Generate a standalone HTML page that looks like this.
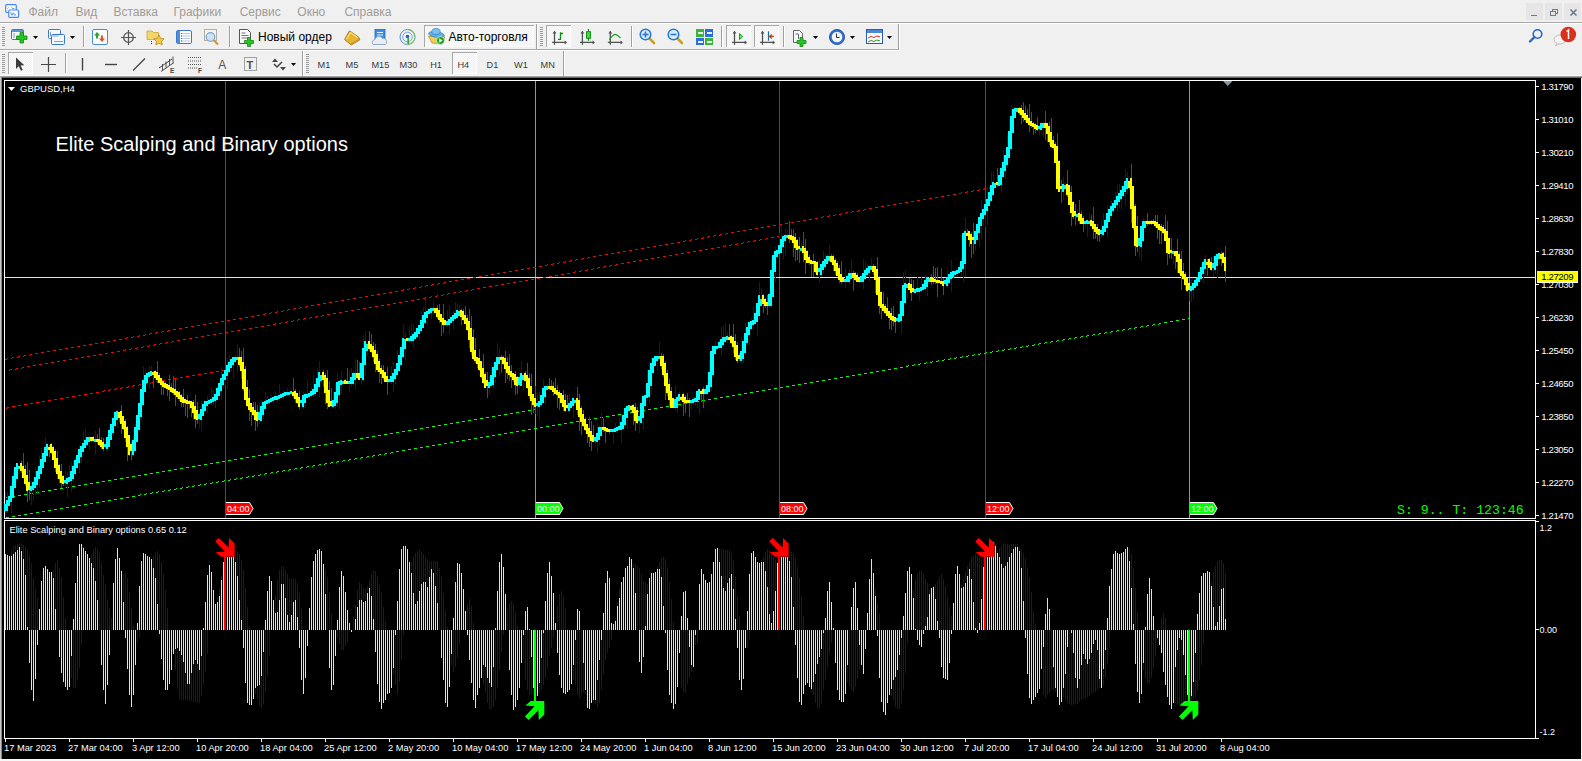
<!DOCTYPE html><html><head><meta charset="utf-8"><style>
html,body{margin:0;padding:0;}
body{width:1582px;height:761px;overflow:hidden;background:#f0f0f0;position:relative;font-family:'Liberation Sans', sans-serif;}
.t{position:absolute;white-space:nowrap;line-height:1;}
svg{position:absolute;left:0;top:0;}
</style></head><body>
<svg width="1582" height="761" viewBox="0 0 1582 761" style="font-family:'Liberation Sans', sans-serif">
<defs><pattern id="chk" x="0" y="0" width="2" height="2" patternUnits="userSpaceOnUse"><rect width="2" height="2" fill="#f0f0f0"/><rect width="1" height="1" fill="#fdfdfd"/><rect x="1" y="1" width="1" height="1" fill="#fdfdfd"/></pattern></defs>
<rect x="0" y="0" width="1582" height="22" fill="#f0f0f0"/>
<rect x="5.7" y="4.7" width="10.6" height="7.6" rx="1" fill="#fdfdfd" stroke="#4a88f0" stroke-width="1.2"/><path d="M7.5 8.5 l1 -1 M11.5 7.3 l1 1.3 h2" stroke="#4a88f0" stroke-width="0.9" fill="none"/><rect x="8.8" y="10" width="9.8" height="7.4" rx="1" fill="#fdfdfd" stroke="#4a88f0" stroke-width="1.2"/><path d="M10.5 12.3 l1.5 3 l1.3 -2.6 l1.5 2.6 l1.4 -1" stroke="#4a88f0" stroke-width="0.9" fill="none"/>
<text x="28.4" y="16" font-size="12" fill="#a19b97">Файл</text>
<text x="75.5" y="16" font-size="12" fill="#a19b97">Вид</text>
<text x="113.4" y="16" font-size="12" fill="#a19b97">Вставка</text>
<text x="173.4" y="16" font-size="12" fill="#a19b97">Графики</text>
<text x="239.7" y="16" font-size="12" fill="#a19b97">Сервис</text>
<text x="297.3" y="16" font-size="12" fill="#a19b97">Окно</text>
<text x="344.4" y="16" font-size="12" fill="#a19b97">Справка</text>
<rect x="1526" y="3" width="17" height="17" fill="#e6e6e6"/><rect x="1545" y="3" width="17" height="17" fill="#e6e6e6"/><rect x="1564" y="3" width="17" height="17" fill="#e6e6e6"/>
<g shape-rendering="crispEdges" fill="none" stroke="#6b7b8c" stroke-width="1.4"><path d="M1531 15.3 h6"/><rect x="1550.7" y="11.7" width="5" height="4"/><path d="M1552.7 11.7 v-2.3 h5 v4 h-2"/></g><path fill="none" d="M1570.5 9.5 l6 6 M1576.5 9.5 l-6 6" stroke="#6b7b8c" stroke-width="1.6"/>
<g shape-rendering="crispEdges"><rect x="0" y="22" width="1582" height="1" fill="#a9a9a9"/><rect x="0" y="23" width="1582" height="1" fill="#fdfdfd"/><rect x="0" y="49" width="899" height="1" fill="#a9a9a9"/><rect x="0" y="50" width="900" height="1" fill="#fdfdfd"/><rect x="0" y="75" width="1582" height="1" fill="#fbfbfb"/><rect x="0" y="76" width="1582" height="1" fill="#a0a0a0"/><rect x="0" y="77" width="1582" height="1" fill="#6a6a6a"/></g>
<g shape-rendering="crispEdges"><rect x="2" y="27" width="3" height="1" fill="#9c9c9c"/><rect x="2" y="29" width="3" height="1" fill="#9c9c9c"/><rect x="2" y="31" width="3" height="1" fill="#9c9c9c"/><rect x="2" y="33" width="3" height="1" fill="#9c9c9c"/><rect x="2" y="35" width="3" height="1" fill="#9c9c9c"/><rect x="2" y="37" width="3" height="1" fill="#9c9c9c"/><rect x="2" y="39" width="3" height="1" fill="#9c9c9c"/><rect x="2" y="41" width="3" height="1" fill="#9c9c9c"/><rect x="2" y="43" width="3" height="1" fill="#9c9c9c"/><rect x="2" y="45" width="3" height="1" fill="#9c9c9c"/></g>
<rect x="11.5" y="29.5" width="12" height="10" rx="1" fill="#f4f8fd" stroke="#3c78c8"/><rect x="12" y="30" width="11" height="2" fill="#5b95d9"/><path fill="none" d="M14 33 v5" stroke="#7da0c8"/><path d="M20 32.5 h3.5 v3.5 h3.5 v3.5 h-3.5 v3.5 h-3.5 v-3.5 h-3.5 v-3.5 h3.5 z" fill="#22c322" stroke="#118a11" stroke-width="0.8"/>
<path d="M33 36 h5 l-2.5 3 z" fill="#000"/>
<rect x="48.5" y="29.5" width="12" height="9" rx="1" fill="#f4f8fd" stroke="#3c78c8"/><rect x="51.5" y="34.5" width="13" height="10" rx="1" fill="#f4f8fd" stroke="#3c78c8"/><path fill="none" d="M50.5 32 v4 h8 M54 41.5 h9" stroke="#7da0c8"/>
<path d="M70 36 h5 l-2.5 3 z" fill="#000"/>
<rect x="83" y="26" width="1" height="21" fill="#a0a0a0" shape-rendering="crispEdges"/><rect x="84" y="26" width="1" height="21" fill="#ffffff" shape-rendering="crispEdges"/>
<rect x="92.5" y="29.5" width="15" height="15" rx="1.5" fill="#fbfcfe" stroke="#4a8ad8"/><path d="M97 32 l-3 3.5 h2 v3 h2 v-3 h2 z" fill="#2aa52a"/><path d="M102 42 l3 -3.5 h-2 v-3 h-2 v3 h-2 z" fill="#e0542a"/>
<circle cx="128.5" cy="37.5" r="4.8" fill="none" stroke="#555" stroke-width="1.3"/><path fill="none" d="M121 37.5 h15 M128.5 30 v15" stroke="#555" stroke-width="1.2"/>
<path d="M147 31 h5 l1.5 1.5 h5 v7 h-11.5 z" fill="#f3d66a" stroke="#c9a23a" stroke-width="0.8"/><path d="M159 35 l1.6 3.3 3.6 0.5 -2.6 2.5 0.6 3.6 -3.2 -1.7 -3.2 1.7 0.6 -3.6 -2.6 -2.5 3.6 -0.5 z" fill="#f2c844" stroke="#b98a1a" stroke-width="0.8"/><path fill="none" d="M151.5 41 v4" stroke="#333" stroke-dasharray="1 1"/>
<rect x="176.5" y="30.5" width="15" height="13" rx="1.5" fill="#fff" stroke="#3c78c8"/><rect x="177" y="31" width="3" height="12" fill="#4d8ed6"/><path fill="none" d="M182 33.5 h8 M182 36 h8 M182 38.5 h8 M182 41 h8" stroke="#9bb8e0" stroke-width="0.8"/><path fill="none" d="M181 33.5 h1 M181 38.5 h1" stroke="#e02020"/><path fill="none" d="M181 36 h1 M181 41 h1" stroke="#222"/>
<rect x="204.5" y="29.5" width="12" height="11" fill="#f7f4ee" stroke="#b9ad98"/><circle cx="210.5" cy="37" r="4.3" fill="#cfe2f6" stroke="#7aa6d6" stroke-width="1.2"/><path fill="none" d="M213.5 40 l4.5 4.5" stroke="#c99a2a" stroke-width="2"/>
<rect x="229" y="26" width="1" height="21" fill="#a0a0a0" shape-rendering="crispEdges"/><rect x="230" y="26" width="1" height="21" fill="#ffffff" shape-rendering="crispEdges"/>
<path d="M239.5 29.5 h8 l3 3 v11 h-11 z" fill="#fafafa" stroke="#555"/><path fill="none" d="M241.5 33 h4 M241.5 35.5 h7 M241.5 38 h7" stroke="#777"/><path d="M247.5 37.5 h3 v3 h3 v3 h-3 v3 h-3 v-3 h-3 v-3 h3 z" fill="#2ac42a" stroke="#118a11" stroke-width="0.8"/>
<text x="258" y="40.5" font-size="12" fill="#000">Новый ордер</text>
<path d="M344.5 39.5 L349.5 30.8 L358.8 37.2 L359.8 39.8 L351.2 45 Z" fill="#e7b52e" stroke="#a8701a" stroke-width="0.9" stroke-linejoin="round"/><path d="M346.5 39 L350.5 32.5 L357.5 37.5" fill="none" stroke="#f9e48c" stroke-width="1.1"/><path d="M351 44 L359 39" fill="none" stroke="#c98a2a" stroke-width="0.8"/>
<rect x="375" y="29.5" width="10" height="11" fill="#3a8ee6" stroke="#1e66b8" stroke-width="0.8"/><path fill="none" d="M377 32.5 h6 M377 35 h6" stroke="#dff0ff"/><path d="M373 44.5 a3 3 0 0 1 2 -5 a4 4 0 0 1 7.5 -1 a3 3 0 0 1 4 3 a2.5 2.5 0 0 1 -1 3 z" fill="#e9eef5" stroke="#8ba2bf" stroke-width="0.9"/>
<path d="M407.5 29.5 a7.5 7.5 0 0 0 0 15" fill="none" stroke="#5b8fe0" stroke-width="1"/><path d="M407.5 29.5 a7.5 7.5 0 0 1 0 15" fill="none" stroke="#7ab87a" stroke-width="1.4"/><circle cx="407.5" cy="37" r="4.8" fill="none" stroke="#6a9ae0" stroke-width="0.9"/><circle cx="407.5" cy="36.5" r="1.8" fill="#1f5fd0"/><path d="M408.2 37 v7" stroke="#2aa52a" stroke-width="1.5" fill="none"/>
<rect x="424" y="25" width="110" height="22" fill="url(#chk)" shape-rendering="crispEdges"/><path d="M424.5 47 V25.5 H534" stroke="#a8a8a8" fill="none" shape-rendering="crispEdges"/><path d="M425 46.5 H533.5 V26" stroke="#ffffff" fill="none" shape-rendering="crispEdges"/>
<path d="M428.5 36 L432 43 L442 44 L445 37 Z" fill="#f0d050" stroke="#b8922a" stroke-width="0.8"/><ellipse cx="436.5" cy="34.5" rx="8" ry="2.8" fill="#62b0e8" stroke="#3a80c0" stroke-width="0.7" transform="rotate(8 436.5 34.5)"/><ellipse cx="436" cy="31.5" rx="4.2" ry="3" fill="#7cc0f0" stroke="#3a80c0" stroke-width="0.7"/><circle cx="440.5" cy="40.5" r="4" fill="#22a022" stroke="#e8ffe8" stroke-width="0.7"/><path d="M439.2 38.3 v4.4 l3.3 -2.2 z" fill="#fff"/>
<text x="448.5" y="40.5" font-size="12" fill="#000">Авто-торговля</text>
<rect x="536" y="24" width="1" height="25" fill="#a0a0a0" shape-rendering="crispEdges"/><rect x="537" y="24" width="1" height="25" fill="#ffffff" shape-rendering="crispEdges"/>
<g shape-rendering="crispEdges"><rect x="540" y="27" width="3" height="1" fill="#9c9c9c"/><rect x="540" y="29" width="3" height="1" fill="#9c9c9c"/><rect x="540" y="31" width="3" height="1" fill="#9c9c9c"/><rect x="540" y="33" width="3" height="1" fill="#9c9c9c"/><rect x="540" y="35" width="3" height="1" fill="#9c9c9c"/><rect x="540" y="37" width="3" height="1" fill="#9c9c9c"/><rect x="540" y="39" width="3" height="1" fill="#9c9c9c"/><rect x="540" y="41" width="3" height="1" fill="#9c9c9c"/><rect x="540" y="43" width="3" height="1" fill="#9c9c9c"/><rect x="540" y="45" width="3" height="1" fill="#9c9c9c"/></g>
<rect x="546" y="25" width="25" height="22" fill="url(#chk)" shape-rendering="crispEdges"/><path d="M546.5 47 V25.5 H571" stroke="#a8a8a8" fill="none" shape-rendering="crispEdges"/><path d="M547 46.5 H570.5 V26" stroke="#ffffff" fill="none" shape-rendering="crispEdges"/>
<path d="M554.5 31.5 V44.8 M552.1 42.4 H565.5" stroke="#505050" fill="none" stroke-width="1.3"/><path d="M552.6 33.6 L554.5 30.8 L556.4 33.6 Z M564.7 40.4 L567.1 42.4 L564.7 44.4 Z" fill="#505050"/>
<path d="M558 39.4 H560.5 V32.3 M560.5 33.5 H563" stroke="#128a12" fill="none" stroke-width="1.3"/>
<path d="M582.4 31.5 V44.8 M580.0 42.4 H593.4" stroke="#505050" fill="none" stroke-width="1.3"/><path d="M580.5 33.6 L582.4 30.8 L584.3 33.6 Z M592.6 40.4 L595.0 42.4 L592.6 44.4 Z" fill="#505050"/>
<path d="M588.5 29 V40.8" stroke="#0a8a0a" stroke-width="1.2" fill="none"/><rect x="586.6" y="31.7" width="3.8" height="6.6" fill="#44dd44" stroke="#0a8a0a" stroke-width="1"/>
<path d="M610.3 31.5 V44.8 M607.9 42.4 H621.3" stroke="#505050" fill="none" stroke-width="1.3"/><path d="M608.4 33.6 L610.3 30.8 L612.1999999999999 33.6 Z M620.5 40.4 L622.9 42.4 L620.5 44.4 Z" fill="#505050"/>
<path d="M609.4 39.6 Q612.5 35 615 34.4 Q617 34.4 620.5 38.2" stroke="#2a9a2a" fill="none" stroke-width="1.2"/>
<rect x="631" y="26" width="1" height="21" fill="#a0a0a0" shape-rendering="crispEdges"/><rect x="632" y="26" width="1" height="21" fill="#ffffff" shape-rendering="crispEdges"/>
<path fill="none" d="M649.0 38.0 l5 5" stroke="#c9a02a" stroke-width="2.6" stroke-linecap="round"/><circle cx="645.5" cy="34.5" r="5.3" fill="#d8ecfb" stroke="#2a78d0" stroke-width="1.5"/><path fill="none" d="M642.5 34.5 h6" stroke="#2a78d0" stroke-width="1.6"/><path fill="none" d="M645.5 31.5 v6" stroke="#2a78d0" stroke-width="1.6"/>
<path fill="none" d="M677.0 38.0 l5 5" stroke="#c9a02a" stroke-width="2.6" stroke-linecap="round"/><circle cx="673.5" cy="34.5" r="5.3" fill="#d8ecfb" stroke="#2a78d0" stroke-width="1.5"/><path fill="none" d="M670.5 34.5 h6" stroke="#2a78d0" stroke-width="1.6"/>
<g shape-rendering="crispEdges"><rect x="696" y="29" width="8" height="7.5" fill="#3cb43c"/><rect x="705" y="29" width="8" height="7.5" fill="#2a6ed8"/><rect x="696" y="37.5" width="8" height="7.5" fill="#2a6ed8"/><rect x="705" y="37.5" width="8" height="7.5" fill="#3cb43c"/><rect x="697.5" y="32" width="5" height="2" fill="#e8f4e8"/><rect x="706.5" y="32" width="5" height="2" fill="#e8f0ff"/><rect x="697.5" y="40.5" width="5" height="2" fill="#e8f0ff"/><rect x="706.5" y="40.5" width="5" height="2" fill="#e8f4e8"/></g>
<rect x="721" y="26" width="1" height="21" fill="#a0a0a0" shape-rendering="crispEdges"/><rect x="722" y="26" width="1" height="21" fill="#ffffff" shape-rendering="crispEdges"/>
<rect x="726" y="25" width="25" height="22" fill="url(#chk)" shape-rendering="crispEdges"/><path d="M726.5 47 V25.5 H751" stroke="#a8a8a8" fill="none" shape-rendering="crispEdges"/><path d="M727 46.5 H750.5 V26" stroke="#ffffff" fill="none" shape-rendering="crispEdges"/>
<path d="M734.5 31.5 V44.8 M732.1 42.4 H745.5" stroke="#505050" fill="none" stroke-width="1.3"/><path d="M732.6 33.6 L734.5 30.8 L736.4 33.6 Z M744.7 40.4 L747.1 42.4 L744.7 44.4 Z" fill="#505050"/>
<path d="M739.5 33.6 V39.6 L742.7 36.6 Z" fill="#6ae86a" stroke="#12a012" stroke-width="1"/>
<rect x="754" y="25" width="25" height="22" fill="url(#chk)" shape-rendering="crispEdges"/><path d="M754.5 47 V25.5 H779" stroke="#a8a8a8" fill="none" shape-rendering="crispEdges"/><path d="M755 46.5 H778.5 V26" stroke="#ffffff" fill="none" shape-rendering="crispEdges"/>
<path d="M762.5 31.5 V44.8 M760.1 42.4 H773.5" stroke="#505050" fill="none" stroke-width="1.3"/><path d="M760.6 33.6 L762.5 30.8 L764.4 33.6 Z M772.7 40.4 L775.1 42.4 L772.7 44.4 Z" fill="#505050"/>
<path fill="none" d="M768.5 31.3 V40.7" stroke="#1a6aa0" stroke-width="1.2"/><path d="M774 36.4 H769.8 M771.8 34.4 L769.6 36.4 L771.8 38.4" stroke="#c8400a" stroke-width="1.3" fill="none"/>
<rect x="783" y="26" width="1" height="21" fill="#a0a0a0" shape-rendering="crispEdges"/><rect x="784" y="26" width="1" height="21" fill="#ffffff" shape-rendering="crispEdges"/>
<path d="M793.5 30.5 h6 l3 3 v9 h-9 z" fill="#fafafa" stroke="#666"/><path d="M795.5 34 h3 v5" stroke="#666" fill="none"/><path d="M800 37.5 h3 v3 h3 v3 h-3 v3 h-3 v-3 h-3 v-3 h3 z" fill="#2ac42a" stroke="#118a11" stroke-width="0.8"/>
<path d="M813 36 h5 l-2.5 3 z" fill="#000"/>
<circle cx="837" cy="37" r="7.6" fill="#2f6fd0" stroke="#1a4a9a" stroke-width="0.8"/><circle cx="837" cy="37" r="5.3" fill="#f4f6fa"/><path d="M836.5 33.5 v4 h3" stroke="#333" stroke-width="1" fill="none"/>
<path d="M850 36 h5 l-2.5 3 z" fill="#000"/>
<rect x="866.5" y="29.5" width="16" height="14" fill="#fff" stroke="#2a5ab0"/><rect x="867" y="30" width="15" height="3" fill="#4a8ad8"/><path d="M868 38 l3 -1.5 3 1 3 -1.5 3 1" stroke="#d03030" fill="none"/><path d="M868 42 l3 -1.5 3 1 3 -1.5 3 1" stroke="#2a9a2a" fill="none"/>
<path d="M887 36 h5 l-2.5 3 z" fill="#000"/>
<rect x="898" y="24" width="1" height="25" fill="#a0a0a0" shape-rendering="crispEdges"/><rect x="899" y="24" width="1" height="25" fill="#ffffff" shape-rendering="crispEdges"/>
<circle cx="1537.5" cy="34" r="4.3" fill="none" stroke="#2a64c8" stroke-width="1.6"/><path fill="none" d="M1534.5 37 l-4.5 4.5" stroke="#2a64c8" stroke-width="2.4" stroke-linecap="round"/>
<ellipse cx="1560" cy="39.5" rx="6" ry="4.5" fill="#f4f4f4" stroke="#b8b8b8" stroke-width="0.9"/><path d="M1557 43 l-1.5 3 l4 -2.5" fill="#f4f4f4" stroke="#b8b8b8" stroke-width="0.8"/><circle cx="1568.3" cy="34.5" r="7.8" fill="#d8321e"/><path d="M1566.5 31.5 l2 -1.5 v9" stroke="#fff" stroke-width="1.5" fill="none"/>
<g shape-rendering="crispEdges"><rect x="2" y="54" width="3" height="1" fill="#9c9c9c"/><rect x="2" y="56" width="3" height="1" fill="#9c9c9c"/><rect x="2" y="58" width="3" height="1" fill="#9c9c9c"/><rect x="2" y="60" width="3" height="1" fill="#9c9c9c"/><rect x="2" y="62" width="3" height="1" fill="#9c9c9c"/><rect x="2" y="64" width="3" height="1" fill="#9c9c9c"/><rect x="2" y="66" width="3" height="1" fill="#9c9c9c"/><rect x="2" y="68" width="3" height="1" fill="#9c9c9c"/><rect x="2" y="70" width="3" height="1" fill="#9c9c9c"/><rect x="2" y="72" width="3" height="1" fill="#9c9c9c"/></g>
<rect x="8" y="52" width="25" height="22" fill="url(#chk)" shape-rendering="crispEdges"/><path d="M8.5 74 V52.5 H33" stroke="#a8a8a8" fill="none" shape-rendering="crispEdges"/><path d="M9 73.5 H32.5 V53" stroke="#ffffff" fill="none" shape-rendering="crispEdges"/>
<path d="M16 57.5 v11.5 l2.7 -2.7 l2.3 4.5 l1.8 -0.9 l-2.2 -4.4 l3.7 -0.2 z" fill="#3c3c3c"/>
<path fill="none" d="M41 64.5 h15 M48.5 57 v15" stroke="#4a4a4a" stroke-width="1.2"/>
<rect x="65" y="53" width="1" height="20" fill="#a0a0a0" shape-rendering="crispEdges"/><rect x="66" y="53" width="1" height="20" fill="#ffffff" shape-rendering="crispEdges"/>
<path fill="none" d="M82.5 58 v12.5" stroke="#444" stroke-width="1.4"/>
<path fill="none" d="M105 64.5 h12" stroke="#444" stroke-width="1.4"/>
<path fill="none" d="M133 70.5 l12 -12" stroke="#444" stroke-width="1.3"/>
<path fill="none" d="M159 68 l13 -9 M161 71.5 l13 -9" stroke="#444" stroke-width="1"/><path fill="none" d="M162.5 70 v-6 M166 67.5 v-6 M169.5 65 v-6 M173 62.5 v-6" stroke="#444" stroke-width="0.9"/><text x="170" y="73" font-size="6.5" font-weight="bold" fill="#444">E</text>
<path fill="none" d="M188 57.5 h13 M188 61 h13 M188 64.5 h13 M188 68 h10" stroke="#555" stroke-dasharray="1 1" stroke-width="1"/><text x="198" y="73" font-size="6.5" font-weight="bold" fill="#444">F</text>
<text x="218.3" y="69" font-size="12" fill="#555">A</text>
<rect x="244.5" y="57.5" width="12" height="13" fill="none" stroke="#555" stroke-dasharray="1 1"/><text x="246.5" y="69" font-size="11" font-weight="bold" fill="#505050">T</text>
<path d="M272 62 l3 -3.5 l3 3.5 z M280 67 l3 3.5 l3 -3.5 z" fill="#444"/><path d="M274 64 l3 3 l5 -5" stroke="#444" stroke-width="1.5" fill="none"/>
<path d="M291 63 h5 l-2.5 3 z" fill="#000"/>
<rect x="302" y="51" width="1" height="25" fill="#a0a0a0" shape-rendering="crispEdges"/><rect x="303" y="51" width="1" height="25" fill="#ffffff" shape-rendering="crispEdges"/>
<g shape-rendering="crispEdges"><rect x="306" y="54" width="3" height="1" fill="#9c9c9c"/><rect x="306" y="56" width="3" height="1" fill="#9c9c9c"/><rect x="306" y="58" width="3" height="1" fill="#9c9c9c"/><rect x="306" y="60" width="3" height="1" fill="#9c9c9c"/><rect x="306" y="62" width="3" height="1" fill="#9c9c9c"/><rect x="306" y="64" width="3" height="1" fill="#9c9c9c"/><rect x="306" y="66" width="3" height="1" fill="#9c9c9c"/><rect x="306" y="68" width="3" height="1" fill="#9c9c9c"/><rect x="306" y="70" width="3" height="1" fill="#9c9c9c"/><rect x="306" y="72" width="3" height="1" fill="#9c9c9c"/></g>
<rect x="452" y="52" width="25" height="22" fill="url(#chk)" shape-rendering="crispEdges"/><path d="M452.5 74 V52.5 H477" stroke="#a8a8a8" fill="none" shape-rendering="crispEdges"/><path d="M453 73.5 H476.5 V53" stroke="#ffffff" fill="none" shape-rendering="crispEdges"/>
<text x="317.5" y="68.3" font-size="9.2" fill="#3a3a3a">M1</text>
<text x="345.6" y="68.3" font-size="9.2" fill="#3a3a3a">M5</text>
<text x="371.4" y="68.3" font-size="9.2" fill="#3a3a3a">M15</text>
<text x="399.6" y="68.3" font-size="9.2" fill="#3a3a3a">M30</text>
<text x="430.2" y="68.3" font-size="9.2" fill="#3a3a3a">H1</text>
<text x="457.4" y="68.3" font-size="9.2" fill="#3a3a3a">H4</text>
<text x="486.6" y="68.3" font-size="9.2" fill="#3a3a3a">D1</text>
<text x="514" y="68.3" font-size="9.2" fill="#3a3a3a">W1</text>
<text x="540.5" y="68.3" font-size="9.2" fill="#3a3a3a">MN</text>
<rect x="563" y="51" width="1" height="25" fill="#a0a0a0" shape-rendering="crispEdges"/><rect x="564" y="51" width="1" height="25" fill="#ffffff" shape-rendering="crispEdges"/>
<rect x="2" y="78" width="1579" height="681" fill="#000"/>
<rect x="0" y="77" width="1" height="684" fill="#c8c8c8"/><rect x="1" y="77" width="1" height="684" fill="#8a8a8a"/>
<rect x="0" y="759" width="1582" height="2" fill="#f7f7f7"/>
<g shape-rendering="crispEdges" fill="none" stroke="#ffffff" stroke-width="1"><path d="M4.5 518.5 V80.5 H1535.5 V518.5 H4.5"/><path d="M4.5 738.5 V520.5 H1535.5 V738.5 H4.5"/></g>
<rect x="1536" y="86" width="3" height="1" fill="#fff" shape-rendering="crispEdges"/>
<text x="1541.3" y="89.6" font-size="9.6" letter-spacing="-0.4" fill="#fff">1.31790</text>
<rect x="1536" y="119" width="3" height="1" fill="#fff" shape-rendering="crispEdges"/>
<text x="1541.3" y="122.6" font-size="9.6" letter-spacing="-0.4" fill="#fff">1.31010</text>
<rect x="1536" y="152" width="3" height="1" fill="#fff" shape-rendering="crispEdges"/>
<text x="1541.3" y="155.6" font-size="9.6" letter-spacing="-0.4" fill="#fff">1.30210</text>
<rect x="1536" y="185" width="3" height="1" fill="#fff" shape-rendering="crispEdges"/>
<text x="1541.3" y="188.6" font-size="9.6" letter-spacing="-0.4" fill="#fff">1.29410</text>
<rect x="1536" y="218" width="3" height="1" fill="#fff" shape-rendering="crispEdges"/>
<text x="1541.3" y="221.6" font-size="9.6" letter-spacing="-0.4" fill="#fff">1.28630</text>
<rect x="1536" y="251" width="3" height="1" fill="#fff" shape-rendering="crispEdges"/>
<text x="1541.3" y="254.6" font-size="9.6" letter-spacing="-0.4" fill="#fff">1.27830</text>
<rect x="1536" y="284" width="3" height="1" fill="#fff" shape-rendering="crispEdges"/>
<text x="1541.3" y="287.6" font-size="9.6" letter-spacing="-0.4" fill="#fff">1.27030</text>
<rect x="1536" y="317" width="3" height="1" fill="#fff" shape-rendering="crispEdges"/>
<text x="1541.3" y="320.6" font-size="9.6" letter-spacing="-0.4" fill="#fff">1.26230</text>
<rect x="1536" y="350" width="3" height="1" fill="#fff" shape-rendering="crispEdges"/>
<text x="1541.3" y="353.6" font-size="9.6" letter-spacing="-0.4" fill="#fff">1.25450</text>
<rect x="1536" y="383" width="3" height="1" fill="#fff" shape-rendering="crispEdges"/>
<text x="1541.3" y="386.6" font-size="9.6" letter-spacing="-0.4" fill="#fff">1.24650</text>
<rect x="1536" y="416" width="3" height="1" fill="#fff" shape-rendering="crispEdges"/>
<text x="1541.3" y="419.6" font-size="9.6" letter-spacing="-0.4" fill="#fff">1.23850</text>
<rect x="1536" y="449" width="3" height="1" fill="#fff" shape-rendering="crispEdges"/>
<text x="1541.3" y="452.6" font-size="9.6" letter-spacing="-0.4" fill="#fff">1.23050</text>
<rect x="1536" y="482" width="3" height="1" fill="#fff" shape-rendering="crispEdges"/>
<text x="1541.3" y="485.6" font-size="9.6" letter-spacing="-0.4" fill="#fff">1.22270</text>
<rect x="1536" y="515" width="3" height="1" fill="#fff" shape-rendering="crispEdges"/>
<text x="1541.3" y="518.6" font-size="9.6" letter-spacing="-0.4" fill="#fff">1.21470</text>
<rect x="1536" y="521" width="3" height="1" fill="#fff" shape-rendering="crispEdges"/>
<text x="1539.5" y="530.6" font-size="9" fill="#fff">1.2</text>
<rect x="1536" y="629" width="3" height="1" fill="#fff" shape-rendering="crispEdges"/>
<text x="1539.5" y="632.6" font-size="9" fill="#fff">0.00</text>
<rect x="1536" y="738" width="3" height="1" fill="#fff" shape-rendering="crispEdges"/>
<text x="1539.5" y="734.6" font-size="9" fill="#fff">-1.2</text>
<rect x="5" y="739" width="1" height="3" fill="#fff" shape-rendering="crispEdges"/>
<text x="4" y="751.2" font-size="9.3" fill="#fff">17 Mar 2023</text>
<rect x="69" y="739" width="1" height="3" fill="#fff" shape-rendering="crispEdges"/>
<text x="68" y="751.2" font-size="9.3" fill="#fff">27 Mar 04:00</text>
<rect x="133" y="739" width="1" height="3" fill="#fff" shape-rendering="crispEdges"/>
<text x="132" y="751.2" font-size="9.3" fill="#fff">3 Apr 12:00</text>
<rect x="197" y="739" width="1" height="3" fill="#fff" shape-rendering="crispEdges"/>
<text x="196" y="751.2" font-size="9.3" fill="#fff">10 Apr 20:00</text>
<rect x="261" y="739" width="1" height="3" fill="#fff" shape-rendering="crispEdges"/>
<text x="260" y="751.2" font-size="9.3" fill="#fff">18 Apr 04:00</text>
<rect x="325" y="739" width="1" height="3" fill="#fff" shape-rendering="crispEdges"/>
<text x="324" y="751.2" font-size="9.3" fill="#fff">25 Apr 12:00</text>
<rect x="389" y="739" width="1" height="3" fill="#fff" shape-rendering="crispEdges"/>
<text x="388" y="751.2" font-size="9.3" fill="#fff">2 May 20:00</text>
<rect x="453" y="739" width="1" height="3" fill="#fff" shape-rendering="crispEdges"/>
<text x="452" y="751.2" font-size="9.3" fill="#fff">10 May 04:00</text>
<rect x="517" y="739" width="1" height="3" fill="#fff" shape-rendering="crispEdges"/>
<text x="516" y="751.2" font-size="9.3" fill="#fff">17 May 12:00</text>
<rect x="581" y="739" width="1" height="3" fill="#fff" shape-rendering="crispEdges"/>
<text x="580" y="751.2" font-size="9.3" fill="#fff">24 May 20:00</text>
<rect x="645" y="739" width="1" height="3" fill="#fff" shape-rendering="crispEdges"/>
<text x="644" y="751.2" font-size="9.3" fill="#fff">1 Jun 04:00</text>
<rect x="709" y="739" width="1" height="3" fill="#fff" shape-rendering="crispEdges"/>
<text x="708" y="751.2" font-size="9.3" fill="#fff">8 Jun 12:00</text>
<rect x="773" y="739" width="1" height="3" fill="#fff" shape-rendering="crispEdges"/>
<text x="772" y="751.2" font-size="9.3" fill="#fff">15 Jun 20:00</text>
<rect x="837" y="739" width="1" height="3" fill="#fff" shape-rendering="crispEdges"/>
<text x="836" y="751.2" font-size="9.3" fill="#fff">23 Jun 04:00</text>
<rect x="901" y="739" width="1" height="3" fill="#fff" shape-rendering="crispEdges"/>
<text x="900" y="751.2" font-size="9.3" fill="#fff">30 Jun 12:00</text>
<rect x="965" y="739" width="1" height="3" fill="#fff" shape-rendering="crispEdges"/>
<text x="964" y="751.2" font-size="9.3" fill="#fff">7 Jul 20:00</text>
<rect x="1029" y="739" width="1" height="3" fill="#fff" shape-rendering="crispEdges"/>
<text x="1028" y="751.2" font-size="9.3" fill="#fff">17 Jul 04:00</text>
<rect x="1093" y="739" width="1" height="3" fill="#fff" shape-rendering="crispEdges"/>
<text x="1092" y="751.2" font-size="9.3" fill="#fff">24 Jul 12:00</text>
<rect x="1157" y="739" width="1" height="3" fill="#fff" shape-rendering="crispEdges"/>
<text x="1156" y="751.2" font-size="9.3" fill="#fff">31 Jul 20:00</text>
<rect x="1221" y="739" width="1" height="3" fill="#fff" shape-rendering="crispEdges"/>
<text x="1220" y="751.2" font-size="9.3" fill="#fff">8 Aug 04:00</text>
<g shape-rendering="crispEdges"><rect x="11" y="550" width="1" height="80" fill="#0000ff"/><rect x="13" y="546" width="1" height="84" fill="#0000ff"/><rect x="15" y="545" width="1" height="85" fill="#0000ff"/><rect x="17" y="544" width="1" height="86" fill="#0000ff"/><rect x="19" y="543" width="1" height="87" fill="#0000ff"/><rect x="21" y="544" width="1" height="86" fill="#0000ff"/><rect x="23" y="545" width="1" height="85" fill="#0000ff"/><rect x="25" y="547" width="1" height="83" fill="#0000ff"/><rect x="27" y="550" width="1" height="80" fill="#0000ff"/><rect x="29" y="555" width="1" height="75" fill="#0000ff"/><rect x="31" y="563" width="1" height="67" fill="#0000ff"/><rect x="33" y="578" width="1" height="52" fill="#0000ff"/><rect x="35" y="589" width="1" height="41" fill="#0000ff"/><rect x="37" y="598" width="1" height="32" fill="#0000ff"/><rect x="53" y="570" width="1" height="60" fill="#0000ff"/><rect x="55" y="563" width="1" height="67" fill="#0000ff"/><rect x="57" y="561" width="1" height="69" fill="#0000ff"/><rect x="59" y="568" width="1" height="62" fill="#0000ff"/><rect x="61" y="578" width="1" height="52" fill="#0000ff"/><rect x="63" y="597" width="1" height="33" fill="#0000ff"/><rect x="65" y="618" width="1" height="12" fill="#0000ff"/><rect x="71" y="630" width="1" height="48" fill="#0000ff"/><rect x="73" y="630" width="1" height="57" fill="#0000ff"/><rect x="75" y="630" width="1" height="58" fill="#0000ff"/><rect x="77" y="630" width="1" height="50" fill="#0000ff"/><rect x="79" y="630" width="1" height="38" fill="#0000ff"/><rect x="81" y="630" width="1" height="15" fill="#0000ff"/><rect x="89" y="560" width="1" height="70" fill="#0000ff"/><rect x="91" y="555" width="1" height="75" fill="#0000ff"/><rect x="93" y="549" width="1" height="81" fill="#0000ff"/><rect x="95" y="547" width="1" height="83" fill="#0000ff"/><rect x="97" y="549" width="1" height="81" fill="#0000ff"/><rect x="99" y="553" width="1" height="77" fill="#0000ff"/><rect x="101" y="563" width="1" height="67" fill="#0000ff"/><rect x="103" y="575" width="1" height="55" fill="#0000ff"/><rect x="105" y="585" width="1" height="45" fill="#0000ff"/><rect x="107" y="599" width="1" height="31" fill="#0000ff"/><rect x="109" y="608" width="1" height="22" fill="#0000ff"/><rect x="111" y="618" width="1" height="12" fill="#0000ff"/><rect x="119" y="580" width="1" height="50" fill="#0000ff"/><rect x="121" y="576" width="1" height="54" fill="#0000ff"/><rect x="123" y="575" width="1" height="55" fill="#0000ff"/><rect x="125" y="573" width="1" height="57" fill="#0000ff"/><rect x="127" y="578" width="1" height="52" fill="#0000ff"/><rect x="129" y="593" width="1" height="37" fill="#0000ff"/><rect x="131" y="608" width="1" height="22" fill="#0000ff"/><rect x="133" y="626" width="1" height="4" fill="#0000ff"/><rect x="135" y="630" width="1" height="13" fill="#0000ff"/><rect x="137" y="630" width="1" height="13" fill="#0000ff"/><rect x="139" y="630" width="1" height="8" fill="#0000ff"/><rect x="153" y="556" width="1" height="74" fill="#0000ff"/><rect x="155" y="552" width="1" height="78" fill="#0000ff"/><rect x="157" y="551" width="1" height="79" fill="#0000ff"/><rect x="159" y="554" width="1" height="76" fill="#0000ff"/><rect x="161" y="562" width="1" height="68" fill="#0000ff"/><rect x="163" y="574" width="1" height="56" fill="#0000ff"/><rect x="165" y="590" width="1" height="40" fill="#0000ff"/><rect x="167" y="608" width="1" height="22" fill="#0000ff"/><rect x="173" y="630" width="1" height="15" fill="#0000ff"/><rect x="175" y="630" width="1" height="39" fill="#0000ff"/><rect x="177" y="630" width="1" height="59" fill="#0000ff"/><rect x="179" y="630" width="1" height="69" fill="#0000ff"/><rect x="181" y="630" width="1" height="70" fill="#0000ff"/><rect x="183" y="630" width="1" height="70" fill="#0000ff"/><rect x="185" y="630" width="1" height="70" fill="#0000ff"/><rect x="187" y="630" width="1" height="70" fill="#0000ff"/><rect x="189" y="630" width="1" height="71" fill="#0000ff"/><rect x="191" y="630" width="1" height="71" fill="#0000ff"/><rect x="193" y="630" width="1" height="72" fill="#0000ff"/><rect x="195" y="630" width="1" height="72" fill="#0000ff"/><rect x="197" y="630" width="1" height="73" fill="#0000ff"/><rect x="199" y="630" width="1" height="73" fill="#0000ff"/><rect x="201" y="630" width="1" height="66" fill="#0000ff"/><rect x="203" y="630" width="1" height="55" fill="#0000ff"/><rect x="205" y="630" width="1" height="42" fill="#0000ff"/><rect x="207" y="630" width="1" height="24" fill="#0000ff"/><rect x="217" y="597" width="1" height="33" fill="#0000ff"/><rect x="219" y="589" width="1" height="41" fill="#0000ff"/><rect x="221" y="576" width="1" height="54" fill="#0000ff"/><rect x="223" y="565" width="1" height="65" fill="#0000ff"/><rect x="235" y="552" width="1" height="78" fill="#0000ff"/><rect x="237" y="551" width="1" height="79" fill="#0000ff"/><rect x="239" y="554" width="1" height="76" fill="#0000ff"/><rect x="241" y="560" width="1" height="70" fill="#0000ff"/><rect x="243" y="570" width="1" height="60" fill="#0000ff"/><rect x="245" y="588" width="1" height="42" fill="#0000ff"/><rect x="247" y="607" width="1" height="23" fill="#0000ff"/><rect x="249" y="626" width="1" height="4" fill="#0000ff"/><rect x="255" y="630" width="1" height="64" fill="#0000ff"/><rect x="257" y="630" width="1" height="69" fill="#0000ff"/><rect x="259" y="630" width="1" height="76" fill="#0000ff"/><rect x="261" y="630" width="1" height="78" fill="#0000ff"/><rect x="263" y="630" width="1" height="74" fill="#0000ff"/><rect x="265" y="630" width="1" height="62" fill="#0000ff"/><rect x="267" y="630" width="1" height="46" fill="#0000ff"/><rect x="269" y="630" width="1" height="26" fill="#0000ff"/><rect x="273" y="610" width="1" height="20" fill="#0000ff"/><rect x="275" y="595" width="1" height="35" fill="#0000ff"/><rect x="277" y="580" width="1" height="50" fill="#0000ff"/><rect x="279" y="570" width="1" height="60" fill="#0000ff"/><rect x="281" y="566" width="1" height="64" fill="#0000ff"/><rect x="283" y="567" width="1" height="63" fill="#0000ff"/><rect x="285" y="570" width="1" height="60" fill="#0000ff"/><rect x="287" y="574" width="1" height="56" fill="#0000ff"/><rect x="289" y="578" width="1" height="52" fill="#0000ff"/><rect x="291" y="579" width="1" height="51" fill="#0000ff"/><rect x="293" y="579" width="1" height="51" fill="#0000ff"/><rect x="295" y="579" width="1" height="51" fill="#0000ff"/><rect x="297" y="583" width="1" height="47" fill="#0000ff"/><rect x="299" y="593" width="1" height="37" fill="#0000ff"/><rect x="301" y="608" width="1" height="22" fill="#0000ff"/><rect x="305" y="630" width="1" height="8" fill="#0000ff"/><rect x="307" y="630" width="1" height="8" fill="#0000ff"/><rect x="323" y="568" width="1" height="62" fill="#0000ff"/><rect x="325" y="570" width="1" height="60" fill="#0000ff"/><rect x="327" y="577" width="1" height="53" fill="#0000ff"/><rect x="329" y="593" width="1" height="37" fill="#0000ff"/><rect x="331" y="614" width="1" height="16" fill="#0000ff"/><rect x="337" y="630" width="1" height="8" fill="#0000ff"/><rect x="339" y="630" width="1" height="14" fill="#0000ff"/><rect x="341" y="630" width="1" height="20" fill="#0000ff"/><rect x="343" y="630" width="1" height="20" fill="#0000ff"/><rect x="345" y="630" width="1" height="16" fill="#0000ff"/><rect x="347" y="630" width="1" height="12" fill="#0000ff"/><rect x="353" y="616" width="1" height="14" fill="#0000ff"/><rect x="355" y="605" width="1" height="25" fill="#0000ff"/><rect x="357" y="590" width="1" height="40" fill="#0000ff"/><rect x="359" y="582" width="1" height="48" fill="#0000ff"/><rect x="361" y="584" width="1" height="46" fill="#0000ff"/><rect x="363" y="588" width="1" height="42" fill="#0000ff"/><rect x="365" y="589" width="1" height="41" fill="#0000ff"/><rect x="367" y="586" width="1" height="44" fill="#0000ff"/><rect x="369" y="580" width="1" height="50" fill="#0000ff"/><rect x="371" y="574" width="1" height="56" fill="#0000ff"/><rect x="373" y="570" width="1" height="60" fill="#0000ff"/><rect x="375" y="571" width="1" height="59" fill="#0000ff"/><rect x="377" y="577" width="1" height="53" fill="#0000ff"/><rect x="379" y="585" width="1" height="45" fill="#0000ff"/><rect x="381" y="592" width="1" height="38" fill="#0000ff"/><rect x="383" y="607" width="1" height="23" fill="#0000ff"/><rect x="385" y="621" width="1" height="9" fill="#0000ff"/><rect x="393" y="630" width="1" height="45" fill="#0000ff"/><rect x="395" y="630" width="1" height="55" fill="#0000ff"/><rect x="397" y="630" width="1" height="64" fill="#0000ff"/><rect x="399" y="630" width="1" height="52" fill="#0000ff"/><rect x="401" y="630" width="1" height="30" fill="#0000ff"/><rect x="403" y="630" width="1" height="5" fill="#0000ff"/><rect x="411" y="562" width="1" height="68" fill="#0000ff"/><rect x="413" y="557" width="1" height="73" fill="#0000ff"/><rect x="415" y="553" width="1" height="77" fill="#0000ff"/><rect x="417" y="551" width="1" height="79" fill="#0000ff"/><rect x="419" y="549" width="1" height="81" fill="#0000ff"/><rect x="421" y="552" width="1" height="78" fill="#0000ff"/><rect x="423" y="554" width="1" height="76" fill="#0000ff"/><rect x="425" y="557" width="1" height="73" fill="#0000ff"/><rect x="427" y="559" width="1" height="71" fill="#0000ff"/><rect x="429" y="561" width="1" height="69" fill="#0000ff"/><rect x="431" y="561" width="1" height="69" fill="#0000ff"/><rect x="433" y="561" width="1" height="69" fill="#0000ff"/><rect x="435" y="561" width="1" height="69" fill="#0000ff"/><rect x="437" y="561" width="1" height="69" fill="#0000ff"/><rect x="439" y="568" width="1" height="62" fill="#0000ff"/><rect x="441" y="577" width="1" height="53" fill="#0000ff"/><rect x="443" y="593" width="1" height="37" fill="#0000ff"/><rect x="445" y="611" width="1" height="19" fill="#0000ff"/><rect x="447" y="627" width="1" height="3" fill="#0000ff"/><rect x="451" y="630" width="1" height="35" fill="#0000ff"/><rect x="453" y="630" width="1" height="42" fill="#0000ff"/><rect x="455" y="630" width="1" height="37" fill="#0000ff"/><rect x="457" y="630" width="1" height="28" fill="#0000ff"/><rect x="459" y="630" width="1" height="15" fill="#0000ff"/><rect x="467" y="604" width="1" height="26" fill="#0000ff"/><rect x="469" y="599" width="1" height="31" fill="#0000ff"/><rect x="471" y="606" width="1" height="24" fill="#0000ff"/><rect x="473" y="623" width="1" height="7" fill="#0000ff"/><rect x="483" y="630" width="1" height="55" fill="#0000ff"/><rect x="485" y="630" width="1" height="63" fill="#0000ff"/><rect x="487" y="630" width="1" height="73" fill="#0000ff"/><rect x="489" y="630" width="1" height="79" fill="#0000ff"/><rect x="491" y="630" width="1" height="79" fill="#0000ff"/><rect x="493" y="630" width="1" height="77" fill="#0000ff"/><rect x="495" y="630" width="1" height="70" fill="#0000ff"/><rect x="497" y="630" width="1" height="58" fill="#0000ff"/><rect x="499" y="630" width="1" height="40" fill="#0000ff"/><rect x="501" y="630" width="1" height="22" fill="#0000ff"/><rect x="503" y="630" width="1" height="5" fill="#0000ff"/><rect x="507" y="609" width="1" height="21" fill="#0000ff"/><rect x="509" y="603" width="1" height="27" fill="#0000ff"/><rect x="511" y="601" width="1" height="29" fill="#0000ff"/><rect x="513" y="603" width="1" height="27" fill="#0000ff"/><rect x="515" y="612" width="1" height="18" fill="#0000ff"/><rect x="517" y="626" width="1" height="4" fill="#0000ff"/><rect x="521" y="630" width="1" height="20" fill="#0000ff"/><rect x="523" y="630" width="1" height="30" fill="#0000ff"/><rect x="525" y="630" width="1" height="50" fill="#0000ff"/><rect x="527" y="630" width="1" height="60" fill="#0000ff"/><rect x="529" y="630" width="1" height="65" fill="#0000ff"/><rect x="531" y="630" width="1" height="65" fill="#0000ff"/><rect x="533" y="630" width="1" height="65" fill="#0000ff"/><rect x="535" y="630" width="1" height="64" fill="#0000ff"/><rect x="537" y="630" width="1" height="64" fill="#0000ff"/><rect x="539" y="630" width="1" height="63" fill="#0000ff"/><rect x="541" y="630" width="1" height="60" fill="#0000ff"/><rect x="543" y="630" width="1" height="55" fill="#0000ff"/><rect x="545" y="630" width="1" height="48" fill="#0000ff"/><rect x="547" y="630" width="1" height="39" fill="#0000ff"/><rect x="549" y="630" width="1" height="25" fill="#0000ff"/><rect x="551" y="630" width="1" height="18" fill="#0000ff"/><rect x="553" y="630" width="1" height="8" fill="#0000ff"/><rect x="557" y="606" width="1" height="24" fill="#0000ff"/><rect x="559" y="594" width="1" height="36" fill="#0000ff"/><rect x="561" y="591" width="1" height="39" fill="#0000ff"/><rect x="563" y="596" width="1" height="34" fill="#0000ff"/><rect x="565" y="609" width="1" height="21" fill="#0000ff"/><rect x="567" y="629" width="1" height="1" fill="#0000ff"/><rect x="573" y="630" width="1" height="50" fill="#0000ff"/><rect x="575" y="630" width="1" height="55" fill="#0000ff"/><rect x="577" y="630" width="1" height="65" fill="#0000ff"/><rect x="579" y="630" width="1" height="68" fill="#0000ff"/><rect x="581" y="630" width="1" height="64" fill="#0000ff"/><rect x="583" y="630" width="1" height="62" fill="#0000ff"/><rect x="585" y="630" width="1" height="64" fill="#0000ff"/><rect x="587" y="630" width="1" height="66" fill="#0000ff"/><rect x="589" y="630" width="1" height="68" fill="#0000ff"/><rect x="591" y="630" width="1" height="70" fill="#0000ff"/><rect x="593" y="630" width="1" height="72" fill="#0000ff"/><rect x="595" y="630" width="1" height="74" fill="#0000ff"/><rect x="597" y="630" width="1" height="77" fill="#0000ff"/><rect x="599" y="630" width="1" height="73" fill="#0000ff"/><rect x="601" y="630" width="1" height="60" fill="#0000ff"/><rect x="603" y="630" width="1" height="44" fill="#0000ff"/><rect x="605" y="630" width="1" height="30" fill="#0000ff"/><rect x="607" y="630" width="1" height="23" fill="#0000ff"/><rect x="609" y="630" width="1" height="18" fill="#0000ff"/><rect x="611" y="630" width="1" height="10" fill="#0000ff"/><rect x="615" y="618" width="1" height="12" fill="#0000ff"/><rect x="617" y="603" width="1" height="27" fill="#0000ff"/><rect x="619" y="589" width="1" height="41" fill="#0000ff"/><rect x="631" y="564" width="1" height="66" fill="#0000ff"/><rect x="633" y="564" width="1" height="66" fill="#0000ff"/><rect x="635" y="564" width="1" height="66" fill="#0000ff"/><rect x="637" y="566" width="1" height="64" fill="#0000ff"/><rect x="639" y="568" width="1" height="62" fill="#0000ff"/><rect x="641" y="574" width="1" height="56" fill="#0000ff"/><rect x="643" y="581" width="1" height="49" fill="#0000ff"/><rect x="645" y="582" width="1" height="48" fill="#0000ff"/><rect x="647" y="584" width="1" height="46" fill="#0000ff"/><rect x="657" y="567" width="1" height="63" fill="#0000ff"/><rect x="659" y="562" width="1" height="68" fill="#0000ff"/><rect x="661" y="558" width="1" height="72" fill="#0000ff"/><rect x="663" y="557" width="1" height="73" fill="#0000ff"/><rect x="665" y="559" width="1" height="71" fill="#0000ff"/><rect x="667" y="567" width="1" height="63" fill="#0000ff"/><rect x="669" y="582" width="1" height="48" fill="#0000ff"/><rect x="671" y="599" width="1" height="31" fill="#0000ff"/><rect x="673" y="622" width="1" height="8" fill="#0000ff"/><rect x="681" y="630" width="1" height="58" fill="#0000ff"/><rect x="683" y="630" width="1" height="62" fill="#0000ff"/><rect x="685" y="630" width="1" height="63" fill="#0000ff"/><rect x="687" y="630" width="1" height="54" fill="#0000ff"/><rect x="689" y="630" width="1" height="48" fill="#0000ff"/><rect x="691" y="630" width="1" height="42" fill="#0000ff"/><rect x="693" y="630" width="1" height="30" fill="#0000ff"/><rect x="695" y="630" width="1" height="15" fill="#0000ff"/><rect x="697" y="630" width="1" height="14" fill="#0000ff"/><rect x="719" y="549" width="1" height="81" fill="#0000ff"/><rect x="721" y="549" width="1" height="81" fill="#0000ff"/><rect x="723" y="549" width="1" height="81" fill="#0000ff"/><rect x="725" y="550" width="1" height="80" fill="#0000ff"/><rect x="727" y="550" width="1" height="80" fill="#0000ff"/><rect x="729" y="550" width="1" height="80" fill="#0000ff"/><rect x="731" y="553" width="1" height="77" fill="#0000ff"/><rect x="733" y="561" width="1" height="69" fill="#0000ff"/><rect x="735" y="576" width="1" height="54" fill="#0000ff"/><rect x="737" y="596" width="1" height="34" fill="#0000ff"/><rect x="739" y="616" width="1" height="14" fill="#0000ff"/><rect x="745" y="630" width="1" height="18" fill="#0000ff"/><rect x="747" y="630" width="1" height="18" fill="#0000ff"/><rect x="749" y="630" width="1" height="10" fill="#0000ff"/><rect x="761" y="560" width="1" height="70" fill="#0000ff"/><rect x="763" y="557" width="1" height="73" fill="#0000ff"/><rect x="765" y="552" width="1" height="78" fill="#0000ff"/><rect x="767" y="549" width="1" height="81" fill="#0000ff"/><rect x="769" y="550" width="1" height="80" fill="#0000ff"/><rect x="771" y="554" width="1" height="76" fill="#0000ff"/><rect x="773" y="557" width="1" height="73" fill="#0000ff"/><rect x="775" y="560" width="1" height="70" fill="#0000ff"/><rect x="789" y="552" width="1" height="78" fill="#0000ff"/><rect x="791" y="552" width="1" height="78" fill="#0000ff"/><rect x="793" y="553" width="1" height="77" fill="#0000ff"/><rect x="795" y="558" width="1" height="72" fill="#0000ff"/><rect x="797" y="567" width="1" height="63" fill="#0000ff"/><rect x="799" y="578" width="1" height="52" fill="#0000ff"/><rect x="801" y="596" width="1" height="34" fill="#0000ff"/><rect x="803" y="616" width="1" height="14" fill="#0000ff"/><rect x="811" y="630" width="1" height="60" fill="#0000ff"/><rect x="813" y="630" width="1" height="65" fill="#0000ff"/><rect x="815" y="630" width="1" height="73" fill="#0000ff"/><rect x="817" y="630" width="1" height="79" fill="#0000ff"/><rect x="819" y="630" width="1" height="78" fill="#0000ff"/><rect x="821" y="630" width="1" height="73" fill="#0000ff"/><rect x="823" y="630" width="1" height="60" fill="#0000ff"/><rect x="825" y="630" width="1" height="50" fill="#0000ff"/><rect x="827" y="630" width="1" height="37" fill="#0000ff"/><rect x="829" y="630" width="1" height="23" fill="#0000ff"/><rect x="831" y="630" width="1" height="13" fill="#0000ff"/><rect x="847" y="630" width="1" height="52" fill="#0000ff"/><rect x="849" y="630" width="1" height="56" fill="#0000ff"/><rect x="851" y="630" width="1" height="60" fill="#0000ff"/><rect x="853" y="630" width="1" height="62" fill="#0000ff"/><rect x="855" y="630" width="1" height="57" fill="#0000ff"/><rect x="857" y="630" width="1" height="49" fill="#0000ff"/><rect x="859" y="630" width="1" height="40" fill="#0000ff"/><rect x="875" y="589" width="1" height="41" fill="#0000ff"/><rect x="877" y="603" width="1" height="27" fill="#0000ff"/><rect x="879" y="613" width="1" height="17" fill="#0000ff"/><rect x="889" y="630" width="1" height="62" fill="#0000ff"/><rect x="891" y="630" width="1" height="66" fill="#0000ff"/><rect x="893" y="630" width="1" height="70" fill="#0000ff"/><rect x="895" y="630" width="1" height="77" fill="#0000ff"/><rect x="897" y="630" width="1" height="79" fill="#0000ff"/><rect x="899" y="630" width="1" height="79" fill="#0000ff"/><rect x="901" y="630" width="1" height="73" fill="#0000ff"/><rect x="903" y="630" width="1" height="60" fill="#0000ff"/><rect x="905" y="630" width="1" height="43" fill="#0000ff"/><rect x="907" y="630" width="1" height="13" fill="#0000ff"/><rect x="913" y="590" width="1" height="40" fill="#0000ff"/><rect x="915" y="579" width="1" height="51" fill="#0000ff"/><rect x="917" y="573" width="1" height="57" fill="#0000ff"/><rect x="919" y="571" width="1" height="59" fill="#0000ff"/><rect x="921" y="571" width="1" height="59" fill="#0000ff"/><rect x="923" y="574" width="1" height="56" fill="#0000ff"/><rect x="925" y="579" width="1" height="51" fill="#0000ff"/><rect x="927" y="583" width="1" height="47" fill="#0000ff"/><rect x="929" y="590" width="1" height="40" fill="#0000ff"/><rect x="931" y="588" width="1" height="42" fill="#0000ff"/><rect x="933" y="586" width="1" height="44" fill="#0000ff"/><rect x="935" y="584" width="1" height="46" fill="#0000ff"/><rect x="937" y="581" width="1" height="49" fill="#0000ff"/><rect x="939" y="577" width="1" height="53" fill="#0000ff"/><rect x="941" y="574" width="1" height="56" fill="#0000ff"/><rect x="943" y="579" width="1" height="51" fill="#0000ff"/><rect x="945" y="586" width="1" height="44" fill="#0000ff"/><rect x="947" y="597" width="1" height="33" fill="#0000ff"/><rect x="949" y="607" width="1" height="23" fill="#0000ff"/><rect x="951" y="616" width="1" height="14" fill="#0000ff"/><rect x="961" y="584" width="1" height="46" fill="#0000ff"/><rect x="963" y="579" width="1" height="51" fill="#0000ff"/><rect x="965" y="571" width="1" height="59" fill="#0000ff"/><rect x="967" y="566" width="1" height="64" fill="#0000ff"/><rect x="969" y="562" width="1" height="68" fill="#0000ff"/><rect x="971" y="557" width="1" height="73" fill="#0000ff"/><rect x="973" y="556" width="1" height="74" fill="#0000ff"/><rect x="975" y="554" width="1" height="76" fill="#0000ff"/><rect x="977" y="555" width="1" height="75" fill="#0000ff"/><rect x="979" y="558" width="1" height="72" fill="#0000ff"/><rect x="981" y="559" width="1" height="71" fill="#0000ff"/><rect x="983" y="559" width="1" height="71" fill="#0000ff"/><rect x="985" y="558" width="1" height="72" fill="#0000ff"/><rect x="995" y="554" width="1" height="76" fill="#0000ff"/><rect x="997" y="551" width="1" height="79" fill="#0000ff"/><rect x="999" y="548" width="1" height="82" fill="#0000ff"/><rect x="1001" y="546" width="1" height="84" fill="#0000ff"/><rect x="1003" y="544" width="1" height="86" fill="#0000ff"/><rect x="1005" y="544" width="1" height="86" fill="#0000ff"/><rect x="1007" y="544" width="1" height="86" fill="#0000ff"/><rect x="1009" y="544" width="1" height="86" fill="#0000ff"/><rect x="1011" y="544" width="1" height="86" fill="#0000ff"/><rect x="1013" y="544" width="1" height="86" fill="#0000ff"/><rect x="1015" y="544" width="1" height="86" fill="#0000ff"/><rect x="1017" y="544" width="1" height="86" fill="#0000ff"/><rect x="1019" y="547" width="1" height="83" fill="#0000ff"/><rect x="1021" y="549" width="1" height="81" fill="#0000ff"/><rect x="1023" y="553" width="1" height="77" fill="#0000ff"/><rect x="1025" y="558" width="1" height="72" fill="#0000ff"/><rect x="1027" y="567" width="1" height="63" fill="#0000ff"/><rect x="1029" y="578" width="1" height="52" fill="#0000ff"/><rect x="1031" y="592" width="1" height="38" fill="#0000ff"/><rect x="1033" y="611" width="1" height="19" fill="#0000ff"/><rect x="1035" y="623" width="1" height="7" fill="#0000ff"/><rect x="1043" y="630" width="1" height="65" fill="#0000ff"/><rect x="1045" y="630" width="1" height="68" fill="#0000ff"/><rect x="1047" y="630" width="1" height="65" fill="#0000ff"/><rect x="1049" y="630" width="1" height="63" fill="#0000ff"/><rect x="1051" y="630" width="1" height="60" fill="#0000ff"/><rect x="1053" y="630" width="1" height="60" fill="#0000ff"/><rect x="1055" y="630" width="1" height="62" fill="#0000ff"/><rect x="1057" y="630" width="1" height="63" fill="#0000ff"/><rect x="1059" y="630" width="1" height="64" fill="#0000ff"/><rect x="1061" y="630" width="1" height="66" fill="#0000ff"/><rect x="1063" y="630" width="1" height="67" fill="#0000ff"/><rect x="1065" y="630" width="1" height="70" fill="#0000ff"/><rect x="1067" y="630" width="1" height="73" fill="#0000ff"/><rect x="1069" y="630" width="1" height="74" fill="#0000ff"/><rect x="1071" y="630" width="1" height="75" fill="#0000ff"/><rect x="1073" y="630" width="1" height="75" fill="#0000ff"/><rect x="1075" y="630" width="1" height="74" fill="#0000ff"/><rect x="1077" y="630" width="1" height="74" fill="#0000ff"/><rect x="1079" y="630" width="1" height="72" fill="#0000ff"/><rect x="1081" y="630" width="1" height="70" fill="#0000ff"/><rect x="1083" y="630" width="1" height="69" fill="#0000ff"/><rect x="1085" y="630" width="1" height="68" fill="#0000ff"/><rect x="1087" y="630" width="1" height="67" fill="#0000ff"/><rect x="1089" y="630" width="1" height="66" fill="#0000ff"/><rect x="1091" y="630" width="1" height="64" fill="#0000ff"/><rect x="1093" y="630" width="1" height="63" fill="#0000ff"/><rect x="1095" y="630" width="1" height="62" fill="#0000ff"/><rect x="1097" y="630" width="1" height="60" fill="#0000ff"/><rect x="1099" y="630" width="1" height="58" fill="#0000ff"/><rect x="1101" y="630" width="1" height="56" fill="#0000ff"/><rect x="1103" y="630" width="1" height="55" fill="#0000ff"/><rect x="1105" y="630" width="1" height="48" fill="#0000ff"/><rect x="1107" y="630" width="1" height="35" fill="#0000ff"/><rect x="1109" y="630" width="1" height="18" fill="#0000ff"/><rect x="1129" y="548" width="1" height="82" fill="#0000ff"/><rect x="1131" y="554" width="1" height="76" fill="#0000ff"/><rect x="1133" y="568" width="1" height="62" fill="#0000ff"/><rect x="1135" y="588" width="1" height="42" fill="#0000ff"/><rect x="1137" y="612" width="1" height="18" fill="#0000ff"/><rect x="1143" y="630" width="1" height="40" fill="#0000ff"/><rect x="1145" y="630" width="1" height="48" fill="#0000ff"/><rect x="1147" y="630" width="1" height="53" fill="#0000ff"/><rect x="1149" y="630" width="1" height="53" fill="#0000ff"/><rect x="1151" y="630" width="1" height="48" fill="#0000ff"/><rect x="1153" y="630" width="1" height="39" fill="#0000ff"/><rect x="1155" y="630" width="1" height="27" fill="#0000ff"/><rect x="1157" y="630" width="1" height="10" fill="#0000ff"/><rect x="1161" y="618" width="1" height="12" fill="#0000ff"/><rect x="1163" y="613" width="1" height="17" fill="#0000ff"/><rect x="1165" y="618" width="1" height="12" fill="#0000ff"/><rect x="1175" y="630" width="1" height="73" fill="#0000ff"/><rect x="1177" y="630" width="1" height="75" fill="#0000ff"/><rect x="1179" y="630" width="1" height="75" fill="#0000ff"/><rect x="1181" y="630" width="1" height="74" fill="#0000ff"/><rect x="1183" y="630" width="1" height="73" fill="#0000ff"/><rect x="1185" y="630" width="1" height="72" fill="#0000ff"/><rect x="1187" y="630" width="1" height="72" fill="#0000ff"/><rect x="1189" y="630" width="1" height="72" fill="#0000ff"/><rect x="1191" y="630" width="1" height="71" fill="#0000ff"/><rect x="1193" y="630" width="1" height="69" fill="#0000ff"/><rect x="1195" y="630" width="1" height="68" fill="#0000ff"/><rect x="1197" y="630" width="1" height="60" fill="#0000ff"/><rect x="1199" y="630" width="1" height="50" fill="#0000ff"/><rect x="1201" y="630" width="1" height="35" fill="#0000ff"/><rect x="1203" y="630" width="1" height="15" fill="#0000ff"/><rect x="1211" y="581" width="1" height="49" fill="#0000ff"/><rect x="1213" y="572" width="1" height="58" fill="#0000ff"/><rect x="1215" y="566" width="1" height="64" fill="#0000ff"/><rect x="1217" y="561" width="1" height="69" fill="#0000ff"/><rect x="1219" y="560" width="1" height="70" fill="#0000ff"/><rect x="1221" y="560" width="1" height="70" fill="#0000ff"/><rect x="1223" y="563" width="1" height="67" fill="#0000ff"/><rect x="1225" y="573" width="1" height="57" fill="#0000ff"/><rect x="5" y="554" width="1" height="76" fill="#ffff00"/><rect x="7" y="555" width="1" height="75" fill="#ffff00"/><rect x="9" y="556" width="1" height="74" fill="#ffff00"/><rect x="11" y="556" width="1" height="74" fill="#ffff00"/><rect x="13" y="554" width="1" height="76" fill="#ffff00"/><rect x="15" y="552" width="1" height="78" fill="#ffff00"/><rect x="17" y="550" width="1" height="80" fill="#ffff00"/><rect x="19" y="547" width="1" height="83" fill="#ffff00"/><rect x="21" y="551" width="1" height="79" fill="#ffff00"/><rect x="23" y="559" width="1" height="71" fill="#ffff00"/><rect x="25" y="575" width="1" height="55" fill="#ffff00"/><rect x="27" y="627" width="1" height="3" fill="#ffff00"/><rect x="29" y="630" width="1" height="33" fill="#ffff00"/><rect x="31" y="630" width="1" height="60" fill="#ffff00"/><rect x="33" y="630" width="1" height="71" fill="#ffff00"/><rect x="35" y="630" width="1" height="49" fill="#ffff00"/><rect x="37" y="630" width="1" height="15" fill="#ffff00"/><rect x="39" y="609" width="1" height="21" fill="#ffff00"/><rect x="41" y="581" width="1" height="49" fill="#ffff00"/><rect x="43" y="568" width="1" height="62" fill="#ffff00"/><rect x="45" y="566" width="1" height="64" fill="#ffff00"/><rect x="47" y="569" width="1" height="61" fill="#ffff00"/><rect x="49" y="572" width="1" height="58" fill="#ffff00"/><rect x="51" y="572" width="1" height="58" fill="#ffff00"/><rect x="53" y="578" width="1" height="52" fill="#ffff00"/><rect x="55" y="609" width="1" height="21" fill="#ffff00"/><rect x="59" y="630" width="1" height="27" fill="#ffff00"/><rect x="61" y="630" width="1" height="43" fill="#ffff00"/><rect x="63" y="630" width="1" height="52" fill="#ffff00"/><rect x="65" y="630" width="1" height="57" fill="#ffff00"/><rect x="67" y="630" width="1" height="60" fill="#ffff00"/><rect x="69" y="630" width="1" height="57" fill="#ffff00"/><rect x="71" y="630" width="1" height="26" fill="#ffff00"/><rect x="73" y="619" width="1" height="11" fill="#ffff00"/><rect x="75" y="583" width="1" height="47" fill="#ffff00"/><rect x="77" y="556" width="1" height="74" fill="#ffff00"/><rect x="79" y="544" width="1" height="86" fill="#ffff00"/><rect x="81" y="544" width="1" height="86" fill="#ffff00"/><rect x="83" y="548" width="1" height="82" fill="#ffff00"/><rect x="85" y="551" width="1" height="79" fill="#ffff00"/><rect x="87" y="554" width="1" height="76" fill="#ffff00"/><rect x="89" y="558" width="1" height="72" fill="#ffff00"/><rect x="91" y="563" width="1" height="67" fill="#ffff00"/><rect x="93" y="568" width="1" height="62" fill="#ffff00"/><rect x="95" y="581" width="1" height="49" fill="#ffff00"/><rect x="97" y="600" width="1" height="30" fill="#ffff00"/><rect x="101" y="630" width="1" height="35" fill="#ffff00"/><rect x="103" y="630" width="1" height="60" fill="#ffff00"/><rect x="105" y="630" width="1" height="74" fill="#ffff00"/><rect x="107" y="630" width="1" height="55" fill="#ffff00"/><rect x="109" y="630" width="1" height="25" fill="#ffff00"/><rect x="113" y="583" width="1" height="47" fill="#ffff00"/><rect x="115" y="559" width="1" height="71" fill="#ffff00"/><rect x="117" y="548" width="1" height="82" fill="#ffff00"/><rect x="119" y="558" width="1" height="72" fill="#ffff00"/><rect x="121" y="571" width="1" height="59" fill="#ffff00"/><rect x="123" y="602" width="1" height="28" fill="#ffff00"/><rect x="125" y="630" width="1" height="8" fill="#ffff00"/><rect x="127" y="630" width="1" height="39" fill="#ffff00"/><rect x="129" y="630" width="1" height="65" fill="#ffff00"/><rect x="131" y="630" width="1" height="77" fill="#ffff00"/><rect x="133" y="630" width="1" height="65" fill="#ffff00"/><rect x="135" y="630" width="1" height="35" fill="#ffff00"/><rect x="137" y="623" width="1" height="7" fill="#ffff00"/><rect x="139" y="586" width="1" height="44" fill="#ffff00"/><rect x="141" y="561" width="1" height="69" fill="#ffff00"/><rect x="143" y="553" width="1" height="77" fill="#ffff00"/><rect x="145" y="554" width="1" height="76" fill="#ffff00"/><rect x="147" y="556" width="1" height="74" fill="#ffff00"/><rect x="149" y="557" width="1" height="73" fill="#ffff00"/><rect x="151" y="559" width="1" height="71" fill="#ffff00"/><rect x="153" y="568" width="1" height="62" fill="#ffff00"/><rect x="155" y="578" width="1" height="52" fill="#ffff00"/><rect x="157" y="604" width="1" height="26" fill="#ffff00"/><rect x="159" y="630" width="1" height="4" fill="#ffff00"/><rect x="161" y="630" width="1" height="29" fill="#ffff00"/><rect x="163" y="630" width="1" height="50" fill="#ffff00"/><rect x="165" y="630" width="1" height="60" fill="#ffff00"/><rect x="167" y="630" width="1" height="60" fill="#ffff00"/><rect x="169" y="630" width="1" height="54" fill="#ffff00"/><rect x="171" y="630" width="1" height="40" fill="#ffff00"/><rect x="173" y="630" width="1" height="24" fill="#ffff00"/><rect x="175" y="630" width="1" height="19" fill="#ffff00"/><rect x="177" y="630" width="1" height="18" fill="#ffff00"/><rect x="179" y="630" width="1" height="21" fill="#ffff00"/><rect x="181" y="630" width="1" height="25" fill="#ffff00"/><rect x="183" y="630" width="1" height="32" fill="#ffff00"/><rect x="185" y="630" width="1" height="43" fill="#ffff00"/><rect x="187" y="630" width="1" height="54" fill="#ffff00"/><rect x="189" y="630" width="1" height="54" fill="#ffff00"/><rect x="191" y="630" width="1" height="43" fill="#ffff00"/><rect x="193" y="630" width="1" height="34" fill="#ffff00"/><rect x="195" y="630" width="1" height="30" fill="#ffff00"/><rect x="197" y="630" width="1" height="34" fill="#ffff00"/><rect x="199" y="630" width="1" height="40" fill="#ffff00"/><rect x="201" y="630" width="1" height="26" fill="#ffff00"/><rect x="203" y="628" width="1" height="2" fill="#ffff00"/><rect x="205" y="602" width="1" height="28" fill="#ffff00"/><rect x="207" y="575" width="1" height="55" fill="#ffff00"/><rect x="209" y="565" width="1" height="65" fill="#ffff00"/><rect x="211" y="572" width="1" height="58" fill="#ffff00"/><rect x="213" y="590" width="1" height="40" fill="#ffff00"/><rect x="215" y="604" width="1" height="26" fill="#ffff00"/><rect x="217" y="602" width="1" height="28" fill="#ffff00"/><rect x="219" y="596" width="1" height="34" fill="#ffff00"/><rect x="221" y="580" width="1" height="50" fill="#ffff00"/><rect x="223" y="562" width="1" height="68" fill="#ffff00"/><rect x="225" y="557" width="1" height="73" fill="#ffff00"/><rect x="227" y="557" width="1" height="73" fill="#ffff00"/><rect x="229" y="557" width="1" height="73" fill="#ffff00"/><rect x="231" y="557" width="1" height="73" fill="#ffff00"/><rect x="233" y="557" width="1" height="73" fill="#ffff00"/><rect x="235" y="562" width="1" height="68" fill="#ffff00"/><rect x="237" y="576" width="1" height="54" fill="#ffff00"/><rect x="239" y="600" width="1" height="30" fill="#ffff00"/><rect x="241" y="620" width="1" height="10" fill="#ffff00"/><rect x="243" y="630" width="1" height="18" fill="#ffff00"/><rect x="245" y="630" width="1" height="53" fill="#ffff00"/><rect x="247" y="630" width="1" height="73" fill="#ffff00"/><rect x="249" y="630" width="1" height="75" fill="#ffff00"/><rect x="251" y="630" width="1" height="75" fill="#ffff00"/><rect x="253" y="630" width="1" height="69" fill="#ffff00"/><rect x="255" y="630" width="1" height="58" fill="#ffff00"/><rect x="257" y="630" width="1" height="56" fill="#ffff00"/><rect x="259" y="630" width="1" height="55" fill="#ffff00"/><rect x="261" y="630" width="1" height="46" fill="#ffff00"/><rect x="263" y="630" width="1" height="22" fill="#ffff00"/><rect x="265" y="620" width="1" height="10" fill="#ffff00"/><rect x="267" y="591" width="1" height="39" fill="#ffff00"/><rect x="269" y="576" width="1" height="54" fill="#ffff00"/><rect x="271" y="581" width="1" height="49" fill="#ffff00"/><rect x="273" y="600" width="1" height="30" fill="#ffff00"/><rect x="275" y="613" width="1" height="17" fill="#ffff00"/><rect x="277" y="612" width="1" height="18" fill="#ffff00"/><rect x="279" y="600" width="1" height="30" fill="#ffff00"/><rect x="281" y="584" width="1" height="46" fill="#ffff00"/><rect x="283" y="584" width="1" height="46" fill="#ffff00"/><rect x="285" y="598" width="1" height="32" fill="#ffff00"/><rect x="287" y="615" width="1" height="15" fill="#ffff00"/><rect x="289" y="622" width="1" height="8" fill="#ffff00"/><rect x="291" y="615" width="1" height="15" fill="#ffff00"/><rect x="293" y="602" width="1" height="28" fill="#ffff00"/><rect x="295" y="600" width="1" height="30" fill="#ffff00"/><rect x="297" y="617" width="1" height="13" fill="#ffff00"/><rect x="299" y="630" width="1" height="18" fill="#ffff00"/><rect x="301" y="630" width="1" height="50" fill="#ffff00"/><rect x="303" y="630" width="1" height="64" fill="#ffff00"/><rect x="305" y="630" width="1" height="48" fill="#ffff00"/><rect x="307" y="630" width="1" height="16" fill="#ffff00"/><rect x="309" y="608" width="1" height="22" fill="#ffff00"/><rect x="311" y="577" width="1" height="53" fill="#ffff00"/><rect x="313" y="561" width="1" height="69" fill="#ffff00"/><rect x="315" y="554" width="1" height="76" fill="#ffff00"/><rect x="317" y="550" width="1" height="80" fill="#ffff00"/><rect x="319" y="549" width="1" height="81" fill="#ffff00"/><rect x="321" y="551" width="1" height="79" fill="#ffff00"/><rect x="323" y="564" width="1" height="66" fill="#ffff00"/><rect x="325" y="594" width="1" height="36" fill="#ffff00"/><rect x="327" y="630" width="1" height="0" fill="#ffff00"/><rect x="329" y="630" width="1" height="38" fill="#ffff00"/><rect x="331" y="630" width="1" height="60" fill="#ffff00"/><rect x="333" y="630" width="1" height="55" fill="#ffff00"/><rect x="335" y="630" width="1" height="26" fill="#ffff00"/><rect x="337" y="620" width="1" height="10" fill="#ffff00"/><rect x="339" y="587" width="1" height="43" fill="#ffff00"/><rect x="341" y="571" width="1" height="59" fill="#ffff00"/><rect x="343" y="576" width="1" height="54" fill="#ffff00"/><rect x="345" y="592" width="1" height="38" fill="#ffff00"/><rect x="347" y="610" width="1" height="20" fill="#ffff00"/><rect x="349" y="623" width="1" height="7" fill="#ffff00"/><rect x="351" y="630" width="1" height="2" fill="#ffff00"/><rect x="355" y="619" width="1" height="11" fill="#ffff00"/><rect x="357" y="607" width="1" height="23" fill="#ffff00"/><rect x="359" y="600" width="1" height="30" fill="#ffff00"/><rect x="361" y="600" width="1" height="30" fill="#ffff00"/><rect x="363" y="602" width="1" height="28" fill="#ffff00"/><rect x="365" y="601" width="1" height="29" fill="#ffff00"/><rect x="367" y="593" width="1" height="37" fill="#ffff00"/><rect x="369" y="588" width="1" height="42" fill="#ffff00"/><rect x="371" y="596" width="1" height="34" fill="#ffff00"/><rect x="373" y="619" width="1" height="11" fill="#ffff00"/><rect x="375" y="630" width="1" height="22" fill="#ffff00"/><rect x="377" y="630" width="1" height="54" fill="#ffff00"/><rect x="379" y="630" width="1" height="72" fill="#ffff00"/><rect x="381" y="630" width="1" height="79" fill="#ffff00"/><rect x="383" y="630" width="1" height="73" fill="#ffff00"/><rect x="385" y="630" width="1" height="70" fill="#ffff00"/><rect x="387" y="630" width="1" height="64" fill="#ffff00"/><rect x="389" y="630" width="1" height="63" fill="#ffff00"/><rect x="391" y="630" width="1" height="58" fill="#ffff00"/><rect x="393" y="630" width="1" height="38" fill="#ffff00"/><rect x="395" y="630" width="1" height="5" fill="#ffff00"/><rect x="397" y="601" width="1" height="29" fill="#ffff00"/><rect x="399" y="569" width="1" height="61" fill="#ffff00"/><rect x="401" y="549" width="1" height="81" fill="#ffff00"/><rect x="403" y="546" width="1" height="84" fill="#ffff00"/><rect x="405" y="546" width="1" height="84" fill="#ffff00"/><rect x="407" y="549" width="1" height="81" fill="#ffff00"/><rect x="409" y="562" width="1" height="68" fill="#ffff00"/><rect x="411" y="573" width="1" height="57" fill="#ffff00"/><rect x="413" y="593" width="1" height="37" fill="#ffff00"/><rect x="415" y="604" width="1" height="26" fill="#ffff00"/><rect x="417" y="601" width="1" height="29" fill="#ffff00"/><rect x="419" y="591" width="1" height="39" fill="#ffff00"/><rect x="421" y="584" width="1" height="46" fill="#ffff00"/><rect x="423" y="582" width="1" height="48" fill="#ffff00"/><rect x="425" y="582" width="1" height="48" fill="#ffff00"/><rect x="427" y="587" width="1" height="43" fill="#ffff00"/><rect x="429" y="577" width="1" height="53" fill="#ffff00"/><rect x="431" y="569" width="1" height="61" fill="#ffff00"/><rect x="433" y="573" width="1" height="57" fill="#ffff00"/><rect x="435" y="586" width="1" height="44" fill="#ffff00"/><rect x="437" y="603" width="1" height="27" fill="#ffff00"/><rect x="441" y="630" width="1" height="28" fill="#ffff00"/><rect x="443" y="630" width="1" height="50" fill="#ffff00"/><rect x="445" y="630" width="1" height="73" fill="#ffff00"/><rect x="447" y="630" width="1" height="77" fill="#ffff00"/><rect x="449" y="630" width="1" height="57" fill="#ffff00"/><rect x="451" y="630" width="1" height="24" fill="#ffff00"/><rect x="453" y="618" width="1" height="12" fill="#ffff00"/><rect x="455" y="582" width="1" height="48" fill="#ffff00"/><rect x="457" y="563" width="1" height="67" fill="#ffff00"/><rect x="459" y="564" width="1" height="66" fill="#ffff00"/><rect x="461" y="573" width="1" height="57" fill="#ffff00"/><rect x="463" y="589" width="1" height="41" fill="#ffff00"/><rect x="465" y="611" width="1" height="19" fill="#ffff00"/><rect x="467" y="630" width="1" height="5" fill="#ffff00"/><rect x="469" y="630" width="1" height="30" fill="#ffff00"/><rect x="471" y="630" width="1" height="53" fill="#ffff00"/><rect x="473" y="630" width="1" height="70" fill="#ffff00"/><rect x="475" y="630" width="1" height="78" fill="#ffff00"/><rect x="477" y="630" width="1" height="65" fill="#ffff00"/><rect x="479" y="630" width="1" height="58" fill="#ffff00"/><rect x="481" y="630" width="1" height="48" fill="#ffff00"/><rect x="483" y="630" width="1" height="35" fill="#ffff00"/><rect x="485" y="630" width="1" height="37" fill="#ffff00"/><rect x="487" y="630" width="1" height="48" fill="#ffff00"/><rect x="489" y="630" width="1" height="53" fill="#ffff00"/><rect x="491" y="630" width="1" height="57" fill="#ffff00"/><rect x="493" y="630" width="1" height="37" fill="#ffff00"/><rect x="495" y="628" width="1" height="2" fill="#ffff00"/><rect x="497" y="591" width="1" height="39" fill="#ffff00"/><rect x="499" y="562" width="1" height="68" fill="#ffff00"/><rect x="501" y="554" width="1" height="76" fill="#ffff00"/><rect x="503" y="567" width="1" height="63" fill="#ffff00"/><rect x="505" y="594" width="1" height="36" fill="#ffff00"/><rect x="509" y="630" width="1" height="40" fill="#ffff00"/><rect x="511" y="630" width="1" height="65" fill="#ffff00"/><rect x="513" y="630" width="1" height="80" fill="#ffff00"/><rect x="515" y="630" width="1" height="77" fill="#ffff00"/><rect x="517" y="630" width="1" height="70" fill="#ffff00"/><rect x="519" y="630" width="1" height="58" fill="#ffff00"/><rect x="521" y="630" width="1" height="33" fill="#ffff00"/><rect x="523" y="630" width="1" height="5" fill="#ffff00"/><rect x="525" y="611" width="1" height="19" fill="#ffff00"/><rect x="527" y="607" width="1" height="23" fill="#ffff00"/><rect x="529" y="629" width="1" height="1" fill="#ffff00"/><rect x="531" y="630" width="1" height="27" fill="#ffff00"/><rect x="533" y="630" width="1" height="58" fill="#ffff00"/><rect x="535" y="630" width="1" height="70" fill="#ffff00"/><rect x="537" y="630" width="1" height="66" fill="#ffff00"/><rect x="539" y="630" width="1" height="53" fill="#ffff00"/><rect x="541" y="630" width="1" height="28" fill="#ffff00"/><rect x="543" y="630" width="1" height="3" fill="#ffff00"/><rect x="545" y="601" width="1" height="29" fill="#ffff00"/><rect x="547" y="573" width="1" height="57" fill="#ffff00"/><rect x="549" y="562" width="1" height="68" fill="#ffff00"/><rect x="551" y="576" width="1" height="54" fill="#ffff00"/><rect x="553" y="593" width="1" height="37" fill="#ffff00"/><rect x="555" y="623" width="1" height="7" fill="#ffff00"/><rect x="557" y="630" width="1" height="23" fill="#ffff00"/><rect x="559" y="630" width="1" height="45" fill="#ffff00"/><rect x="561" y="630" width="1" height="58" fill="#ffff00"/><rect x="563" y="630" width="1" height="63" fill="#ffff00"/><rect x="565" y="630" width="1" height="64" fill="#ffff00"/><rect x="567" y="630" width="1" height="62" fill="#ffff00"/><rect x="569" y="630" width="1" height="60" fill="#ffff00"/><rect x="571" y="630" width="1" height="54" fill="#ffff00"/><rect x="573" y="630" width="1" height="35" fill="#ffff00"/><rect x="575" y="630" width="1" height="10" fill="#ffff00"/><rect x="577" y="609" width="1" height="21" fill="#ffff00"/><rect x="579" y="611" width="1" height="19" fill="#ffff00"/><rect x="583" y="630" width="1" height="33" fill="#ffff00"/><rect x="585" y="630" width="1" height="60" fill="#ffff00"/><rect x="587" y="630" width="1" height="78" fill="#ffff00"/><rect x="589" y="630" width="1" height="79" fill="#ffff00"/><rect x="591" y="630" width="1" height="73" fill="#ffff00"/><rect x="593" y="630" width="1" height="70" fill="#ffff00"/><rect x="595" y="630" width="1" height="70" fill="#ffff00"/><rect x="597" y="630" width="1" height="50" fill="#ffff00"/><rect x="599" y="630" width="1" height="30" fill="#ffff00"/><rect x="601" y="630" width="1" height="10" fill="#ffff00"/><rect x="603" y="613" width="1" height="17" fill="#ffff00"/><rect x="605" y="583" width="1" height="47" fill="#ffff00"/><rect x="607" y="571" width="1" height="59" fill="#ffff00"/><rect x="609" y="578" width="1" height="52" fill="#ffff00"/><rect x="611" y="623" width="1" height="7" fill="#ffff00"/><rect x="613" y="624" width="1" height="6" fill="#ffff00"/><rect x="615" y="621" width="1" height="9" fill="#ffff00"/><rect x="617" y="606" width="1" height="24" fill="#ffff00"/><rect x="619" y="598" width="1" height="32" fill="#ffff00"/><rect x="621" y="582" width="1" height="48" fill="#ffff00"/><rect x="623" y="577" width="1" height="53" fill="#ffff00"/><rect x="625" y="568" width="1" height="62" fill="#ffff00"/><rect x="627" y="566" width="1" height="64" fill="#ffff00"/><rect x="629" y="557" width="1" height="73" fill="#ffff00"/><rect x="631" y="559" width="1" height="71" fill="#ffff00"/><rect x="633" y="568" width="1" height="62" fill="#ffff00"/><rect x="635" y="593" width="1" height="37" fill="#ffff00"/><rect x="639" y="630" width="1" height="32" fill="#ffff00"/><rect x="641" y="630" width="1" height="43" fill="#ffff00"/><rect x="643" y="630" width="1" height="27" fill="#ffff00"/><rect x="645" y="626" width="1" height="4" fill="#ffff00"/><rect x="647" y="594" width="1" height="36" fill="#ffff00"/><rect x="649" y="578" width="1" height="52" fill="#ffff00"/><rect x="651" y="573" width="1" height="57" fill="#ffff00"/><rect x="653" y="573" width="1" height="57" fill="#ffff00"/><rect x="655" y="572" width="1" height="58" fill="#ffff00"/><rect x="657" y="569" width="1" height="61" fill="#ffff00"/><rect x="659" y="569" width="1" height="61" fill="#ffff00"/><rect x="661" y="577" width="1" height="53" fill="#ffff00"/><rect x="663" y="606" width="1" height="24" fill="#ffff00"/><rect x="665" y="630" width="1" height="3" fill="#ffff00"/><rect x="667" y="630" width="1" height="40" fill="#ffff00"/><rect x="669" y="630" width="1" height="65" fill="#ffff00"/><rect x="671" y="630" width="1" height="73" fill="#ffff00"/><rect x="673" y="630" width="1" height="79" fill="#ffff00"/><rect x="675" y="630" width="1" height="74" fill="#ffff00"/><rect x="677" y="630" width="1" height="57" fill="#ffff00"/><rect x="679" y="630" width="1" height="23" fill="#ffff00"/><rect x="681" y="616" width="1" height="14" fill="#ffff00"/><rect x="683" y="592" width="1" height="38" fill="#ffff00"/><rect x="685" y="591" width="1" height="39" fill="#ffff00"/><rect x="687" y="618" width="1" height="12" fill="#ffff00"/><rect x="689" y="630" width="1" height="17" fill="#ffff00"/><rect x="691" y="630" width="1" height="35" fill="#ffff00"/><rect x="693" y="630" width="1" height="37" fill="#ffff00"/><rect x="695" y="630" width="1" height="5" fill="#ffff00"/><rect x="699" y="584" width="1" height="46" fill="#ffff00"/><rect x="701" y="569" width="1" height="61" fill="#ffff00"/><rect x="703" y="574" width="1" height="56" fill="#ffff00"/><rect x="705" y="580" width="1" height="50" fill="#ffff00"/><rect x="707" y="583" width="1" height="47" fill="#ffff00"/><rect x="709" y="582" width="1" height="48" fill="#ffff00"/><rect x="711" y="574" width="1" height="56" fill="#ffff00"/><rect x="713" y="562" width="1" height="68" fill="#ffff00"/><rect x="715" y="549" width="1" height="81" fill="#ffff00"/><rect x="717" y="548" width="1" height="82" fill="#ffff00"/><rect x="719" y="562" width="1" height="68" fill="#ffff00"/><rect x="721" y="576" width="1" height="54" fill="#ffff00"/><rect x="723" y="588" width="1" height="42" fill="#ffff00"/><rect x="725" y="591" width="1" height="39" fill="#ffff00"/><rect x="727" y="583" width="1" height="47" fill="#ffff00"/><rect x="729" y="578" width="1" height="52" fill="#ffff00"/><rect x="731" y="574" width="1" height="56" fill="#ffff00"/><rect x="733" y="589" width="1" height="41" fill="#ffff00"/><rect x="735" y="619" width="1" height="11" fill="#ffff00"/><rect x="737" y="630" width="1" height="18" fill="#ffff00"/><rect x="739" y="630" width="1" height="50" fill="#ffff00"/><rect x="741" y="630" width="1" height="60" fill="#ffff00"/><rect x="743" y="630" width="1" height="49" fill="#ffff00"/><rect x="745" y="630" width="1" height="18" fill="#ffff00"/><rect x="747" y="611" width="1" height="19" fill="#ffff00"/><rect x="749" y="574" width="1" height="56" fill="#ffff00"/><rect x="751" y="553" width="1" height="77" fill="#ffff00"/><rect x="753" y="551" width="1" height="79" fill="#ffff00"/><rect x="755" y="557" width="1" height="73" fill="#ffff00"/><rect x="757" y="562" width="1" height="68" fill="#ffff00"/><rect x="759" y="563" width="1" height="67" fill="#ffff00"/><rect x="761" y="562" width="1" height="68" fill="#ffff00"/><rect x="763" y="562" width="1" height="68" fill="#ffff00"/><rect x="765" y="571" width="1" height="59" fill="#ffff00"/><rect x="767" y="587" width="1" height="43" fill="#ffff00"/><rect x="769" y="614" width="1" height="16" fill="#ffff00"/><rect x="771" y="623" width="1" height="7" fill="#ffff00"/><rect x="773" y="611" width="1" height="19" fill="#ffff00"/><rect x="775" y="591" width="1" height="39" fill="#ffff00"/><rect x="777" y="563" width="1" height="67" fill="#ffff00"/><rect x="779" y="557" width="1" height="73" fill="#ffff00"/><rect x="781" y="557" width="1" height="73" fill="#ffff00"/><rect x="783" y="557" width="1" height="73" fill="#ffff00"/><rect x="785" y="557" width="1" height="73" fill="#ffff00"/><rect x="787" y="557" width="1" height="73" fill="#ffff00"/><rect x="789" y="561" width="1" height="69" fill="#ffff00"/><rect x="791" y="577" width="1" height="53" fill="#ffff00"/><rect x="793" y="607" width="1" height="23" fill="#ffff00"/><rect x="795" y="630" width="1" height="15" fill="#ffff00"/><rect x="797" y="630" width="1" height="48" fill="#ffff00"/><rect x="799" y="630" width="1" height="72" fill="#ffff00"/><rect x="801" y="630" width="1" height="75" fill="#ffff00"/><rect x="803" y="630" width="1" height="64" fill="#ffff00"/><rect x="805" y="630" width="1" height="55" fill="#ffff00"/><rect x="807" y="630" width="1" height="53" fill="#ffff00"/><rect x="809" y="630" width="1" height="57" fill="#ffff00"/><rect x="811" y="630" width="1" height="59" fill="#ffff00"/><rect x="813" y="630" width="1" height="52" fill="#ffff00"/><rect x="815" y="630" width="1" height="44" fill="#ffff00"/><rect x="817" y="630" width="1" height="34" fill="#ffff00"/><rect x="819" y="630" width="1" height="27" fill="#ffff00"/><rect x="821" y="630" width="1" height="19" fill="#ffff00"/><rect x="823" y="630" width="1" height="3" fill="#ffff00"/><rect x="825" y="618" width="1" height="12" fill="#ffff00"/><rect x="827" y="591" width="1" height="39" fill="#ffff00"/><rect x="829" y="582" width="1" height="48" fill="#ffff00"/><rect x="831" y="602" width="1" height="28" fill="#ffff00"/><rect x="833" y="628" width="1" height="2" fill="#ffff00"/><rect x="835" y="630" width="1" height="33" fill="#ffff00"/><rect x="837" y="630" width="1" height="60" fill="#ffff00"/><rect x="839" y="630" width="1" height="70" fill="#ffff00"/><rect x="841" y="630" width="1" height="72" fill="#ffff00"/><rect x="843" y="630" width="1" height="72" fill="#ffff00"/><rect x="845" y="630" width="1" height="64" fill="#ffff00"/><rect x="847" y="630" width="1" height="35" fill="#ffff00"/><rect x="851" y="607" width="1" height="23" fill="#ffff00"/><rect x="853" y="588" width="1" height="42" fill="#ffff00"/><rect x="855" y="582" width="1" height="48" fill="#ffff00"/><rect x="857" y="608" width="1" height="22" fill="#ffff00"/><rect x="859" y="630" width="1" height="15" fill="#ffff00"/><rect x="861" y="630" width="1" height="35" fill="#ffff00"/><rect x="863" y="630" width="1" height="44" fill="#ffff00"/><rect x="865" y="630" width="1" height="19" fill="#ffff00"/><rect x="867" y="613" width="1" height="17" fill="#ffff00"/><rect x="869" y="579" width="1" height="51" fill="#ffff00"/><rect x="871" y="559" width="1" height="71" fill="#ffff00"/><rect x="873" y="573" width="1" height="57" fill="#ffff00"/><rect x="875" y="596" width="1" height="34" fill="#ffff00"/><rect x="877" y="630" width="1" height="6" fill="#ffff00"/><rect x="879" y="630" width="1" height="48" fill="#ffff00"/><rect x="881" y="630" width="1" height="72" fill="#ffff00"/><rect x="883" y="630" width="1" height="82" fill="#ffff00"/><rect x="885" y="630" width="1" height="85" fill="#ffff00"/><rect x="887" y="630" width="1" height="73" fill="#ffff00"/><rect x="889" y="630" width="1" height="65" fill="#ffff00"/><rect x="891" y="630" width="1" height="59" fill="#ffff00"/><rect x="893" y="630" width="1" height="50" fill="#ffff00"/><rect x="895" y="630" width="1" height="47" fill="#ffff00"/><rect x="897" y="630" width="1" height="40" fill="#ffff00"/><rect x="899" y="630" width="1" height="25" fill="#ffff00"/><rect x="901" y="630" width="1" height="8" fill="#ffff00"/><rect x="903" y="616" width="1" height="14" fill="#ffff00"/><rect x="905" y="593" width="1" height="37" fill="#ffff00"/><rect x="907" y="571" width="1" height="59" fill="#ffff00"/><rect x="909" y="567" width="1" height="63" fill="#ffff00"/><rect x="911" y="574" width="1" height="56" fill="#ffff00"/><rect x="913" y="598" width="1" height="32" fill="#ffff00"/><rect x="915" y="629" width="1" height="1" fill="#ffff00"/><rect x="917" y="630" width="1" height="10" fill="#ffff00"/><rect x="919" y="630" width="1" height="15" fill="#ffff00"/><rect x="921" y="630" width="1" height="17" fill="#ffff00"/><rect x="923" y="630" width="1" height="4" fill="#ffff00"/><rect x="925" y="626" width="1" height="4" fill="#ffff00"/><rect x="927" y="617" width="1" height="13" fill="#ffff00"/><rect x="929" y="594" width="1" height="36" fill="#ffff00"/><rect x="931" y="588" width="1" height="42" fill="#ffff00"/><rect x="933" y="587" width="1" height="43" fill="#ffff00"/><rect x="935" y="599" width="1" height="31" fill="#ffff00"/><rect x="937" y="621" width="1" height="9" fill="#ffff00"/><rect x="939" y="630" width="1" height="8" fill="#ffff00"/><rect x="941" y="630" width="1" height="37" fill="#ffff00"/><rect x="943" y="630" width="1" height="48" fill="#ffff00"/><rect x="945" y="630" width="1" height="49" fill="#ffff00"/><rect x="947" y="630" width="1" height="50" fill="#ffff00"/><rect x="949" y="630" width="1" height="33" fill="#ffff00"/><rect x="951" y="630" width="1" height="4" fill="#ffff00"/><rect x="953" y="603" width="1" height="27" fill="#ffff00"/><rect x="955" y="574" width="1" height="56" fill="#ffff00"/><rect x="957" y="566" width="1" height="64" fill="#ffff00"/><rect x="959" y="574" width="1" height="56" fill="#ffff00"/><rect x="961" y="588" width="1" height="42" fill="#ffff00"/><rect x="963" y="587" width="1" height="43" fill="#ffff00"/><rect x="965" y="583" width="1" height="47" fill="#ffff00"/><rect x="967" y="576" width="1" height="54" fill="#ffff00"/><rect x="969" y="569" width="1" height="61" fill="#ffff00"/><rect x="971" y="579" width="1" height="51" fill="#ffff00"/><rect x="973" y="602" width="1" height="28" fill="#ffff00"/><rect x="975" y="628" width="1" height="2" fill="#ffff00"/><rect x="977" y="630" width="1" height="3" fill="#ffff00"/><rect x="979" y="623" width="1" height="7" fill="#ffff00"/><rect x="981" y="599" width="1" height="31" fill="#ffff00"/><rect x="983" y="567" width="1" height="63" fill="#ffff00"/><rect x="985" y="557" width="1" height="73" fill="#ffff00"/><rect x="987" y="557" width="1" height="73" fill="#ffff00"/><rect x="989" y="557" width="1" height="73" fill="#ffff00"/><rect x="991" y="545" width="1" height="85" fill="#ffff00"/><rect x="993" y="542" width="1" height="88" fill="#ffff00"/><rect x="995" y="546" width="1" height="84" fill="#ffff00"/><rect x="997" y="553" width="1" height="77" fill="#ffff00"/><rect x="999" y="557" width="1" height="73" fill="#ffff00"/><rect x="1001" y="564" width="1" height="66" fill="#ffff00"/><rect x="1003" y="568" width="1" height="62" fill="#ffff00"/><rect x="1005" y="566" width="1" height="64" fill="#ffff00"/><rect x="1007" y="562" width="1" height="68" fill="#ffff00"/><rect x="1009" y="557" width="1" height="73" fill="#ffff00"/><rect x="1011" y="553" width="1" height="77" fill="#ffff00"/><rect x="1013" y="549" width="1" height="81" fill="#ffff00"/><rect x="1015" y="547" width="1" height="83" fill="#ffff00"/><rect x="1017" y="547" width="1" height="83" fill="#ffff00"/><rect x="1019" y="551" width="1" height="79" fill="#ffff00"/><rect x="1021" y="568" width="1" height="62" fill="#ffff00"/><rect x="1023" y="601" width="1" height="29" fill="#ffff00"/><rect x="1025" y="630" width="1" height="8" fill="#ffff00"/><rect x="1027" y="630" width="1" height="44" fill="#ffff00"/><rect x="1029" y="630" width="1" height="68" fill="#ffff00"/><rect x="1031" y="630" width="1" height="74" fill="#ffff00"/><rect x="1033" y="630" width="1" height="70" fill="#ffff00"/><rect x="1035" y="630" width="1" height="67" fill="#ffff00"/><rect x="1037" y="630" width="1" height="63" fill="#ffff00"/><rect x="1039" y="630" width="1" height="59" fill="#ffff00"/><rect x="1041" y="630" width="1" height="39" fill="#ffff00"/><rect x="1043" y="630" width="1" height="17" fill="#ffff00"/><rect x="1045" y="614" width="1" height="16" fill="#ffff00"/><rect x="1047" y="598" width="1" height="32" fill="#ffff00"/><rect x="1049" y="609" width="1" height="21" fill="#ffff00"/><rect x="1053" y="630" width="1" height="37" fill="#ffff00"/><rect x="1055" y="630" width="1" height="58" fill="#ffff00"/><rect x="1057" y="630" width="1" height="67" fill="#ffff00"/><rect x="1059" y="630" width="1" height="75" fill="#ffff00"/><rect x="1061" y="630" width="1" height="72" fill="#ffff00"/><rect x="1063" y="630" width="1" height="58" fill="#ffff00"/><rect x="1065" y="630" width="1" height="44" fill="#ffff00"/><rect x="1067" y="630" width="1" height="17" fill="#ffff00"/><rect x="1071" y="630" width="1" height="3" fill="#ffff00"/><rect x="1073" y="630" width="1" height="23" fill="#ffff00"/><rect x="1075" y="630" width="1" height="48" fill="#ffff00"/><rect x="1077" y="630" width="1" height="58" fill="#ffff00"/><rect x="1079" y="630" width="1" height="49" fill="#ffff00"/><rect x="1081" y="630" width="1" height="35" fill="#ffff00"/><rect x="1083" y="630" width="1" height="24" fill="#ffff00"/><rect x="1085" y="630" width="1" height="29" fill="#ffff00"/><rect x="1087" y="630" width="1" height="34" fill="#ffff00"/><rect x="1089" y="630" width="1" height="29" fill="#ffff00"/><rect x="1091" y="630" width="1" height="23" fill="#ffff00"/><rect x="1093" y="630" width="1" height="14" fill="#ffff00"/><rect x="1095" y="630" width="1" height="10" fill="#ffff00"/><rect x="1097" y="630" width="1" height="20" fill="#ffff00"/><rect x="1099" y="630" width="1" height="49" fill="#ffff00"/><rect x="1101" y="630" width="1" height="58" fill="#ffff00"/><rect x="1103" y="630" width="1" height="39" fill="#ffff00"/><rect x="1105" y="630" width="1" height="20" fill="#ffff00"/><rect x="1107" y="618" width="1" height="12" fill="#ffff00"/><rect x="1109" y="586" width="1" height="44" fill="#ffff00"/><rect x="1111" y="569" width="1" height="61" fill="#ffff00"/><rect x="1113" y="554" width="1" height="76" fill="#ffff00"/><rect x="1115" y="551" width="1" height="79" fill="#ffff00"/><rect x="1117" y="553" width="1" height="77" fill="#ffff00"/><rect x="1119" y="554" width="1" height="76" fill="#ffff00"/><rect x="1121" y="553" width="1" height="77" fill="#ffff00"/><rect x="1123" y="552" width="1" height="78" fill="#ffff00"/><rect x="1125" y="549" width="1" height="81" fill="#ffff00"/><rect x="1127" y="547" width="1" height="83" fill="#ffff00"/><rect x="1129" y="561" width="1" height="69" fill="#ffff00"/><rect x="1131" y="588" width="1" height="42" fill="#ffff00"/><rect x="1133" y="624" width="1" height="6" fill="#ffff00"/><rect x="1135" y="630" width="1" height="34" fill="#ffff00"/><rect x="1137" y="630" width="1" height="62" fill="#ffff00"/><rect x="1139" y="630" width="1" height="73" fill="#ffff00"/><rect x="1141" y="630" width="1" height="64" fill="#ffff00"/><rect x="1143" y="630" width="1" height="33" fill="#ffff00"/><rect x="1145" y="627" width="1" height="3" fill="#ffff00"/><rect x="1147" y="594" width="1" height="36" fill="#ffff00"/><rect x="1149" y="578" width="1" height="52" fill="#ffff00"/><rect x="1151" y="589" width="1" height="41" fill="#ffff00"/><rect x="1153" y="616" width="1" height="14" fill="#ffff00"/><rect x="1157" y="630" width="1" height="8" fill="#ffff00"/><rect x="1159" y="630" width="1" height="15" fill="#ffff00"/><rect x="1161" y="630" width="1" height="23" fill="#ffff00"/><rect x="1163" y="630" width="1" height="42" fill="#ffff00"/><rect x="1165" y="630" width="1" height="55" fill="#ffff00"/><rect x="1167" y="630" width="1" height="67" fill="#ffff00"/><rect x="1169" y="630" width="1" height="75" fill="#ffff00"/><rect x="1171" y="630" width="1" height="79" fill="#ffff00"/><rect x="1173" y="630" width="1" height="73" fill="#ffff00"/><rect x="1175" y="630" width="1" height="37" fill="#ffff00"/><rect x="1177" y="630" width="1" height="20" fill="#ffff00"/><rect x="1179" y="630" width="1" height="8" fill="#ffff00"/><rect x="1181" y="630" width="1" height="10" fill="#ffff00"/><rect x="1183" y="630" width="1" height="25" fill="#ffff00"/><rect x="1185" y="630" width="1" height="45" fill="#ffff00"/><rect x="1187" y="630" width="1" height="65" fill="#ffff00"/><rect x="1189" y="630" width="1" height="70" fill="#ffff00"/><rect x="1191" y="630" width="1" height="66" fill="#ffff00"/><rect x="1193" y="630" width="1" height="52" fill="#ffff00"/><rect x="1195" y="630" width="1" height="23" fill="#ffff00"/><rect x="1197" y="614" width="1" height="16" fill="#ffff00"/><rect x="1199" y="593" width="1" height="37" fill="#ffff00"/><rect x="1201" y="576" width="1" height="54" fill="#ffff00"/><rect x="1203" y="573" width="1" height="57" fill="#ffff00"/><rect x="1205" y="573" width="1" height="57" fill="#ffff00"/><rect x="1207" y="571" width="1" height="59" fill="#ffff00"/><rect x="1209" y="572" width="1" height="58" fill="#ffff00"/><rect x="1211" y="586" width="1" height="44" fill="#ffff00"/><rect x="1213" y="607" width="1" height="23" fill="#ffff00"/><rect x="1215" y="626" width="1" height="4" fill="#ffff00"/><rect x="1217" y="622" width="1" height="8" fill="#ffff00"/><rect x="1219" y="606" width="1" height="24" fill="#ffff00"/><rect x="1221" y="589" width="1" height="41" fill="#ffff00"/><rect x="1223" y="588" width="1" height="42" fill="#ffff00"/><rect x="1225" y="619" width="1" height="11" fill="#ffff00"/></g>
<rect x="224" y="556" width="2" height="74" fill="#ff0000" shape-rendering="crispEdges"/>
<polygon points="218.9,537.9 228.6,547.6 229.1,537.9 234.6,543.4 234.6,556.8 221.0,556.8 215.7,552.3 224.9,551.6 215.2,541.3" fill="#ff0000"/>
<rect x="778" y="556" width="2" height="74" fill="#ff0000" shape-rendering="crispEdges"/>
<polygon points="772.9,537.9 782.6,547.6 783.1,537.9 788.6,543.4 788.6,556.8 775.0,556.8 769.7,552.3 778.9,551.6 769.2,541.3" fill="#ff0000"/>
<rect x="984" y="556" width="2" height="74" fill="#ff0000" shape-rendering="crispEdges"/>
<polygon points="978.9,537.9 988.6,547.6 989.1,537.9 994.6,543.4 994.6,556.8 981.0,556.8 975.7,552.3 984.9,551.6 975.2,541.3" fill="#ff0000"/>
<rect x="534" y="630" width="2" height="71" fill="#00ff00" shape-rendering="crispEdges"/>
<polygon points="528.6,719.9 538.3,710.2 538.8,719.9 544.3,714.4 544.3,701.0 530.7,701.0 525.4,705.5 534.6,706.2 524.9,716.5" fill="#00ff00"/>
<rect x="1188" y="630" width="2" height="71" fill="#00ff00" shape-rendering="crispEdges"/>
<polygon points="1182.6,719.9 1192.3,710.2 1192.8,719.9 1198.3,714.4 1198.3,701.0 1184.7,701.0 1179.4,705.5 1188.6,706.2 1178.9,716.5" fill="#00ff00"/>
<text x="9.5" y="532.5" font-size="9.3" fill="#fff">Elite Scalping and Binary options 0.65 0.12</text>
<rect x="225" y="81" width="1" height="437" fill="#ff0000" shape-rendering="crispEdges"/>
<rect x="535" y="81" width="1" height="437" fill="#00ff00" shape-rendering="crispEdges"/>
<rect x="779" y="81" width="1" height="437" fill="#ff0000" shape-rendering="crispEdges"/>
<rect x="985" y="81" width="1" height="437" fill="#ff0000" shape-rendering="crispEdges"/>
<rect x="1189" y="81" width="1" height="437" fill="#00ff00" shape-rendering="crispEdges"/>
<rect x="5" y="277" width="1531" height="1" fill="#ffff00" shape-rendering="crispEdges"/>
<g shape-rendering="crispEdges"><rect x="5" y="359" width="2" height="1" fill="#ff0000"/><rect x="7" y="358" width="1" height="1" fill="#ff0000"/><rect x="11" y="358" width="1" height="1" fill="#ff0000"/><rect x="12" y="357" width="2" height="1" fill="#ff0000"/><rect x="17" y="357" width="1" height="1" fill="#ff0000"/><rect x="18" y="356" width="2" height="1" fill="#ff0000"/><rect x="23" y="356" width="1" height="1" fill="#ff0000"/><rect x="24" y="355" width="2" height="1" fill="#ff0000"/><rect x="29" y="355" width="1" height="1" fill="#ff0000"/><rect x="30" y="354" width="2" height="1" fill="#ff0000"/><rect x="35" y="353" width="3" height="1" fill="#ff0000"/><rect x="41" y="352" width="3" height="1" fill="#ff0000"/><rect x="47" y="351" width="3" height="1" fill="#ff0000"/><rect x="53" y="350" width="3" height="1" fill="#ff0000"/><rect x="59" y="349" width="3" height="1" fill="#ff0000"/><rect x="65" y="348" width="3" height="1" fill="#ff0000"/><rect x="71" y="347" width="3" height="1" fill="#ff0000"/><rect x="77" y="346" width="3" height="1" fill="#ff0000"/><rect x="83" y="345" width="3" height="1" fill="#ff0000"/><rect x="89" y="344" width="3" height="1" fill="#ff0000"/><rect x="95" y="343" width="3" height="1" fill="#ff0000"/><rect x="101" y="342" width="3" height="1" fill="#ff0000"/><rect x="107" y="341" width="3" height="1" fill="#ff0000"/><rect x="113" y="340" width="3" height="1" fill="#ff0000"/><rect x="119" y="339" width="3" height="1" fill="#ff0000"/><rect x="125" y="338" width="2" height="1" fill="#ff0000"/><rect x="127" y="337" width="1" height="1" fill="#ff0000"/><rect x="131" y="337" width="2" height="1" fill="#ff0000"/><rect x="133" y="336" width="1" height="1" fill="#ff0000"/><rect x="137" y="336" width="2" height="1" fill="#ff0000"/><rect x="139" y="335" width="1" height="1" fill="#ff0000"/><rect x="143" y="335" width="2" height="1" fill="#ff0000"/><rect x="145" y="334" width="1" height="1" fill="#ff0000"/><rect x="149" y="334" width="1" height="1" fill="#ff0000"/><rect x="150" y="333" width="2" height="1" fill="#ff0000"/><rect x="155" y="333" width="1" height="1" fill="#ff0000"/><rect x="156" y="332" width="2" height="1" fill="#ff0000"/><rect x="161" y="332" width="1" height="1" fill="#ff0000"/><rect x="162" y="331" width="2" height="1" fill="#ff0000"/><rect x="167" y="331" width="1" height="1" fill="#ff0000"/><rect x="168" y="330" width="2" height="1" fill="#ff0000"/><rect x="173" y="329" width="3" height="1" fill="#ff0000"/><rect x="179" y="328" width="3" height="1" fill="#ff0000"/><rect x="185" y="327" width="3" height="1" fill="#ff0000"/><rect x="191" y="326" width="3" height="1" fill="#ff0000"/><rect x="197" y="325" width="3" height="1" fill="#ff0000"/><rect x="203" y="324" width="3" height="1" fill="#ff0000"/><rect x="209" y="323" width="3" height="1" fill="#ff0000"/><rect x="215" y="322" width="3" height="1" fill="#ff0000"/><rect x="221" y="321" width="3" height="1" fill="#ff0000"/><rect x="227" y="320" width="3" height="1" fill="#ff0000"/><rect x="233" y="319" width="3" height="1" fill="#ff0000"/><rect x="239" y="318" width="3" height="1" fill="#ff0000"/><rect x="245" y="317" width="3" height="1" fill="#ff0000"/><rect x="251" y="316" width="3" height="1" fill="#ff0000"/><rect x="257" y="315" width="3" height="1" fill="#ff0000"/><rect x="263" y="314" width="2" height="1" fill="#ff0000"/><rect x="265" y="313" width="1" height="1" fill="#ff0000"/><rect x="269" y="313" width="2" height="1" fill="#ff0000"/><rect x="271" y="312" width="1" height="1" fill="#ff0000"/><rect x="275" y="312" width="2" height="1" fill="#ff0000"/><rect x="277" y="311" width="1" height="1" fill="#ff0000"/><rect x="281" y="311" width="2" height="1" fill="#ff0000"/><rect x="283" y="310" width="1" height="1" fill="#ff0000"/><rect x="287" y="310" width="1" height="1" fill="#ff0000"/><rect x="288" y="309" width="2" height="1" fill="#ff0000"/><rect x="293" y="309" width="1" height="1" fill="#ff0000"/><rect x="294" y="308" width="2" height="1" fill="#ff0000"/><rect x="299" y="308" width="1" height="1" fill="#ff0000"/><rect x="300" y="307" width="2" height="1" fill="#ff0000"/><rect x="305" y="307" width="1" height="1" fill="#ff0000"/><rect x="306" y="306" width="2" height="1" fill="#ff0000"/><rect x="311" y="305" width="3" height="1" fill="#ff0000"/><rect x="317" y="304" width="3" height="1" fill="#ff0000"/><rect x="323" y="303" width="3" height="1" fill="#ff0000"/><rect x="329" y="302" width="3" height="1" fill="#ff0000"/><rect x="335" y="301" width="3" height="1" fill="#ff0000"/><rect x="341" y="300" width="3" height="1" fill="#ff0000"/><rect x="347" y="299" width="3" height="1" fill="#ff0000"/><rect x="353" y="298" width="3" height="1" fill="#ff0000"/><rect x="359" y="297" width="3" height="1" fill="#ff0000"/><rect x="365" y="296" width="3" height="1" fill="#ff0000"/><rect x="371" y="295" width="3" height="1" fill="#ff0000"/><rect x="377" y="294" width="3" height="1" fill="#ff0000"/><rect x="383" y="293" width="3" height="1" fill="#ff0000"/><rect x="389" y="292" width="3" height="1" fill="#ff0000"/><rect x="395" y="291" width="3" height="1" fill="#ff0000"/><rect x="401" y="290" width="2" height="1" fill="#ff0000"/><rect x="403" y="289" width="1" height="1" fill="#ff0000"/><rect x="407" y="289" width="2" height="1" fill="#ff0000"/><rect x="409" y="288" width="1" height="1" fill="#ff0000"/><rect x="413" y="288" width="2" height="1" fill="#ff0000"/><rect x="415" y="287" width="1" height="1" fill="#ff0000"/><rect x="419" y="287" width="2" height="1" fill="#ff0000"/><rect x="421" y="286" width="1" height="1" fill="#ff0000"/><rect x="425" y="286" width="1" height="1" fill="#ff0000"/><rect x="426" y="285" width="2" height="1" fill="#ff0000"/><rect x="431" y="285" width="1" height="1" fill="#ff0000"/><rect x="432" y="284" width="2" height="1" fill="#ff0000"/><rect x="437" y="284" width="1" height="1" fill="#ff0000"/><rect x="438" y="283" width="2" height="1" fill="#ff0000"/><rect x="443" y="283" width="1" height="1" fill="#ff0000"/><rect x="444" y="282" width="2" height="1" fill="#ff0000"/><rect x="449" y="281" width="3" height="1" fill="#ff0000"/><rect x="455" y="280" width="3" height="1" fill="#ff0000"/><rect x="461" y="279" width="3" height="1" fill="#ff0000"/><rect x="467" y="278" width="3" height="1" fill="#ff0000"/><rect x="473" y="277" width="3" height="1" fill="#ff0000"/><rect x="479" y="276" width="3" height="1" fill="#ff0000"/><rect x="485" y="275" width="3" height="1" fill="#ff0000"/><rect x="491" y="274" width="3" height="1" fill="#ff0000"/><rect x="497" y="273" width="3" height="1" fill="#ff0000"/><rect x="503" y="272" width="3" height="1" fill="#ff0000"/><rect x="509" y="271" width="3" height="1" fill="#ff0000"/><rect x="515" y="270" width="3" height="1" fill="#ff0000"/><rect x="521" y="269" width="3" height="1" fill="#ff0000"/><rect x="527" y="268" width="3" height="1" fill="#ff0000"/><rect x="533" y="267" width="3" height="1" fill="#ff0000"/><rect x="539" y="266" width="3" height="1" fill="#ff0000"/><rect x="545" y="265" width="2" height="1" fill="#ff0000"/><rect x="547" y="264" width="1" height="1" fill="#ff0000"/><rect x="551" y="264" width="2" height="1" fill="#ff0000"/><rect x="553" y="263" width="1" height="1" fill="#ff0000"/><rect x="557" y="263" width="2" height="1" fill="#ff0000"/><rect x="559" y="262" width="1" height="1" fill="#ff0000"/><rect x="563" y="262" width="2" height="1" fill="#ff0000"/><rect x="565" y="261" width="1" height="1" fill="#ff0000"/><rect x="569" y="261" width="1" height="1" fill="#ff0000"/><rect x="570" y="260" width="2" height="1" fill="#ff0000"/><rect x="575" y="260" width="1" height="1" fill="#ff0000"/><rect x="576" y="259" width="2" height="1" fill="#ff0000"/><rect x="581" y="259" width="1" height="1" fill="#ff0000"/><rect x="582" y="258" width="2" height="1" fill="#ff0000"/><rect x="587" y="258" width="1" height="1" fill="#ff0000"/><rect x="588" y="257" width="2" height="1" fill="#ff0000"/><rect x="593" y="256" width="3" height="1" fill="#ff0000"/><rect x="599" y="255" width="3" height="1" fill="#ff0000"/><rect x="605" y="254" width="3" height="1" fill="#ff0000"/><rect x="611" y="253" width="3" height="1" fill="#ff0000"/><rect x="617" y="252" width="3" height="1" fill="#ff0000"/><rect x="623" y="251" width="3" height="1" fill="#ff0000"/><rect x="629" y="250" width="3" height="1" fill="#ff0000"/><rect x="635" y="249" width="3" height="1" fill="#ff0000"/><rect x="641" y="248" width="3" height="1" fill="#ff0000"/><rect x="647" y="247" width="3" height="1" fill="#ff0000"/><rect x="653" y="246" width="3" height="1" fill="#ff0000"/><rect x="659" y="245" width="3" height="1" fill="#ff0000"/><rect x="665" y="244" width="3" height="1" fill="#ff0000"/><rect x="671" y="243" width="3" height="1" fill="#ff0000"/><rect x="677" y="242" width="3" height="1" fill="#ff0000"/><rect x="683" y="241" width="2" height="1" fill="#ff0000"/><rect x="685" y="240" width="1" height="1" fill="#ff0000"/><rect x="689" y="240" width="2" height="1" fill="#ff0000"/><rect x="691" y="239" width="1" height="1" fill="#ff0000"/><rect x="695" y="239" width="2" height="1" fill="#ff0000"/><rect x="697" y="238" width="1" height="1" fill="#ff0000"/><rect x="701" y="238" width="2" height="1" fill="#ff0000"/><rect x="703" y="237" width="1" height="1" fill="#ff0000"/><rect x="707" y="237" width="1" height="1" fill="#ff0000"/><rect x="708" y="236" width="2" height="1" fill="#ff0000"/><rect x="713" y="236" width="1" height="1" fill="#ff0000"/><rect x="714" y="235" width="2" height="1" fill="#ff0000"/><rect x="719" y="235" width="1" height="1" fill="#ff0000"/><rect x="720" y="234" width="2" height="1" fill="#ff0000"/><rect x="725" y="234" width="1" height="1" fill="#ff0000"/><rect x="726" y="233" width="2" height="1" fill="#ff0000"/><rect x="731" y="232" width="3" height="1" fill="#ff0000"/><rect x="737" y="231" width="3" height="1" fill="#ff0000"/><rect x="743" y="230" width="3" height="1" fill="#ff0000"/><rect x="749" y="229" width="3" height="1" fill="#ff0000"/><rect x="755" y="228" width="3" height="1" fill="#ff0000"/><rect x="761" y="227" width="3" height="1" fill="#ff0000"/><rect x="767" y="226" width="3" height="1" fill="#ff0000"/><rect x="773" y="225" width="3" height="1" fill="#ff0000"/><rect x="779" y="224" width="3" height="1" fill="#ff0000"/><rect x="785" y="223" width="3" height="1" fill="#ff0000"/><rect x="791" y="222" width="3" height="1" fill="#ff0000"/><rect x="797" y="221" width="3" height="1" fill="#ff0000"/><rect x="803" y="220" width="3" height="1" fill="#ff0000"/><rect x="809" y="219" width="3" height="1" fill="#ff0000"/><rect x="815" y="218" width="3" height="1" fill="#ff0000"/><rect x="821" y="217" width="2" height="1" fill="#ff0000"/><rect x="823" y="216" width="1" height="1" fill="#ff0000"/><rect x="827" y="216" width="2" height="1" fill="#ff0000"/><rect x="829" y="215" width="1" height="1" fill="#ff0000"/><rect x="833" y="215" width="2" height="1" fill="#ff0000"/><rect x="835" y="214" width="1" height="1" fill="#ff0000"/><rect x="839" y="214" width="2" height="1" fill="#ff0000"/><rect x="841" y="213" width="1" height="1" fill="#ff0000"/><rect x="845" y="213" width="1" height="1" fill="#ff0000"/><rect x="846" y="212" width="2" height="1" fill="#ff0000"/><rect x="851" y="212" width="1" height="1" fill="#ff0000"/><rect x="852" y="211" width="2" height="1" fill="#ff0000"/><rect x="857" y="211" width="1" height="1" fill="#ff0000"/><rect x="858" y="210" width="2" height="1" fill="#ff0000"/><rect x="863" y="210" width="1" height="1" fill="#ff0000"/><rect x="864" y="209" width="2" height="1" fill="#ff0000"/><rect x="869" y="208" width="3" height="1" fill="#ff0000"/><rect x="875" y="207" width="3" height="1" fill="#ff0000"/><rect x="881" y="206" width="3" height="1" fill="#ff0000"/><rect x="887" y="205" width="3" height="1" fill="#ff0000"/><rect x="893" y="204" width="3" height="1" fill="#ff0000"/><rect x="899" y="203" width="3" height="1" fill="#ff0000"/><rect x="905" y="202" width="3" height="1" fill="#ff0000"/><rect x="911" y="201" width="3" height="1" fill="#ff0000"/><rect x="917" y="200" width="3" height="1" fill="#ff0000"/><rect x="923" y="199" width="3" height="1" fill="#ff0000"/><rect x="929" y="198" width="3" height="1" fill="#ff0000"/><rect x="935" y="197" width="3" height="1" fill="#ff0000"/><rect x="941" y="196" width="3" height="1" fill="#ff0000"/><rect x="947" y="195" width="3" height="1" fill="#ff0000"/><rect x="953" y="194" width="3" height="1" fill="#ff0000"/><rect x="959" y="193" width="2" height="1" fill="#ff0000"/><rect x="961" y="192" width="1" height="1" fill="#ff0000"/><rect x="965" y="192" width="2" height="1" fill="#ff0000"/><rect x="967" y="191" width="1" height="1" fill="#ff0000"/><rect x="971" y="191" width="2" height="1" fill="#ff0000"/><rect x="973" y="190" width="1" height="1" fill="#ff0000"/><rect x="977" y="190" width="2" height="1" fill="#ff0000"/><rect x="979" y="189" width="1" height="1" fill="#ff0000"/><rect x="983" y="189" width="1" height="1" fill="#ff0000"/><rect x="984" y="188" width="1" height="1" fill="#ff0000"/></g>
<g shape-rendering="crispEdges"><rect x="9" y="370" width="1" height="1" fill="#ff0000"/><rect x="10" y="369" width="2" height="1" fill="#ff0000"/><rect x="15" y="369" width="1" height="1" fill="#ff0000"/><rect x="16" y="368" width="2" height="1" fill="#ff0000"/><rect x="21" y="368" width="1" height="1" fill="#ff0000"/><rect x="22" y="367" width="2" height="1" fill="#ff0000"/><rect x="27" y="366" width="3" height="1" fill="#ff0000"/><rect x="33" y="365" width="3" height="1" fill="#ff0000"/><rect x="39" y="364" width="3" height="1" fill="#ff0000"/><rect x="45" y="363" width="3" height="1" fill="#ff0000"/><rect x="51" y="362" width="3" height="1" fill="#ff0000"/><rect x="57" y="361" width="3" height="1" fill="#ff0000"/><rect x="63" y="360" width="3" height="1" fill="#ff0000"/><rect x="69" y="359" width="3" height="1" fill="#ff0000"/><rect x="75" y="358" width="3" height="1" fill="#ff0000"/><rect x="81" y="357" width="3" height="1" fill="#ff0000"/><rect x="87" y="356" width="3" height="1" fill="#ff0000"/><rect x="93" y="355" width="3" height="1" fill="#ff0000"/><rect x="99" y="354" width="3" height="1" fill="#ff0000"/><rect x="105" y="353" width="3" height="1" fill="#ff0000"/><rect x="111" y="352" width="3" height="1" fill="#ff0000"/><rect x="117" y="351" width="3" height="1" fill="#ff0000"/><rect x="123" y="350" width="2" height="1" fill="#ff0000"/><rect x="125" y="349" width="1" height="1" fill="#ff0000"/><rect x="129" y="349" width="2" height="1" fill="#ff0000"/><rect x="131" y="348" width="1" height="1" fill="#ff0000"/><rect x="135" y="348" width="2" height="1" fill="#ff0000"/><rect x="137" y="347" width="1" height="1" fill="#ff0000"/><rect x="141" y="347" width="2" height="1" fill="#ff0000"/><rect x="143" y="346" width="1" height="1" fill="#ff0000"/><rect x="147" y="346" width="2" height="1" fill="#ff0000"/><rect x="149" y="345" width="1" height="1" fill="#ff0000"/><rect x="153" y="345" width="1" height="1" fill="#ff0000"/><rect x="154" y="344" width="2" height="1" fill="#ff0000"/><rect x="159" y="344" width="1" height="1" fill="#ff0000"/><rect x="160" y="343" width="2" height="1" fill="#ff0000"/><rect x="165" y="343" width="1" height="1" fill="#ff0000"/><rect x="166" y="342" width="2" height="1" fill="#ff0000"/><rect x="171" y="342" width="1" height="1" fill="#ff0000"/><rect x="172" y="341" width="2" height="1" fill="#ff0000"/><rect x="177" y="340" width="3" height="1" fill="#ff0000"/><rect x="183" y="339" width="3" height="1" fill="#ff0000"/><rect x="189" y="338" width="3" height="1" fill="#ff0000"/><rect x="195" y="337" width="3" height="1" fill="#ff0000"/><rect x="201" y="336" width="3" height="1" fill="#ff0000"/><rect x="207" y="335" width="3" height="1" fill="#ff0000"/><rect x="213" y="334" width="3" height="1" fill="#ff0000"/><rect x="219" y="333" width="3" height="1" fill="#ff0000"/><rect x="225" y="332" width="3" height="1" fill="#ff0000"/><rect x="231" y="331" width="3" height="1" fill="#ff0000"/><rect x="237" y="330" width="3" height="1" fill="#ff0000"/><rect x="243" y="329" width="3" height="1" fill="#ff0000"/><rect x="249" y="328" width="3" height="1" fill="#ff0000"/><rect x="255" y="327" width="3" height="1" fill="#ff0000"/><rect x="261" y="326" width="3" height="1" fill="#ff0000"/><rect x="267" y="325" width="3" height="1" fill="#ff0000"/><rect x="273" y="324" width="2" height="1" fill="#ff0000"/><rect x="275" y="323" width="1" height="1" fill="#ff0000"/><rect x="279" y="323" width="2" height="1" fill="#ff0000"/><rect x="281" y="322" width="1" height="1" fill="#ff0000"/><rect x="285" y="322" width="2" height="1" fill="#ff0000"/><rect x="287" y="321" width="1" height="1" fill="#ff0000"/><rect x="291" y="321" width="2" height="1" fill="#ff0000"/><rect x="293" y="320" width="1" height="1" fill="#ff0000"/><rect x="297" y="320" width="1" height="1" fill="#ff0000"/><rect x="298" y="319" width="2" height="1" fill="#ff0000"/><rect x="303" y="319" width="1" height="1" fill="#ff0000"/><rect x="304" y="318" width="2" height="1" fill="#ff0000"/><rect x="309" y="318" width="1" height="1" fill="#ff0000"/><rect x="310" y="317" width="2" height="1" fill="#ff0000"/><rect x="315" y="317" width="1" height="1" fill="#ff0000"/><rect x="316" y="316" width="2" height="1" fill="#ff0000"/><rect x="321" y="316" width="1" height="1" fill="#ff0000"/><rect x="322" y="315" width="2" height="1" fill="#ff0000"/><rect x="327" y="314" width="3" height="1" fill="#ff0000"/><rect x="333" y="313" width="3" height="1" fill="#ff0000"/><rect x="339" y="312" width="3" height="1" fill="#ff0000"/><rect x="345" y="311" width="3" height="1" fill="#ff0000"/><rect x="351" y="310" width="3" height="1" fill="#ff0000"/><rect x="357" y="309" width="3" height="1" fill="#ff0000"/><rect x="363" y="308" width="3" height="1" fill="#ff0000"/><rect x="369" y="307" width="3" height="1" fill="#ff0000"/><rect x="375" y="306" width="3" height="1" fill="#ff0000"/><rect x="381" y="305" width="3" height="1" fill="#ff0000"/><rect x="387" y="304" width="3" height="1" fill="#ff0000"/><rect x="393" y="303" width="3" height="1" fill="#ff0000"/><rect x="399" y="302" width="3" height="1" fill="#ff0000"/><rect x="405" y="301" width="3" height="1" fill="#ff0000"/><rect x="411" y="300" width="3" height="1" fill="#ff0000"/><rect x="417" y="299" width="3" height="1" fill="#ff0000"/><rect x="423" y="298" width="2" height="1" fill="#ff0000"/><rect x="425" y="297" width="1" height="1" fill="#ff0000"/><rect x="429" y="297" width="2" height="1" fill="#ff0000"/><rect x="431" y="296" width="1" height="1" fill="#ff0000"/><rect x="435" y="296" width="2" height="1" fill="#ff0000"/><rect x="437" y="295" width="1" height="1" fill="#ff0000"/><rect x="441" y="295" width="2" height="1" fill="#ff0000"/><rect x="443" y="294" width="1" height="1" fill="#ff0000"/><rect x="447" y="294" width="1" height="1" fill="#ff0000"/><rect x="448" y="293" width="2" height="1" fill="#ff0000"/><rect x="453" y="293" width="1" height="1" fill="#ff0000"/><rect x="454" y="292" width="2" height="1" fill="#ff0000"/><rect x="459" y="292" width="1" height="1" fill="#ff0000"/><rect x="460" y="291" width="2" height="1" fill="#ff0000"/><rect x="465" y="291" width="1" height="1" fill="#ff0000"/><rect x="466" y="290" width="2" height="1" fill="#ff0000"/><rect x="471" y="290" width="1" height="1" fill="#ff0000"/><rect x="472" y="289" width="2" height="1" fill="#ff0000"/><rect x="477" y="288" width="3" height="1" fill="#ff0000"/><rect x="483" y="287" width="3" height="1" fill="#ff0000"/><rect x="489" y="286" width="3" height="1" fill="#ff0000"/><rect x="495" y="285" width="3" height="1" fill="#ff0000"/><rect x="501" y="284" width="3" height="1" fill="#ff0000"/><rect x="507" y="283" width="3" height="1" fill="#ff0000"/><rect x="513" y="282" width="3" height="1" fill="#ff0000"/><rect x="519" y="281" width="3" height="1" fill="#ff0000"/><rect x="525" y="280" width="3" height="1" fill="#ff0000"/><rect x="531" y="279" width="3" height="1" fill="#ff0000"/><rect x="537" y="278" width="3" height="1" fill="#ff0000"/><rect x="543" y="277" width="3" height="1" fill="#ff0000"/><rect x="549" y="276" width="3" height="1" fill="#ff0000"/><rect x="555" y="275" width="3" height="1" fill="#ff0000"/><rect x="561" y="274" width="3" height="1" fill="#ff0000"/><rect x="567" y="273" width="3" height="1" fill="#ff0000"/><rect x="573" y="272" width="2" height="1" fill="#ff0000"/><rect x="575" y="271" width="1" height="1" fill="#ff0000"/><rect x="579" y="271" width="2" height="1" fill="#ff0000"/><rect x="581" y="270" width="1" height="1" fill="#ff0000"/><rect x="585" y="270" width="2" height="1" fill="#ff0000"/><rect x="587" y="269" width="1" height="1" fill="#ff0000"/><rect x="591" y="269" width="2" height="1" fill="#ff0000"/><rect x="593" y="268" width="1" height="1" fill="#ff0000"/><rect x="597" y="268" width="1" height="1" fill="#ff0000"/><rect x="598" y="267" width="2" height="1" fill="#ff0000"/><rect x="603" y="267" width="1" height="1" fill="#ff0000"/><rect x="604" y="266" width="2" height="1" fill="#ff0000"/><rect x="609" y="266" width="1" height="1" fill="#ff0000"/><rect x="610" y="265" width="2" height="1" fill="#ff0000"/><rect x="615" y="265" width="1" height="1" fill="#ff0000"/><rect x="616" y="264" width="2" height="1" fill="#ff0000"/><rect x="621" y="263" width="3" height="1" fill="#ff0000"/><rect x="627" y="262" width="3" height="1" fill="#ff0000"/><rect x="633" y="261" width="3" height="1" fill="#ff0000"/><rect x="639" y="260" width="3" height="1" fill="#ff0000"/><rect x="645" y="259" width="3" height="1" fill="#ff0000"/><rect x="651" y="258" width="3" height="1" fill="#ff0000"/><rect x="657" y="257" width="3" height="1" fill="#ff0000"/><rect x="663" y="256" width="3" height="1" fill="#ff0000"/><rect x="669" y="255" width="3" height="1" fill="#ff0000"/><rect x="675" y="254" width="3" height="1" fill="#ff0000"/><rect x="681" y="253" width="3" height="1" fill="#ff0000"/><rect x="687" y="252" width="3" height="1" fill="#ff0000"/><rect x="693" y="251" width="3" height="1" fill="#ff0000"/><rect x="699" y="250" width="3" height="1" fill="#ff0000"/><rect x="705" y="249" width="3" height="1" fill="#ff0000"/><rect x="711" y="248" width="3" height="1" fill="#ff0000"/><rect x="717" y="247" width="3" height="1" fill="#ff0000"/><rect x="723" y="246" width="2" height="1" fill="#ff0000"/><rect x="725" y="245" width="1" height="1" fill="#ff0000"/><rect x="729" y="245" width="2" height="1" fill="#ff0000"/><rect x="731" y="244" width="1" height="1" fill="#ff0000"/><rect x="735" y="244" width="2" height="1" fill="#ff0000"/><rect x="737" y="243" width="1" height="1" fill="#ff0000"/><rect x="741" y="243" width="2" height="1" fill="#ff0000"/><rect x="743" y="242" width="1" height="1" fill="#ff0000"/><rect x="747" y="242" width="1" height="1" fill="#ff0000"/><rect x="748" y="241" width="2" height="1" fill="#ff0000"/><rect x="753" y="241" width="1" height="1" fill="#ff0000"/><rect x="754" y="240" width="2" height="1" fill="#ff0000"/><rect x="759" y="240" width="1" height="1" fill="#ff0000"/><rect x="760" y="239" width="2" height="1" fill="#ff0000"/><rect x="765" y="239" width="1" height="1" fill="#ff0000"/><rect x="766" y="238" width="2" height="1" fill="#ff0000"/><rect x="771" y="237" width="3" height="1" fill="#ff0000"/><rect x="777" y="236" width="2" height="1" fill="#ff0000"/></g>
<g shape-rendering="crispEdges"><rect x="6" y="408" width="1" height="1" fill="#ff0000"/><rect x="7" y="407" width="2" height="1" fill="#ff0000"/><rect x="12" y="406" width="3" height="1" fill="#ff0000"/><rect x="18" y="405" width="3" height="1" fill="#ff0000"/><rect x="24" y="404" width="3" height="1" fill="#ff0000"/><rect x="30" y="403" width="3" height="1" fill="#ff0000"/><rect x="36" y="402" width="3" height="1" fill="#ff0000"/><rect x="42" y="401" width="3" height="1" fill="#ff0000"/><rect x="48" y="400" width="3" height="1" fill="#ff0000"/><rect x="54" y="399" width="3" height="1" fill="#ff0000"/><rect x="60" y="398" width="3" height="1" fill="#ff0000"/><rect x="66" y="397" width="3" height="1" fill="#ff0000"/><rect x="72" y="396" width="3" height="1" fill="#ff0000"/><rect x="78" y="395" width="3" height="1" fill="#ff0000"/><rect x="84" y="394" width="3" height="1" fill="#ff0000"/><rect x="90" y="393" width="3" height="1" fill="#ff0000"/><rect x="96" y="392" width="3" height="1" fill="#ff0000"/><rect x="102" y="391" width="2" height="1" fill="#ff0000"/><rect x="104" y="390" width="1" height="1" fill="#ff0000"/><rect x="108" y="390" width="2" height="1" fill="#ff0000"/><rect x="110" y="389" width="1" height="1" fill="#ff0000"/><rect x="114" y="389" width="2" height="1" fill="#ff0000"/><rect x="116" y="388" width="1" height="1" fill="#ff0000"/><rect x="120" y="388" width="2" height="1" fill="#ff0000"/><rect x="122" y="387" width="1" height="1" fill="#ff0000"/><rect x="126" y="387" width="2" height="1" fill="#ff0000"/><rect x="128" y="386" width="1" height="1" fill="#ff0000"/><rect x="132" y="386" width="1" height="1" fill="#ff0000"/><rect x="133" y="385" width="2" height="1" fill="#ff0000"/><rect x="138" y="385" width="1" height="1" fill="#ff0000"/><rect x="139" y="384" width="2" height="1" fill="#ff0000"/><rect x="144" y="384" width="1" height="1" fill="#ff0000"/><rect x="145" y="383" width="2" height="1" fill="#ff0000"/><rect x="150" y="383" width="1" height="1" fill="#ff0000"/><rect x="151" y="382" width="2" height="1" fill="#ff0000"/><rect x="156" y="381" width="3" height="1" fill="#ff0000"/><rect x="162" y="380" width="3" height="1" fill="#ff0000"/><rect x="168" y="379" width="3" height="1" fill="#ff0000"/><rect x="174" y="378" width="3" height="1" fill="#ff0000"/><rect x="180" y="377" width="3" height="1" fill="#ff0000"/><rect x="186" y="376" width="3" height="1" fill="#ff0000"/><rect x="192" y="375" width="3" height="1" fill="#ff0000"/><rect x="198" y="374" width="3" height="1" fill="#ff0000"/><rect x="204" y="373" width="3" height="1" fill="#ff0000"/><rect x="210" y="372" width="3" height="1" fill="#ff0000"/><rect x="216" y="371" width="3" height="1" fill="#ff0000"/><rect x="222" y="370" width="3" height="1" fill="#ff0000"/></g>
<g shape-rendering="crispEdges"><rect x="6" y="497" width="3" height="1" fill="#00ff00"/><rect x="12" y="496" width="3" height="1" fill="#00ff00"/><rect x="18" y="495" width="3" height="1" fill="#00ff00"/><rect x="24" y="494" width="3" height="1" fill="#00ff00"/><rect x="30" y="493" width="3" height="1" fill="#00ff00"/><rect x="36" y="492" width="3" height="1" fill="#00ff00"/><rect x="42" y="491" width="3" height="1" fill="#00ff00"/><rect x="48" y="490" width="3" height="1" fill="#00ff00"/><rect x="54" y="489" width="3" height="1" fill="#00ff00"/><rect x="60" y="488" width="3" height="1" fill="#00ff00"/><rect x="66" y="487" width="3" height="1" fill="#00ff00"/><rect x="72" y="486" width="3" height="1" fill="#00ff00"/><rect x="78" y="485" width="3" height="1" fill="#00ff00"/><rect x="84" y="484" width="3" height="1" fill="#00ff00"/><rect x="90" y="483" width="3" height="1" fill="#00ff00"/><rect x="96" y="482" width="3" height="1" fill="#00ff00"/><rect x="102" y="481" width="3" height="1" fill="#00ff00"/><rect x="108" y="480" width="3" height="1" fill="#00ff00"/><rect x="114" y="479" width="3" height="1" fill="#00ff00"/><rect x="120" y="478" width="3" height="1" fill="#00ff00"/><rect x="126" y="477" width="3" height="1" fill="#00ff00"/><rect x="132" y="476" width="3" height="1" fill="#00ff00"/><rect x="138" y="475" width="3" height="1" fill="#00ff00"/><rect x="144" y="474" width="3" height="1" fill="#00ff00"/><rect x="150" y="473" width="3" height="1" fill="#00ff00"/><rect x="156" y="472" width="3" height="1" fill="#00ff00"/><rect x="162" y="471" width="3" height="1" fill="#00ff00"/><rect x="168" y="470" width="3" height="1" fill="#00ff00"/><rect x="174" y="469" width="3" height="1" fill="#00ff00"/><rect x="180" y="468" width="3" height="1" fill="#00ff00"/><rect x="186" y="467" width="3" height="1" fill="#00ff00"/><rect x="192" y="466" width="3" height="1" fill="#00ff00"/><rect x="198" y="465" width="3" height="1" fill="#00ff00"/><rect x="204" y="464" width="3" height="1" fill="#00ff00"/><rect x="210" y="463" width="3" height="1" fill="#00ff00"/><rect x="216" y="462" width="3" height="1" fill="#00ff00"/><rect x="222" y="461" width="3" height="1" fill="#00ff00"/><rect x="228" y="460" width="3" height="1" fill="#00ff00"/><rect x="234" y="459" width="3" height="1" fill="#00ff00"/><rect x="240" y="458" width="3" height="1" fill="#00ff00"/><rect x="246" y="457" width="3" height="1" fill="#00ff00"/><rect x="252" y="456" width="3" height="1" fill="#00ff00"/><rect x="258" y="455" width="3" height="1" fill="#00ff00"/><rect x="264" y="454" width="3" height="1" fill="#00ff00"/><rect x="270" y="453" width="3" height="1" fill="#00ff00"/><rect x="276" y="452" width="3" height="1" fill="#00ff00"/><rect x="282" y="451" width="3" height="1" fill="#00ff00"/><rect x="288" y="450" width="3" height="1" fill="#00ff00"/><rect x="294" y="449" width="3" height="1" fill="#00ff00"/><rect x="300" y="448" width="3" height="1" fill="#00ff00"/><rect x="306" y="447" width="3" height="1" fill="#00ff00"/><rect x="312" y="446" width="3" height="1" fill="#00ff00"/><rect x="318" y="445" width="3" height="1" fill="#00ff00"/><rect x="324" y="444" width="3" height="1" fill="#00ff00"/><rect x="330" y="443" width="3" height="1" fill="#00ff00"/><rect x="336" y="442" width="3" height="1" fill="#00ff00"/><rect x="342" y="441" width="3" height="1" fill="#00ff00"/><rect x="348" y="440" width="3" height="1" fill="#00ff00"/><rect x="354" y="439" width="3" height="1" fill="#00ff00"/><rect x="360" y="438" width="3" height="1" fill="#00ff00"/><rect x="366" y="437" width="3" height="1" fill="#00ff00"/><rect x="372" y="436" width="3" height="1" fill="#00ff00"/><rect x="378" y="435" width="3" height="1" fill="#00ff00"/><rect x="384" y="434" width="3" height="1" fill="#00ff00"/><rect x="390" y="433" width="3" height="1" fill="#00ff00"/><rect x="396" y="432" width="3" height="1" fill="#00ff00"/><rect x="402" y="431" width="3" height="1" fill="#00ff00"/><rect x="408" y="430" width="3" height="1" fill="#00ff00"/><rect x="414" y="429" width="3" height="1" fill="#00ff00"/><rect x="420" y="428" width="3" height="1" fill="#00ff00"/><rect x="426" y="427" width="3" height="1" fill="#00ff00"/><rect x="432" y="426" width="3" height="1" fill="#00ff00"/><rect x="438" y="425" width="3" height="1" fill="#00ff00"/><rect x="444" y="424" width="3" height="1" fill="#00ff00"/><rect x="450" y="423" width="3" height="1" fill="#00ff00"/><rect x="456" y="422" width="3" height="1" fill="#00ff00"/><rect x="462" y="421" width="3" height="1" fill="#00ff00"/><rect x="468" y="420" width="3" height="1" fill="#00ff00"/><rect x="474" y="419" width="3" height="1" fill="#00ff00"/><rect x="480" y="418" width="3" height="1" fill="#00ff00"/><rect x="486" y="417" width="3" height="1" fill="#00ff00"/><rect x="492" y="416" width="3" height="1" fill="#00ff00"/><rect x="498" y="415" width="3" height="1" fill="#00ff00"/><rect x="504" y="414" width="3" height="1" fill="#00ff00"/><rect x="510" y="413" width="3" height="1" fill="#00ff00"/><rect x="516" y="412" width="3" height="1" fill="#00ff00"/><rect x="522" y="411" width="3" height="1" fill="#00ff00"/><rect x="528" y="410" width="3" height="1" fill="#00ff00"/><rect x="534" y="409" width="1" height="1" fill="#00ff00"/></g>
<g shape-rendering="crispEdges"><rect x="6" y="517" width="3" height="1" fill="#00ff00"/><rect x="12" y="516" width="3" height="1" fill="#00ff00"/><rect x="18" y="515" width="3" height="1" fill="#00ff00"/><rect x="24" y="514" width="3" height="1" fill="#00ff00"/><rect x="30" y="513" width="3" height="1" fill="#00ff00"/><rect x="36" y="512" width="3" height="1" fill="#00ff00"/><rect x="42" y="511" width="3" height="1" fill="#00ff00"/><rect x="48" y="510" width="3" height="1" fill="#00ff00"/><rect x="54" y="509" width="3" height="1" fill="#00ff00"/><rect x="60" y="508" width="3" height="1" fill="#00ff00"/><rect x="66" y="507" width="3" height="1" fill="#00ff00"/><rect x="72" y="506" width="3" height="1" fill="#00ff00"/><rect x="78" y="505" width="3" height="1" fill="#00ff00"/><rect x="84" y="504" width="3" height="1" fill="#00ff00"/><rect x="90" y="503" width="3" height="1" fill="#00ff00"/><rect x="96" y="502" width="3" height="1" fill="#00ff00"/><rect x="102" y="501" width="3" height="1" fill="#00ff00"/><rect x="108" y="500" width="3" height="1" fill="#00ff00"/><rect x="114" y="499" width="3" height="1" fill="#00ff00"/><rect x="120" y="498" width="3" height="1" fill="#00ff00"/><rect x="126" y="497" width="3" height="1" fill="#00ff00"/><rect x="132" y="496" width="3" height="1" fill="#00ff00"/><rect x="138" y="495" width="2" height="1" fill="#00ff00"/><rect x="140" y="494" width="1" height="1" fill="#00ff00"/><rect x="144" y="494" width="2" height="1" fill="#00ff00"/><rect x="146" y="493" width="1" height="1" fill="#00ff00"/><rect x="150" y="493" width="2" height="1" fill="#00ff00"/><rect x="152" y="492" width="1" height="1" fill="#00ff00"/><rect x="156" y="492" width="2" height="1" fill="#00ff00"/><rect x="158" y="491" width="1" height="1" fill="#00ff00"/><rect x="162" y="491" width="2" height="1" fill="#00ff00"/><rect x="164" y="490" width="1" height="1" fill="#00ff00"/><rect x="168" y="490" width="2" height="1" fill="#00ff00"/><rect x="170" y="489" width="1" height="1" fill="#00ff00"/><rect x="174" y="489" width="2" height="1" fill="#00ff00"/><rect x="176" y="488" width="1" height="1" fill="#00ff00"/><rect x="180" y="488" width="2" height="1" fill="#00ff00"/><rect x="182" y="487" width="1" height="1" fill="#00ff00"/><rect x="186" y="487" width="2" height="1" fill="#00ff00"/><rect x="188" y="486" width="1" height="1" fill="#00ff00"/><rect x="192" y="486" width="2" height="1" fill="#00ff00"/><rect x="194" y="485" width="1" height="1" fill="#00ff00"/><rect x="198" y="485" width="2" height="1" fill="#00ff00"/><rect x="200" y="484" width="1" height="1" fill="#00ff00"/><rect x="204" y="484" width="2" height="1" fill="#00ff00"/><rect x="206" y="483" width="1" height="1" fill="#00ff00"/><rect x="210" y="483" width="2" height="1" fill="#00ff00"/><rect x="212" y="482" width="1" height="1" fill="#00ff00"/><rect x="216" y="482" width="2" height="1" fill="#00ff00"/><rect x="218" y="481" width="1" height="1" fill="#00ff00"/><rect x="222" y="481" width="2" height="1" fill="#00ff00"/><rect x="224" y="480" width="1" height="1" fill="#00ff00"/><rect x="228" y="480" width="2" height="1" fill="#00ff00"/><rect x="230" y="479" width="1" height="1" fill="#00ff00"/><rect x="234" y="479" width="2" height="1" fill="#00ff00"/><rect x="236" y="478" width="1" height="1" fill="#00ff00"/><rect x="240" y="478" width="2" height="1" fill="#00ff00"/><rect x="242" y="477" width="1" height="1" fill="#00ff00"/><rect x="246" y="477" width="2" height="1" fill="#00ff00"/><rect x="248" y="476" width="1" height="1" fill="#00ff00"/><rect x="252" y="476" width="2" height="1" fill="#00ff00"/><rect x="254" y="475" width="1" height="1" fill="#00ff00"/><rect x="258" y="475" width="2" height="1" fill="#00ff00"/><rect x="260" y="474" width="1" height="1" fill="#00ff00"/><rect x="264" y="474" width="1" height="1" fill="#00ff00"/><rect x="265" y="473" width="2" height="1" fill="#00ff00"/><rect x="270" y="473" width="1" height="1" fill="#00ff00"/><rect x="271" y="472" width="2" height="1" fill="#00ff00"/><rect x="276" y="472" width="1" height="1" fill="#00ff00"/><rect x="277" y="471" width="2" height="1" fill="#00ff00"/><rect x="282" y="471" width="1" height="1" fill="#00ff00"/><rect x="283" y="470" width="2" height="1" fill="#00ff00"/><rect x="288" y="470" width="1" height="1" fill="#00ff00"/><rect x="289" y="469" width="2" height="1" fill="#00ff00"/><rect x="294" y="469" width="1" height="1" fill="#00ff00"/><rect x="295" y="468" width="2" height="1" fill="#00ff00"/><rect x="300" y="468" width="1" height="1" fill="#00ff00"/><rect x="301" y="467" width="2" height="1" fill="#00ff00"/><rect x="306" y="467" width="1" height="1" fill="#00ff00"/><rect x="307" y="466" width="2" height="1" fill="#00ff00"/><rect x="312" y="466" width="1" height="1" fill="#00ff00"/><rect x="313" y="465" width="2" height="1" fill="#00ff00"/><rect x="318" y="465" width="1" height="1" fill="#00ff00"/><rect x="319" y="464" width="2" height="1" fill="#00ff00"/><rect x="324" y="464" width="1" height="1" fill="#00ff00"/><rect x="325" y="463" width="2" height="1" fill="#00ff00"/><rect x="330" y="463" width="1" height="1" fill="#00ff00"/><rect x="331" y="462" width="2" height="1" fill="#00ff00"/><rect x="336" y="462" width="1" height="1" fill="#00ff00"/><rect x="337" y="461" width="2" height="1" fill="#00ff00"/><rect x="342" y="461" width="1" height="1" fill="#00ff00"/><rect x="343" y="460" width="2" height="1" fill="#00ff00"/><rect x="348" y="460" width="1" height="1" fill="#00ff00"/><rect x="349" y="459" width="2" height="1" fill="#00ff00"/><rect x="354" y="459" width="1" height="1" fill="#00ff00"/><rect x="355" y="458" width="2" height="1" fill="#00ff00"/><rect x="360" y="458" width="1" height="1" fill="#00ff00"/><rect x="361" y="457" width="2" height="1" fill="#00ff00"/><rect x="366" y="457" width="1" height="1" fill="#00ff00"/><rect x="367" y="456" width="2" height="1" fill="#00ff00"/><rect x="372" y="456" width="1" height="1" fill="#00ff00"/><rect x="373" y="455" width="2" height="1" fill="#00ff00"/><rect x="378" y="455" width="1" height="1" fill="#00ff00"/><rect x="379" y="454" width="2" height="1" fill="#00ff00"/><rect x="384" y="454" width="1" height="1" fill="#00ff00"/><rect x="385" y="453" width="2" height="1" fill="#00ff00"/><rect x="390" y="453" width="1" height="1" fill="#00ff00"/><rect x="391" y="452" width="2" height="1" fill="#00ff00"/><rect x="396" y="451" width="3" height="1" fill="#00ff00"/><rect x="402" y="450" width="3" height="1" fill="#00ff00"/><rect x="408" y="449" width="3" height="1" fill="#00ff00"/><rect x="414" y="448" width="3" height="1" fill="#00ff00"/><rect x="420" y="447" width="3" height="1" fill="#00ff00"/><rect x="426" y="446" width="3" height="1" fill="#00ff00"/><rect x="432" y="445" width="3" height="1" fill="#00ff00"/><rect x="438" y="444" width="3" height="1" fill="#00ff00"/><rect x="444" y="443" width="3" height="1" fill="#00ff00"/><rect x="450" y="442" width="3" height="1" fill="#00ff00"/><rect x="456" y="441" width="3" height="1" fill="#00ff00"/><rect x="462" y="440" width="3" height="1" fill="#00ff00"/><rect x="468" y="439" width="3" height="1" fill="#00ff00"/><rect x="474" y="438" width="3" height="1" fill="#00ff00"/><rect x="480" y="437" width="3" height="1" fill="#00ff00"/><rect x="486" y="436" width="3" height="1" fill="#00ff00"/><rect x="492" y="435" width="3" height="1" fill="#00ff00"/><rect x="498" y="434" width="3" height="1" fill="#00ff00"/><rect x="504" y="433" width="3" height="1" fill="#00ff00"/><rect x="510" y="432" width="3" height="1" fill="#00ff00"/><rect x="516" y="431" width="3" height="1" fill="#00ff00"/><rect x="522" y="430" width="3" height="1" fill="#00ff00"/><rect x="528" y="429" width="3" height="1" fill="#00ff00"/><rect x="534" y="428" width="3" height="1" fill="#00ff00"/><rect x="540" y="427" width="3" height="1" fill="#00ff00"/><rect x="546" y="426" width="3" height="1" fill="#00ff00"/><rect x="552" y="425" width="3" height="1" fill="#00ff00"/><rect x="558" y="424" width="3" height="1" fill="#00ff00"/><rect x="564" y="423" width="3" height="1" fill="#00ff00"/><rect x="570" y="422" width="3" height="1" fill="#00ff00"/><rect x="576" y="421" width="3" height="1" fill="#00ff00"/><rect x="582" y="420" width="3" height="1" fill="#00ff00"/><rect x="588" y="419" width="3" height="1" fill="#00ff00"/><rect x="594" y="418" width="3" height="1" fill="#00ff00"/><rect x="600" y="417" width="3" height="1" fill="#00ff00"/><rect x="606" y="416" width="3" height="1" fill="#00ff00"/><rect x="612" y="415" width="3" height="1" fill="#00ff00"/><rect x="618" y="414" width="3" height="1" fill="#00ff00"/><rect x="624" y="413" width="3" height="1" fill="#00ff00"/><rect x="630" y="412" width="3" height="1" fill="#00ff00"/><rect x="636" y="411" width="3" height="1" fill="#00ff00"/><rect x="642" y="410" width="3" height="1" fill="#00ff00"/><rect x="648" y="409" width="3" height="1" fill="#00ff00"/><rect x="654" y="408" width="3" height="1" fill="#00ff00"/><rect x="660" y="407" width="3" height="1" fill="#00ff00"/><rect x="666" y="406" width="3" height="1" fill="#00ff00"/><rect x="672" y="405" width="3" height="1" fill="#00ff00"/><rect x="678" y="404" width="3" height="1" fill="#00ff00"/><rect x="684" y="403" width="3" height="1" fill="#00ff00"/><rect x="690" y="402" width="3" height="1" fill="#00ff00"/><rect x="696" y="401" width="3" height="1" fill="#00ff00"/><rect x="702" y="400" width="3" height="1" fill="#00ff00"/><rect x="708" y="399" width="3" height="1" fill="#00ff00"/><rect x="714" y="398" width="3" height="1" fill="#00ff00"/><rect x="720" y="397" width="3" height="1" fill="#00ff00"/><rect x="726" y="396" width="3" height="1" fill="#00ff00"/><rect x="732" y="395" width="3" height="1" fill="#00ff00"/><rect x="738" y="394" width="3" height="1" fill="#00ff00"/><rect x="744" y="393" width="3" height="1" fill="#00ff00"/><rect x="750" y="392" width="3" height="1" fill="#00ff00"/><rect x="756" y="391" width="3" height="1" fill="#00ff00"/><rect x="762" y="390" width="3" height="1" fill="#00ff00"/><rect x="768" y="389" width="3" height="1" fill="#00ff00"/><rect x="774" y="388" width="3" height="1" fill="#00ff00"/><rect x="780" y="387" width="3" height="1" fill="#00ff00"/><rect x="786" y="386" width="3" height="1" fill="#00ff00"/><rect x="792" y="385" width="3" height="1" fill="#00ff00"/><rect x="798" y="384" width="3" height="1" fill="#00ff00"/><rect x="804" y="383" width="3" height="1" fill="#00ff00"/><rect x="810" y="382" width="3" height="1" fill="#00ff00"/><rect x="816" y="381" width="3" height="1" fill="#00ff00"/><rect x="822" y="380" width="3" height="1" fill="#00ff00"/><rect x="828" y="379" width="3" height="1" fill="#00ff00"/><rect x="834" y="378" width="3" height="1" fill="#00ff00"/><rect x="840" y="377" width="3" height="1" fill="#00ff00"/><rect x="846" y="376" width="3" height="1" fill="#00ff00"/><rect x="852" y="375" width="3" height="1" fill="#00ff00"/><rect x="858" y="374" width="3" height="1" fill="#00ff00"/><rect x="864" y="373" width="3" height="1" fill="#00ff00"/><rect x="870" y="372" width="3" height="1" fill="#00ff00"/><rect x="876" y="371" width="3" height="1" fill="#00ff00"/><rect x="882" y="370" width="3" height="1" fill="#00ff00"/><rect x="888" y="369" width="3" height="1" fill="#00ff00"/><rect x="894" y="368" width="3" height="1" fill="#00ff00"/><rect x="900" y="367" width="3" height="1" fill="#00ff00"/><rect x="906" y="366" width="2" height="1" fill="#00ff00"/><rect x="908" y="365" width="1" height="1" fill="#00ff00"/><rect x="912" y="365" width="2" height="1" fill="#00ff00"/><rect x="914" y="364" width="1" height="1" fill="#00ff00"/><rect x="918" y="364" width="2" height="1" fill="#00ff00"/><rect x="920" y="363" width="1" height="1" fill="#00ff00"/><rect x="924" y="363" width="2" height="1" fill="#00ff00"/><rect x="926" y="362" width="1" height="1" fill="#00ff00"/><rect x="930" y="362" width="2" height="1" fill="#00ff00"/><rect x="932" y="361" width="1" height="1" fill="#00ff00"/><rect x="936" y="361" width="2" height="1" fill="#00ff00"/><rect x="938" y="360" width="1" height="1" fill="#00ff00"/><rect x="942" y="360" width="2" height="1" fill="#00ff00"/><rect x="944" y="359" width="1" height="1" fill="#00ff00"/><rect x="948" y="359" width="2" height="1" fill="#00ff00"/><rect x="950" y="358" width="1" height="1" fill="#00ff00"/><rect x="954" y="358" width="2" height="1" fill="#00ff00"/><rect x="956" y="357" width="1" height="1" fill="#00ff00"/><rect x="960" y="357" width="2" height="1" fill="#00ff00"/><rect x="962" y="356" width="1" height="1" fill="#00ff00"/><rect x="966" y="356" width="2" height="1" fill="#00ff00"/><rect x="968" y="355" width="1" height="1" fill="#00ff00"/><rect x="972" y="355" width="2" height="1" fill="#00ff00"/><rect x="974" y="354" width="1" height="1" fill="#00ff00"/><rect x="978" y="354" width="2" height="1" fill="#00ff00"/><rect x="980" y="353" width="1" height="1" fill="#00ff00"/><rect x="984" y="353" width="2" height="1" fill="#00ff00"/><rect x="986" y="352" width="1" height="1" fill="#00ff00"/><rect x="990" y="352" width="2" height="1" fill="#00ff00"/><rect x="992" y="351" width="1" height="1" fill="#00ff00"/><rect x="996" y="351" width="2" height="1" fill="#00ff00"/><rect x="998" y="350" width="1" height="1" fill="#00ff00"/><rect x="1002" y="350" width="2" height="1" fill="#00ff00"/><rect x="1004" y="349" width="1" height="1" fill="#00ff00"/><rect x="1008" y="349" width="2" height="1" fill="#00ff00"/><rect x="1010" y="348" width="1" height="1" fill="#00ff00"/><rect x="1014" y="348" width="2" height="1" fill="#00ff00"/><rect x="1016" y="347" width="1" height="1" fill="#00ff00"/><rect x="1020" y="347" width="2" height="1" fill="#00ff00"/><rect x="1022" y="346" width="1" height="1" fill="#00ff00"/><rect x="1026" y="346" width="2" height="1" fill="#00ff00"/><rect x="1028" y="345" width="1" height="1" fill="#00ff00"/><rect x="1032" y="345" width="2" height="1" fill="#00ff00"/><rect x="1034" y="344" width="1" height="1" fill="#00ff00"/><rect x="1038" y="344" width="1" height="1" fill="#00ff00"/><rect x="1039" y="343" width="2" height="1" fill="#00ff00"/><rect x="1044" y="343" width="1" height="1" fill="#00ff00"/><rect x="1045" y="342" width="2" height="1" fill="#00ff00"/><rect x="1050" y="342" width="1" height="1" fill="#00ff00"/><rect x="1051" y="341" width="2" height="1" fill="#00ff00"/><rect x="1056" y="341" width="1" height="1" fill="#00ff00"/><rect x="1057" y="340" width="2" height="1" fill="#00ff00"/><rect x="1062" y="340" width="1" height="1" fill="#00ff00"/><rect x="1063" y="339" width="2" height="1" fill="#00ff00"/><rect x="1068" y="339" width="1" height="1" fill="#00ff00"/><rect x="1069" y="338" width="2" height="1" fill="#00ff00"/><rect x="1074" y="338" width="1" height="1" fill="#00ff00"/><rect x="1075" y="337" width="2" height="1" fill="#00ff00"/><rect x="1080" y="337" width="1" height="1" fill="#00ff00"/><rect x="1081" y="336" width="2" height="1" fill="#00ff00"/><rect x="1086" y="336" width="1" height="1" fill="#00ff00"/><rect x="1087" y="335" width="2" height="1" fill="#00ff00"/><rect x="1092" y="335" width="1" height="1" fill="#00ff00"/><rect x="1093" y="334" width="2" height="1" fill="#00ff00"/><rect x="1098" y="334" width="1" height="1" fill="#00ff00"/><rect x="1099" y="333" width="2" height="1" fill="#00ff00"/><rect x="1104" y="333" width="1" height="1" fill="#00ff00"/><rect x="1105" y="332" width="2" height="1" fill="#00ff00"/><rect x="1110" y="332" width="1" height="1" fill="#00ff00"/><rect x="1111" y="331" width="2" height="1" fill="#00ff00"/><rect x="1116" y="331" width="1" height="1" fill="#00ff00"/><rect x="1117" y="330" width="2" height="1" fill="#00ff00"/><rect x="1122" y="330" width="1" height="1" fill="#00ff00"/><rect x="1123" y="329" width="2" height="1" fill="#00ff00"/><rect x="1128" y="329" width="1" height="1" fill="#00ff00"/><rect x="1129" y="328" width="2" height="1" fill="#00ff00"/><rect x="1134" y="328" width="1" height="1" fill="#00ff00"/><rect x="1135" y="327" width="2" height="1" fill="#00ff00"/><rect x="1140" y="327" width="1" height="1" fill="#00ff00"/><rect x="1141" y="326" width="2" height="1" fill="#00ff00"/><rect x="1146" y="326" width="1" height="1" fill="#00ff00"/><rect x="1147" y="325" width="2" height="1" fill="#00ff00"/><rect x="1152" y="325" width="1" height="1" fill="#00ff00"/><rect x="1153" y="324" width="2" height="1" fill="#00ff00"/><rect x="1158" y="324" width="1" height="1" fill="#00ff00"/><rect x="1159" y="323" width="2" height="1" fill="#00ff00"/><rect x="1164" y="322" width="3" height="1" fill="#00ff00"/><rect x="1170" y="321" width="3" height="1" fill="#00ff00"/><rect x="1176" y="320" width="3" height="1" fill="#00ff00"/><rect x="1182" y="319" width="3" height="1" fill="#00ff00"/><rect x="1188" y="318" width="1" height="1" fill="#00ff00"/></g>
<g shape-rendering="crispEdges"><rect x="5" y="491" width="1" height="23" fill="#0000ff"/><rect x="7" y="492" width="1" height="21" fill="#0000ff"/><rect x="9" y="493" width="1" height="13" fill="#0000ff"/><rect x="11" y="482" width="1" height="31" fill="#0000ff"/><rect x="13" y="472" width="1" height="26" fill="#0000ff"/><rect x="15" y="467" width="1" height="23" fill="#0000ff"/><rect x="17" y="463" width="1" height="19" fill="#0000ff"/><rect x="19" y="465" width="1" height="9" fill="#0000ff"/><rect x="21" y="461" width="1" height="12" fill="#ff0000"/><rect x="23" y="453" width="1" height="25" fill="#ff0000"/><rect x="25" y="465" width="1" height="21" fill="#ff0000"/><rect x="27" y="462" width="1" height="40" fill="#ff0000"/><rect x="29" y="470" width="1" height="30" fill="#ff0000"/><rect x="31" y="481" width="1" height="24" fill="#0000ff"/><rect x="33" y="481" width="1" height="20" fill="#0000ff"/><rect x="35" y="467" width="1" height="28" fill="#0000ff"/><rect x="37" y="469" width="1" height="25" fill="#0000ff"/><rect x="39" y="456" width="1" height="32" fill="#0000ff"/><rect x="41" y="448" width="1" height="28" fill="#0000ff"/><rect x="43" y="452" width="1" height="18" fill="#0000ff"/><rect x="45" y="437" width="1" height="25" fill="#0000ff"/><rect x="47" y="443" width="1" height="15" fill="#0000ff"/><rect x="49" y="445" width="1" height="12" fill="#ff0000"/><rect x="51" y="443" width="1" height="11" fill="#ff0000"/><rect x="53" y="446" width="1" height="14" fill="#ff0000"/><rect x="55" y="449" width="1" height="23" fill="#ff0000"/><rect x="57" y="451" width="1" height="28" fill="#ff0000"/><rect x="59" y="464" width="1" height="19" fill="#ff0000"/><rect x="61" y="464" width="1" height="24" fill="#ff0000"/><rect x="63" y="475" width="1" height="11" fill="#ff0000"/><rect x="65" y="471" width="1" height="18" fill="#0000ff"/><rect x="67" y="472" width="1" height="25" fill="#0000ff"/><rect x="69" y="465" width="1" height="17" fill="#0000ff"/><rect x="71" y="462" width="1" height="30" fill="#0000ff"/><rect x="73" y="461" width="1" height="20" fill="#0000ff"/><rect x="75" y="458" width="1" height="18" fill="#0000ff"/><rect x="77" y="453" width="1" height="17" fill="#0000ff"/><rect x="79" y="445" width="1" height="28" fill="#0000ff"/><rect x="81" y="446" width="1" height="17" fill="#0000ff"/><rect x="83" y="431" width="1" height="24" fill="#0000ff"/><rect x="85" y="429" width="1" height="19" fill="#0000ff"/><rect x="87" y="437" width="1" height="8" fill="#0000ff"/><rect x="89" y="436" width="1" height="14" fill="#0000ff"/><rect x="91" y="437" width="1" height="5" fill="#ff0000"/><rect x="93" y="436" width="1" height="6" fill="#ff0000"/><rect x="95" y="431" width="1" height="24" fill="#0000ff"/><rect x="97" y="434" width="1" height="10" fill="#ff0000"/><rect x="99" y="428" width="1" height="18" fill="#ff0000"/><rect x="101" y="437" width="1" height="12" fill="#ff0000"/><rect x="103" y="438" width="1" height="13" fill="#ff0000"/><rect x="105" y="444" width="1" height="4" fill="#0000ff"/><rect x="107" y="435" width="1" height="15" fill="#0000ff"/><rect x="109" y="430" width="1" height="17" fill="#0000ff"/><rect x="111" y="424" width="1" height="16" fill="#0000ff"/><rect x="113" y="418" width="1" height="18" fill="#0000ff"/><rect x="115" y="412" width="1" height="16" fill="#0000ff"/><rect x="117" y="409" width="1" height="19" fill="#0000ff"/><rect x="119" y="412" width="1" height="10" fill="#ff0000"/><rect x="121" y="405" width="1" height="29" fill="#ff0000"/><rect x="123" y="416" width="1" height="14" fill="#ff0000"/><rect x="125" y="419" width="1" height="23" fill="#ff0000"/><rect x="127" y="426" width="1" height="35" fill="#ff0000"/><rect x="129" y="435" width="1" height="21" fill="#ff0000"/><rect x="131" y="442" width="1" height="18" fill="#ff0000"/><rect x="133" y="436" width="1" height="21" fill="#0000ff"/><rect x="135" y="424" width="1" height="27" fill="#0000ff"/><rect x="137" y="413" width="1" height="29" fill="#0000ff"/><rect x="139" y="402" width="1" height="30" fill="#0000ff"/><rect x="141" y="387" width="1" height="35" fill="#0000ff"/><rect x="143" y="366" width="1" height="41" fill="#0000ff"/><rect x="145" y="370" width="1" height="23" fill="#0000ff"/><rect x="147" y="373" width="1" height="13" fill="#0000ff"/><rect x="149" y="366" width="1" height="23" fill="#0000ff"/><rect x="151" y="366" width="1" height="10" fill="#0000ff"/><rect x="153" y="371" width="1" height="17" fill="#ff0000"/><rect x="155" y="370" width="1" height="10" fill="#ff0000"/><rect x="157" y="361" width="1" height="22" fill="#ff0000"/><rect x="159" y="373" width="1" height="10" fill="#ff0000"/><rect x="161" y="378" width="1" height="17" fill="#ff0000"/><rect x="163" y="381" width="1" height="14" fill="#ff0000"/><rect x="165" y="382" width="1" height="6" fill="#ff0000"/><rect x="167" y="384" width="1" height="12" fill="#ff0000"/><rect x="169" y="375" width="1" height="26" fill="#ff0000"/><rect x="171" y="383" width="1" height="10" fill="#ff0000"/><rect x="173" y="376" width="1" height="19" fill="#ff0000"/><rect x="175" y="378" width="1" height="28" fill="#ff0000"/><rect x="177" y="391" width="1" height="8" fill="#ff0000"/><rect x="179" y="391" width="1" height="10" fill="#ff0000"/><rect x="181" y="394" width="1" height="13" fill="#ff0000"/><rect x="183" y="389" width="1" height="18" fill="#ff0000"/><rect x="185" y="399" width="1" height="17" fill="#ff0000"/><rect x="187" y="395" width="1" height="23" fill="#ff0000"/><rect x="189" y="400" width="1" height="9" fill="#ff0000"/><rect x="191" y="401" width="1" height="16" fill="#ff0000"/><rect x="193" y="400" width="1" height="19" fill="#ff0000"/><rect x="195" y="395" width="1" height="33" fill="#ff0000"/><rect x="197" y="402" width="1" height="22" fill="#ff0000"/><rect x="199" y="412" width="1" height="17" fill="#0000ff"/><rect x="201" y="401" width="1" height="30" fill="#0000ff"/><rect x="203" y="404" width="1" height="12" fill="#0000ff"/><rect x="205" y="401" width="1" height="10" fill="#0000ff"/><rect x="207" y="396" width="1" height="17" fill="#0000ff"/><rect x="209" y="398" width="1" height="7" fill="#0000ff"/><rect x="211" y="388" width="1" height="17" fill="#0000ff"/><rect x="213" y="390" width="1" height="15" fill="#0000ff"/><rect x="215" y="394" width="1" height="14" fill="#0000ff"/><rect x="217" y="387" width="1" height="13" fill="#0000ff"/><rect x="219" y="382" width="1" height="18" fill="#0000ff"/><rect x="221" y="367" width="1" height="33" fill="#0000ff"/><rect x="223" y="374" width="1" height="14" fill="#0000ff"/><rect x="225" y="370" width="1" height="15" fill="#0000ff"/><rect x="227" y="358" width="1" height="31" fill="#0000ff"/><rect x="229" y="355" width="1" height="18" fill="#0000ff"/><rect x="231" y="358" width="1" height="13" fill="#0000ff"/><rect x="233" y="357" width="1" height="22" fill="#0000ff"/><rect x="235" y="355" width="1" height="8" fill="#0000ff"/><rect x="237" y="344" width="1" height="29" fill="#0000ff"/><rect x="239" y="348" width="1" height="19" fill="#ff0000"/><rect x="241" y="351" width="1" height="28" fill="#ff0000"/><rect x="243" y="348" width="1" height="43" fill="#ff0000"/><rect x="245" y="366" width="1" height="34" fill="#ff0000"/><rect x="247" y="380" width="1" height="27" fill="#ff0000"/><rect x="249" y="389" width="1" height="32" fill="#ff0000"/><rect x="251" y="403" width="1" height="23" fill="#ff0000"/><rect x="253" y="402" width="1" height="14" fill="#ff0000"/><rect x="255" y="402" width="1" height="29" fill="#ff0000"/><rect x="257" y="405" width="1" height="22" fill="#ff0000"/><rect x="259" y="403" width="1" height="21" fill="#0000ff"/><rect x="261" y="400" width="1" height="21" fill="#0000ff"/><rect x="263" y="401" width="1" height="18" fill="#0000ff"/><rect x="265" y="392" width="1" height="17" fill="#0000ff"/><rect x="267" y="396" width="1" height="10" fill="#0000ff"/><rect x="269" y="399" width="1" height="6" fill="#0000ff"/><rect x="271" y="396" width="1" height="7" fill="#0000ff"/><rect x="273" y="396" width="1" height="5" fill="#0000ff"/><rect x="275" y="391" width="1" height="9" fill="#0000ff"/><rect x="277" y="394" width="1" height="8" fill="#0000ff"/><rect x="279" y="384" width="1" height="15" fill="#0000ff"/><rect x="281" y="392" width="1" height="6" fill="#0000ff"/><rect x="283" y="391" width="1" height="8" fill="#0000ff"/><rect x="285" y="392" width="1" height="4" fill="#0000ff"/><rect x="287" y="388" width="1" height="8" fill="#0000ff"/><rect x="289" y="390" width="1" height="5" fill="#0000ff"/><rect x="291" y="390" width="1" height="5" fill="#0000ff"/><rect x="293" y="378" width="1" height="20" fill="#ff0000"/><rect x="295" y="389" width="1" height="14" fill="#ff0000"/><rect x="297" y="393" width="1" height="11" fill="#ff0000"/><rect x="299" y="391" width="1" height="18" fill="#ff0000"/><rect x="301" y="399" width="1" height="4" fill="#0000ff"/><rect x="303" y="392" width="1" height="17" fill="#0000ff"/><rect x="305" y="392" width="1" height="16" fill="#0000ff"/><rect x="307" y="380" width="1" height="19" fill="#0000ff"/><rect x="309" y="392" width="1" height="8" fill="#0000ff"/><rect x="311" y="387" width="1" height="11" fill="#0000ff"/><rect x="313" y="375" width="1" height="22" fill="#0000ff"/><rect x="315" y="380" width="1" height="16" fill="#0000ff"/><rect x="317" y="368" width="1" height="24" fill="#0000ff"/><rect x="319" y="361" width="1" height="36" fill="#0000ff"/><rect x="321" y="375" width="1" height="10" fill="#0000ff"/><rect x="323" y="370" width="1" height="17" fill="#ff0000"/><rect x="325" y="373" width="1" height="31" fill="#ff0000"/><rect x="327" y="370" width="1" height="39" fill="#ff0000"/><rect x="329" y="381" width="1" height="26" fill="#ff0000"/><rect x="331" y="388" width="1" height="19" fill="#ff0000"/><rect x="333" y="391" width="1" height="17" fill="#0000ff"/><rect x="335" y="384" width="1" height="25" fill="#0000ff"/><rect x="337" y="373" width="1" height="34" fill="#0000ff"/><rect x="339" y="381" width="1" height="28" fill="#0000ff"/><rect x="341" y="371" width="1" height="23" fill="#0000ff"/><rect x="343" y="380" width="1" height="5" fill="#0000ff"/><rect x="345" y="379" width="1" height="5" fill="#ff0000"/><rect x="347" y="368" width="1" height="16" fill="#ff0000"/><rect x="349" y="370" width="1" height="22" fill="#0000ff"/><rect x="351" y="368" width="1" height="19" fill="#0000ff"/><rect x="353" y="371" width="1" height="15" fill="#0000ff"/><rect x="355" y="359" width="1" height="30" fill="#0000ff"/><rect x="357" y="360" width="1" height="19" fill="#ff0000"/><rect x="359" y="362" width="1" height="18" fill="#ff0000"/><rect x="361" y="356" width="1" height="29" fill="#0000ff"/><rect x="363" y="335" width="1" height="47" fill="#0000ff"/><rect x="365" y="331" width="1" height="45" fill="#0000ff"/><rect x="367" y="342" width="1" height="14" fill="#0000ff"/><rect x="369" y="331" width="1" height="20" fill="#ff0000"/><rect x="371" y="334" width="1" height="19" fill="#ff0000"/><rect x="373" y="342" width="1" height="20" fill="#ff0000"/><rect x="375" y="344" width="1" height="28" fill="#ff0000"/><rect x="377" y="351" width="1" height="21" fill="#ff0000"/><rect x="379" y="359" width="1" height="24" fill="#ff0000"/><rect x="381" y="365" width="1" height="19" fill="#ff0000"/><rect x="383" y="365" width="1" height="15" fill="#ff0000"/><rect x="385" y="372" width="1" height="10" fill="#ff0000"/><rect x="387" y="367" width="1" height="28" fill="#ff0000"/><rect x="389" y="376" width="1" height="6" fill="#0000ff"/><rect x="391" y="366" width="1" height="18" fill="#0000ff"/><rect x="393" y="362" width="1" height="30" fill="#0000ff"/><rect x="395" y="369" width="1" height="16" fill="#0000ff"/><rect x="397" y="350" width="1" height="25" fill="#0000ff"/><rect x="399" y="353" width="1" height="19" fill="#0000ff"/><rect x="401" y="344" width="1" height="21" fill="#0000ff"/><rect x="403" y="325" width="1" height="34" fill="#0000ff"/><rect x="405" y="332" width="1" height="28" fill="#0000ff"/><rect x="407" y="338" width="1" height="3" fill="#ff0000"/><rect x="409" y="326" width="1" height="15" fill="#0000ff"/><rect x="411" y="324" width="1" height="20" fill="#0000ff"/><rect x="413" y="324" width="1" height="24" fill="#0000ff"/><rect x="415" y="332" width="1" height="8" fill="#0000ff"/><rect x="417" y="328" width="1" height="10" fill="#0000ff"/><rect x="419" y="325" width="1" height="15" fill="#0000ff"/><rect x="421" y="311" width="1" height="20" fill="#0000ff"/><rect x="423" y="307" width="1" height="21" fill="#0000ff"/><rect x="425" y="298" width="1" height="26" fill="#0000ff"/><rect x="427" y="308" width="1" height="17" fill="#0000ff"/><rect x="429" y="309" width="1" height="6" fill="#0000ff"/><rect x="431" y="308" width="1" height="11" fill="#0000ff"/><rect x="433" y="301" width="1" height="14" fill="#0000ff"/><rect x="435" y="308" width="1" height="5" fill="#ff0000"/><rect x="437" y="305" width="1" height="14" fill="#ff0000"/><rect x="439" y="304" width="1" height="19" fill="#ff0000"/><rect x="441" y="314" width="1" height="22" fill="#ff0000"/><rect x="443" y="304" width="1" height="29" fill="#ff0000"/><rect x="445" y="320" width="1" height="6" fill="#ff0000"/><rect x="447" y="310" width="1" height="17" fill="#0000ff"/><rect x="449" y="305" width="1" height="29" fill="#0000ff"/><rect x="451" y="316" width="1" height="7" fill="#0000ff"/><rect x="453" y="311" width="1" height="18" fill="#0000ff"/><rect x="455" y="302" width="1" height="17" fill="#0000ff"/><rect x="457" y="303" width="1" height="16" fill="#0000ff"/><rect x="459" y="305" width="1" height="12" fill="#0000ff"/><rect x="461" y="309" width="1" height="16" fill="#ff0000"/><rect x="463" y="309" width="1" height="12" fill="#ff0000"/><rect x="465" y="306" width="1" height="18" fill="#ff0000"/><rect x="467" y="315" width="1" height="16" fill="#ff0000"/><rect x="469" y="309" width="1" height="39" fill="#ff0000"/><rect x="471" y="316" width="1" height="39" fill="#ff0000"/><rect x="473" y="329" width="1" height="31" fill="#ff0000"/><rect x="475" y="338" width="1" height="25" fill="#ff0000"/><rect x="477" y="357" width="1" height="11" fill="#ff0000"/><rect x="479" y="349" width="1" height="22" fill="#ff0000"/><rect x="481" y="361" width="1" height="17" fill="#ff0000"/><rect x="483" y="354" width="1" height="30" fill="#ff0000"/><rect x="485" y="372" width="1" height="16" fill="#ff0000"/><rect x="487" y="372" width="1" height="26" fill="#ff0000"/><rect x="489" y="377" width="1" height="17" fill="#0000ff"/><rect x="491" y="365" width="1" height="23" fill="#0000ff"/><rect x="493" y="366" width="1" height="23" fill="#0000ff"/><rect x="495" y="362" width="1" height="21" fill="#0000ff"/><rect x="497" y="343" width="1" height="28" fill="#0000ff"/><rect x="499" y="347" width="1" height="29" fill="#0000ff"/><rect x="501" y="355" width="1" height="18" fill="#ff0000"/><rect x="503" y="356" width="1" height="9" fill="#ff0000"/><rect x="505" y="351" width="1" height="32" fill="#ff0000"/><rect x="507" y="357" width="1" height="22" fill="#ff0000"/><rect x="509" y="354" width="1" height="27" fill="#ff0000"/><rect x="511" y="365" width="1" height="23" fill="#ff0000"/><rect x="513" y="373" width="1" height="9" fill="#ff0000"/><rect x="515" y="371" width="1" height="24" fill="#ff0000"/><rect x="517" y="376" width="1" height="18" fill="#ff0000"/><rect x="519" y="373" width="1" height="15" fill="#0000ff"/><rect x="521" y="361" width="1" height="25" fill="#0000ff"/><rect x="523" y="375" width="1" height="15" fill="#0000ff"/><rect x="525" y="371" width="1" height="10" fill="#ff0000"/><rect x="527" y="363" width="1" height="26" fill="#ff0000"/><rect x="529" y="373" width="1" height="26" fill="#ff0000"/><rect x="531" y="374" width="1" height="41" fill="#ff0000"/><rect x="533" y="394" width="1" height="19" fill="#ff0000"/><rect x="535" y="386" width="1" height="28" fill="#ff0000"/><rect x="537" y="393" width="1" height="23" fill="#0000ff"/><rect x="539" y="392" width="1" height="28" fill="#0000ff"/><rect x="541" y="395" width="1" height="12" fill="#0000ff"/><rect x="543" y="379" width="1" height="25" fill="#0000ff"/><rect x="545" y="386" width="1" height="18" fill="#0000ff"/><rect x="547" y="384" width="1" height="7" fill="#0000ff"/><rect x="549" y="378" width="1" height="12" fill="#ff0000"/><rect x="551" y="380" width="1" height="10" fill="#ff0000"/><rect x="553" y="382" width="1" height="14" fill="#ff0000"/><rect x="555" y="378" width="1" height="16" fill="#ff0000"/><rect x="557" y="385" width="1" height="23" fill="#ff0000"/><rect x="559" y="390" width="1" height="20" fill="#ff0000"/><rect x="561" y="393" width="1" height="10" fill="#ff0000"/><rect x="563" y="390" width="1" height="21" fill="#ff0000"/><rect x="565" y="394" width="1" height="18" fill="#ff0000"/><rect x="567" y="395" width="1" height="14" fill="#ff0000"/><rect x="569" y="394" width="1" height="17" fill="#0000ff"/><rect x="571" y="401" width="1" height="9" fill="#0000ff"/><rect x="573" y="397" width="1" height="21" fill="#0000ff"/><rect x="575" y="400" width="1" height="5" fill="#0000ff"/><rect x="577" y="387" width="1" height="28" fill="#ff0000"/><rect x="579" y="394" width="1" height="37" fill="#ff0000"/><rect x="581" y="406" width="1" height="29" fill="#ff0000"/><rect x="583" y="410" width="1" height="17" fill="#ff0000"/><rect x="585" y="417" width="1" height="14" fill="#ff0000"/><rect x="587" y="424" width="1" height="19" fill="#ff0000"/><rect x="589" y="417" width="1" height="30" fill="#ff0000"/><rect x="591" y="421" width="1" height="30" fill="#ff0000"/><rect x="593" y="425" width="1" height="17" fill="#ff0000"/><rect x="595" y="437" width="1" height="9" fill="#0000ff"/><rect x="597" y="423" width="1" height="30" fill="#0000ff"/><rect x="599" y="425" width="1" height="20" fill="#0000ff"/><rect x="601" y="413" width="1" height="25" fill="#0000ff"/><rect x="603" y="418" width="1" height="14" fill="#ff0000"/><rect x="605" y="427" width="1" height="16" fill="#ff0000"/><rect x="607" y="428" width="1" height="4" fill="#ff0000"/><rect x="609" y="429" width="1" height="5" fill="#ff0000"/><rect x="611" y="429" width="1" height="3" fill="#0000ff"/><rect x="613" y="428" width="1" height="16" fill="#0000ff"/><rect x="615" y="423" width="1" height="9" fill="#0000ff"/><rect x="617" y="427" width="1" height="6" fill="#0000ff"/><rect x="619" y="418" width="1" height="13" fill="#0000ff"/><rect x="621" y="417" width="1" height="26" fill="#0000ff"/><rect x="623" y="414" width="1" height="15" fill="#0000ff"/><rect x="625" y="406" width="1" height="22" fill="#0000ff"/><rect x="627" y="405" width="1" height="24" fill="#0000ff"/><rect x="629" y="405" width="1" height="7" fill="#0000ff"/><rect x="631" y="405" width="1" height="7" fill="#ff0000"/><rect x="633" y="404" width="1" height="21" fill="#ff0000"/><rect x="635" y="403" width="1" height="28" fill="#ff0000"/><rect x="637" y="407" width="1" height="17" fill="#ff0000"/><rect x="639" y="414" width="1" height="19" fill="#0000ff"/><rect x="641" y="401" width="1" height="22" fill="#0000ff"/><rect x="643" y="395" width="1" height="35" fill="#0000ff"/><rect x="645" y="394" width="1" height="15" fill="#0000ff"/><rect x="647" y="370" width="1" height="31" fill="#0000ff"/><rect x="649" y="362" width="1" height="42" fill="#0000ff"/><rect x="651" y="357" width="1" height="38" fill="#0000ff"/><rect x="653" y="358" width="1" height="16" fill="#0000ff"/><rect x="655" y="356" width="1" height="10" fill="#0000ff"/><rect x="657" y="356" width="1" height="15" fill="#0000ff"/><rect x="659" y="342" width="1" height="18" fill="#0000ff"/><rect x="661" y="353" width="1" height="16" fill="#ff0000"/><rect x="663" y="354" width="1" height="23" fill="#ff0000"/><rect x="665" y="361" width="1" height="39" fill="#ff0000"/><rect x="667" y="370" width="1" height="26" fill="#ff0000"/><rect x="669" y="379" width="1" height="27" fill="#ff0000"/><rect x="671" y="387" width="1" height="21" fill="#ff0000"/><rect x="673" y="398" width="1" height="10" fill="#ff0000"/><rect x="675" y="386" width="1" height="24" fill="#0000ff"/><rect x="677" y="395" width="1" height="18" fill="#0000ff"/><rect x="679" y="392" width="1" height="12" fill="#0000ff"/><rect x="681" y="396" width="1" height="5" fill="#ff0000"/><rect x="683" y="393" width="1" height="23" fill="#ff0000"/><rect x="685" y="395" width="1" height="18" fill="#ff0000"/><rect x="687" y="393" width="1" height="10" fill="#ff0000"/><rect x="689" y="398" width="1" height="19" fill="#ff0000"/><rect x="691" y="400" width="1" height="10" fill="#0000ff"/><rect x="693" y="397" width="1" height="8" fill="#0000ff"/><rect x="695" y="398" width="1" height="8" fill="#0000ff"/><rect x="697" y="390" width="1" height="18" fill="#0000ff"/><rect x="699" y="389" width="1" height="25" fill="#0000ff"/><rect x="701" y="390" width="1" height="12" fill="#ff0000"/><rect x="703" y="387" width="1" height="21" fill="#ff0000"/><rect x="705" y="387" width="1" height="8" fill="#0000ff"/><rect x="707" y="382" width="1" height="12" fill="#0000ff"/><rect x="709" y="360" width="1" height="33" fill="#0000ff"/><rect x="711" y="349" width="1" height="42" fill="#0000ff"/><rect x="713" y="346" width="1" height="32" fill="#0000ff"/><rect x="715" y="341" width="1" height="14" fill="#0000ff"/><rect x="717" y="346" width="1" height="2" fill="#0000ff"/><rect x="719" y="339" width="1" height="11" fill="#0000ff"/><rect x="721" y="327" width="1" height="29" fill="#0000ff"/><rect x="723" y="326" width="1" height="21" fill="#0000ff"/><rect x="725" y="323" width="1" height="20" fill="#0000ff"/><rect x="727" y="332" width="1" height="11" fill="#0000ff"/><rect x="729" y="324" width="1" height="15" fill="#ff0000"/><rect x="731" y="335" width="1" height="9" fill="#ff0000"/><rect x="733" y="324" width="1" height="29" fill="#ff0000"/><rect x="735" y="334" width="1" height="26" fill="#ff0000"/><rect x="737" y="342" width="1" height="21" fill="#ff0000"/><rect x="739" y="353" width="1" height="8" fill="#ff0000"/><rect x="741" y="337" width="1" height="27" fill="#0000ff"/><rect x="743" y="339" width="1" height="24" fill="#0000ff"/><rect x="745" y="322" width="1" height="33" fill="#0000ff"/><rect x="747" y="323" width="1" height="22" fill="#0000ff"/><rect x="749" y="322" width="1" height="24" fill="#0000ff"/><rect x="751" y="318" width="1" height="11" fill="#0000ff"/><rect x="753" y="306" width="1" height="24" fill="#0000ff"/><rect x="755" y="311" width="1" height="14" fill="#0000ff"/><rect x="757" y="303" width="1" height="33" fill="#0000ff"/><rect x="759" y="282" width="1" height="38" fill="#0000ff"/><rect x="761" y="288" width="1" height="18" fill="#0000ff"/><rect x="763" y="294" width="1" height="19" fill="#ff0000"/><rect x="765" y="298" width="1" height="10" fill="#ff0000"/><rect x="767" y="295" width="1" height="20" fill="#ff0000"/><rect x="769" y="293" width="1" height="15" fill="#0000ff"/><rect x="771" y="259" width="1" height="49" fill="#0000ff"/><rect x="773" y="253" width="1" height="44" fill="#0000ff"/><rect x="775" y="246" width="1" height="36" fill="#0000ff"/><rect x="777" y="250" width="1" height="8" fill="#0000ff"/><rect x="779" y="233" width="1" height="21" fill="#0000ff"/><rect x="781" y="225" width="1" height="28" fill="#0000ff"/><rect x="783" y="234" width="1" height="25" fill="#0000ff"/><rect x="785" y="229" width="1" height="26" fill="#0000ff"/><rect x="787" y="230" width="1" height="8" fill="#0000ff"/><rect x="789" y="221" width="1" height="22" fill="#ff0000"/><rect x="791" y="229" width="1" height="12" fill="#ff0000"/><rect x="793" y="229" width="1" height="28" fill="#ff0000"/><rect x="795" y="233" width="1" height="28" fill="#ff0000"/><rect x="797" y="239" width="1" height="21" fill="#ff0000"/><rect x="799" y="237" width="1" height="26" fill="#ff0000"/><rect x="801" y="241" width="1" height="10" fill="#0000ff"/><rect x="803" y="232" width="1" height="30" fill="#ff0000"/><rect x="805" y="239" width="1" height="35" fill="#ff0000"/><rect x="807" y="250" width="1" height="13" fill="#ff0000"/><rect x="809" y="255" width="1" height="10" fill="#ff0000"/><rect x="811" y="260" width="1" height="17" fill="#ff0000"/><rect x="813" y="254" width="1" height="23" fill="#ff0000"/><rect x="815" y="261" width="1" height="12" fill="#ff0000"/><rect x="817" y="261" width="1" height="15" fill="#ff0000"/><rect x="819" y="259" width="1" height="24" fill="#0000ff"/><rect x="821" y="264" width="1" height="13" fill="#0000ff"/><rect x="823" y="251" width="1" height="23" fill="#0000ff"/><rect x="825" y="254" width="1" height="15" fill="#0000ff"/><rect x="827" y="254" width="1" height="11" fill="#0000ff"/><rect x="829" y="245" width="1" height="16" fill="#0000ff"/><rect x="831" y="254" width="1" height="9" fill="#ff0000"/><rect x="833" y="255" width="1" height="16" fill="#ff0000"/><rect x="835" y="258" width="1" height="17" fill="#ff0000"/><rect x="837" y="261" width="1" height="15" fill="#ff0000"/><rect x="839" y="265" width="1" height="18" fill="#ff0000"/><rect x="841" y="261" width="1" height="23" fill="#ff0000"/><rect x="843" y="277" width="1" height="5" fill="#ff0000"/><rect x="845" y="268" width="1" height="20" fill="#0000ff"/><rect x="847" y="275" width="1" height="7" fill="#0000ff"/><rect x="849" y="269" width="1" height="15" fill="#0000ff"/><rect x="851" y="259" width="1" height="20" fill="#0000ff"/><rect x="853" y="271" width="1" height="20" fill="#ff0000"/><rect x="855" y="272" width="1" height="9" fill="#ff0000"/><rect x="857" y="273" width="1" height="9" fill="#ff0000"/><rect x="859" y="278" width="1" height="5" fill="#ff0000"/><rect x="861" y="275" width="1" height="9" fill="#0000ff"/><rect x="863" y="259" width="1" height="30" fill="#0000ff"/><rect x="865" y="262" width="1" height="18" fill="#0000ff"/><rect x="867" y="264" width="1" height="13" fill="#0000ff"/><rect x="869" y="265" width="1" height="17" fill="#0000ff"/><rect x="871" y="258" width="1" height="12" fill="#0000ff"/><rect x="873" y="264" width="1" height="11" fill="#ff0000"/><rect x="875" y="266" width="1" height="27" fill="#ff0000"/><rect x="877" y="257" width="1" height="38" fill="#ff0000"/><rect x="879" y="276" width="1" height="38" fill="#ff0000"/><rect x="881" y="291" width="1" height="28" fill="#ff0000"/><rect x="883" y="292" width="1" height="19" fill="#ff0000"/><rect x="885" y="304" width="1" height="10" fill="#ff0000"/><rect x="887" y="297" width="1" height="19" fill="#ff0000"/><rect x="889" y="311" width="1" height="18" fill="#ff0000"/><rect x="891" y="308" width="1" height="22" fill="#ff0000"/><rect x="893" y="306" width="1" height="20" fill="#ff0000"/><rect x="895" y="317" width="1" height="16" fill="#ff0000"/><rect x="897" y="318" width="1" height="4" fill="#0000ff"/><rect x="899" y="301" width="1" height="22" fill="#0000ff"/><rect x="901" y="300" width="1" height="34" fill="#0000ff"/><rect x="903" y="272" width="1" height="46" fill="#0000ff"/><rect x="905" y="270" width="1" height="35" fill="#0000ff"/><rect x="907" y="284" width="1" height="15" fill="#0000ff"/><rect x="909" y="278" width="1" height="12" fill="#ff0000"/><rect x="911" y="279" width="1" height="22" fill="#ff0000"/><rect x="913" y="280" width="1" height="13" fill="#ff0000"/><rect x="915" y="289" width="1" height="5" fill="#0000ff"/><rect x="917" y="277" width="1" height="18" fill="#0000ff"/><rect x="919" y="287" width="1" height="14" fill="#0000ff"/><rect x="921" y="276" width="1" height="16" fill="#0000ff"/><rect x="923" y="284" width="1" height="7" fill="#0000ff"/><rect x="925" y="275" width="1" height="16" fill="#0000ff"/><rect x="927" y="277" width="1" height="19" fill="#0000ff"/><rect x="929" y="276" width="1" height="8" fill="#0000ff"/><rect x="931" y="274" width="1" height="11" fill="#ff0000"/><rect x="933" y="266" width="1" height="18" fill="#ff0000"/><rect x="935" y="268" width="1" height="16" fill="#ff0000"/><rect x="937" y="267" width="1" height="30" fill="#ff0000"/><rect x="939" y="280" width="1" height="3" fill="#ff0000"/><rect x="941" y="268" width="1" height="16" fill="#ff0000"/><rect x="943" y="278" width="1" height="17" fill="#ff0000"/><rect x="945" y="278" width="1" height="6" fill="#0000ff"/><rect x="947" y="270" width="1" height="18" fill="#0000ff"/><rect x="949" y="274" width="1" height="10" fill="#0000ff"/><rect x="951" y="260" width="1" height="32" fill="#0000ff"/><rect x="953" y="270" width="1" height="9" fill="#0000ff"/><rect x="955" y="270" width="1" height="7" fill="#0000ff"/><rect x="957" y="270" width="1" height="7" fill="#0000ff"/><rect x="959" y="265" width="1" height="8" fill="#0000ff"/><rect x="961" y="257" width="1" height="19" fill="#0000ff"/><rect x="963" y="233" width="1" height="49" fill="#0000ff"/><rect x="965" y="218" width="1" height="59" fill="#0000ff"/><rect x="967" y="229" width="1" height="7" fill="#ff0000"/><rect x="969" y="231" width="1" height="16" fill="#ff0000"/><rect x="971" y="232" width="1" height="26" fill="#ff0000"/><rect x="973" y="223" width="1" height="31" fill="#ff0000"/><rect x="975" y="231" width="1" height="20" fill="#0000ff"/><rect x="977" y="223" width="1" height="19" fill="#0000ff"/><rect x="979" y="217" width="1" height="30" fill="#0000ff"/><rect x="981" y="200" width="1" height="39" fill="#0000ff"/><rect x="983" y="208" width="1" height="18" fill="#0000ff"/><rect x="985" y="203" width="1" height="24" fill="#0000ff"/><rect x="987" y="187" width="1" height="38" fill="#0000ff"/><rect x="989" y="187" width="1" height="19" fill="#0000ff"/><rect x="991" y="172" width="1" height="30" fill="#0000ff"/><rect x="993" y="172" width="1" height="24" fill="#0000ff"/><rect x="995" y="182" width="1" height="7" fill="#0000ff"/><rect x="997" y="168" width="1" height="19" fill="#ff0000"/><rect x="999" y="172" width="1" height="14" fill="#0000ff"/><rect x="1001" y="167" width="1" height="24" fill="#0000ff"/><rect x="1003" y="150" width="1" height="27" fill="#0000ff"/><rect x="1005" y="155" width="1" height="24" fill="#0000ff"/><rect x="1007" y="135" width="1" height="33" fill="#0000ff"/><rect x="1009" y="119" width="1" height="44" fill="#0000ff"/><rect x="1011" y="105" width="1" height="46" fill="#0000ff"/><rect x="1013" y="107" width="1" height="26" fill="#0000ff"/><rect x="1015" y="107" width="1" height="11" fill="#0000ff"/><rect x="1017" y="108" width="1" height="5" fill="#0000ff"/><rect x="1019" y="107" width="1" height="8" fill="#ff0000"/><rect x="1021" y="105" width="1" height="19" fill="#ff0000"/><rect x="1023" y="102" width="1" height="20" fill="#ff0000"/><rect x="1025" y="106" width="1" height="16" fill="#ff0000"/><rect x="1027" y="109" width="1" height="14" fill="#ff0000"/><rect x="1029" y="104" width="1" height="28" fill="#ff0000"/><rect x="1031" y="112" width="1" height="16" fill="#ff0000"/><rect x="1033" y="122" width="1" height="13" fill="#ff0000"/><rect x="1035" y="123" width="1" height="10" fill="#ff0000"/><rect x="1037" y="117" width="1" height="14" fill="#ff0000"/><rect x="1039" y="126" width="1" height="9" fill="#0000ff"/><rect x="1041" y="122" width="1" height="10" fill="#0000ff"/><rect x="1043" y="122" width="1" height="15" fill="#0000ff"/><rect x="1045" y="111" width="1" height="29" fill="#ff0000"/><rect x="1047" y="123" width="1" height="19" fill="#ff0000"/><rect x="1049" y="122" width="1" height="23" fill="#ff0000"/><rect x="1051" y="118" width="1" height="30" fill="#ff0000"/><rect x="1053" y="136" width="1" height="14" fill="#ff0000"/><rect x="1055" y="142" width="1" height="21" fill="#ff0000"/><rect x="1057" y="133" width="1" height="56" fill="#ff0000"/><rect x="1059" y="160" width="1" height="32" fill="#ff0000"/><rect x="1061" y="180" width="1" height="23" fill="#ff0000"/><rect x="1063" y="177" width="1" height="23" fill="#0000ff"/><rect x="1065" y="182" width="1" height="7" fill="#0000ff"/><rect x="1067" y="170" width="1" height="27" fill="#ff0000"/><rect x="1069" y="185" width="1" height="20" fill="#ff0000"/><rect x="1071" y="186" width="1" height="40" fill="#ff0000"/><rect x="1073" y="201" width="1" height="18" fill="#ff0000"/><rect x="1075" y="204" width="1" height="21" fill="#ff0000"/><rect x="1077" y="209" width="1" height="9" fill="#0000ff"/><rect x="1079" y="200" width="1" height="24" fill="#ff0000"/><rect x="1081" y="211" width="1" height="13" fill="#ff0000"/><rect x="1083" y="216" width="1" height="16" fill="#ff0000"/><rect x="1085" y="220" width="1" height="8" fill="#0000ff"/><rect x="1087" y="220" width="1" height="17" fill="#0000ff"/><rect x="1089" y="213" width="1" height="10" fill="#0000ff"/><rect x="1091" y="215" width="1" height="12" fill="#ff0000"/><rect x="1093" y="207" width="1" height="32" fill="#ff0000"/><rect x="1095" y="224" width="1" height="15" fill="#ff0000"/><rect x="1097" y="224" width="1" height="17" fill="#ff0000"/><rect x="1099" y="229" width="1" height="13" fill="#ff0000"/><rect x="1101" y="220" width="1" height="18" fill="#0000ff"/><rect x="1103" y="213" width="1" height="24" fill="#0000ff"/><rect x="1105" y="219" width="1" height="13" fill="#0000ff"/><rect x="1107" y="205" width="1" height="32" fill="#0000ff"/><rect x="1109" y="209" width="1" height="13" fill="#0000ff"/><rect x="1111" y="201" width="1" height="18" fill="#0000ff"/><rect x="1113" y="203" width="1" height="10" fill="#0000ff"/><rect x="1115" y="192" width="1" height="18" fill="#0000ff"/><rect x="1117" y="185" width="1" height="27" fill="#0000ff"/><rect x="1119" y="184" width="1" height="24" fill="#0000ff"/><rect x="1121" y="185" width="1" height="25" fill="#0000ff"/><rect x="1123" y="186" width="1" height="12" fill="#0000ff"/><rect x="1125" y="169" width="1" height="37" fill="#0000ff"/><rect x="1127" y="172" width="1" height="22" fill="#0000ff"/><rect x="1129" y="181" width="1" height="9" fill="#ff0000"/><rect x="1131" y="164" width="1" height="59" fill="#ff0000"/><rect x="1133" y="186" width="1" height="44" fill="#ff0000"/><rect x="1135" y="204" width="1" height="52" fill="#ff0000"/><rect x="1137" y="216" width="1" height="36" fill="#ff0000"/><rect x="1139" y="238" width="1" height="20" fill="#0000ff"/><rect x="1141" y="226" width="1" height="35" fill="#0000ff"/><rect x="1143" y="218" width="1" height="24" fill="#0000ff"/><rect x="1145" y="219" width="1" height="13" fill="#0000ff"/><rect x="1147" y="213" width="1" height="13" fill="#ff0000"/><rect x="1149" y="221" width="1" height="4" fill="#ff0000"/><rect x="1151" y="220" width="1" height="5" fill="#ff0000"/><rect x="1153" y="219" width="1" height="5" fill="#ff0000"/><rect x="1155" y="215" width="1" height="13" fill="#ff0000"/><rect x="1157" y="215" width="1" height="24" fill="#ff0000"/><rect x="1159" y="224" width="1" height="20" fill="#ff0000"/><rect x="1161" y="224" width="1" height="20" fill="#ff0000"/><rect x="1163" y="225" width="1" height="9" fill="#ff0000"/><rect x="1165" y="215" width="1" height="26" fill="#ff0000"/><rect x="1167" y="221" width="1" height="44" fill="#ff0000"/><rect x="1169" y="238" width="1" height="20" fill="#ff0000"/><rect x="1171" y="238" width="1" height="21" fill="#ff0000"/><rect x="1173" y="249" width="1" height="15" fill="#0000ff"/><rect x="1175" y="251" width="1" height="18" fill="#ff0000"/><rect x="1177" y="239" width="1" height="34" fill="#ff0000"/><rect x="1179" y="251" width="1" height="23" fill="#ff0000"/><rect x="1181" y="251" width="1" height="39" fill="#ff0000"/><rect x="1183" y="263" width="1" height="17" fill="#ff0000"/><rect x="1185" y="272" width="1" height="18" fill="#ff0000"/><rect x="1187" y="277" width="1" height="15" fill="#ff0000"/><rect x="1189" y="283" width="1" height="18" fill="#ff0000"/><rect x="1191" y="280" width="1" height="22" fill="#0000ff"/><rect x="1193" y="282" width="1" height="17" fill="#0000ff"/><rect x="1195" y="278" width="1" height="10" fill="#0000ff"/><rect x="1197" y="277" width="1" height="9" fill="#0000ff"/><rect x="1199" y="270" width="1" height="14" fill="#0000ff"/><rect x="1201" y="264" width="1" height="17" fill="#0000ff"/><rect x="1203" y="259" width="1" height="24" fill="#0000ff"/><rect x="1205" y="255" width="1" height="21" fill="#0000ff"/><rect x="1207" y="259" width="1" height="17" fill="#ff0000"/><rect x="1209" y="258" width="1" height="10" fill="#ff0000"/><rect x="1211" y="257" width="1" height="14" fill="#ff0000"/><rect x="1213" y="256" width="1" height="21" fill="#0000ff"/><rect x="1215" y="254" width="1" height="20" fill="#0000ff"/><rect x="1217" y="253" width="1" height="25" fill="#0000ff"/><rect x="1219" y="252" width="1" height="13" fill="#0000ff"/><rect x="1221" y="252" width="1" height="14" fill="#ff0000"/><rect x="1223" y="252" width="1" height="11" fill="#ff0000"/><rect x="1225" y="246" width="1" height="36" fill="#ff0000"/><rect x="4" y="504" width="2" height="7" fill="#00ffff"/><rect x="6" y="500" width="2" height="11" fill="#00ffff"/><rect x="8" y="496" width="2" height="10" fill="#00ffff"/><rect x="10" y="486" width="2" height="16" fill="#00ffff"/><rect x="12" y="476" width="2" height="22" fill="#00ffff"/><rect x="14" y="467" width="2" height="21" fill="#00ffff"/><rect x="16" y="463" width="2" height="16" fill="#00ffff"/><rect x="18" y="466" width="2" height="3" fill="#00ffff"/><rect x="20" y="463" width="2" height="8" fill="#ffff00"/><rect x="22" y="466" width="2" height="12" fill="#ffff00"/><rect x="24" y="469" width="2" height="15" fill="#ffff00"/><rect x="26" y="475" width="2" height="16" fill="#ffff00"/><rect x="28" y="482" width="2" height="8" fill="#ffff00"/><rect x="30" y="486" width="2" height="5" fill="#00ffff"/><rect x="32" y="482" width="2" height="8" fill="#00ffff"/><rect x="34" y="477" width="2" height="11" fill="#00ffff"/><rect x="36" y="471" width="2" height="14" fill="#00ffff"/><rect x="38" y="466" width="2" height="13" fill="#00ffff"/><rect x="40" y="459" width="2" height="15" fill="#00ffff"/><rect x="42" y="453" width="2" height="15" fill="#00ffff"/><rect x="44" y="447" width="2" height="15" fill="#00ffff"/><rect x="46" y="444" width="2" height="12" fill="#00ffff"/><rect x="48" y="447" width="2" height="3" fill="#ffff00"/><rect x="50" y="444" width="2" height="9" fill="#ffff00"/><rect x="52" y="447" width="2" height="13" fill="#ffff00"/><rect x="54" y="451" width="2" height="17" fill="#ffff00"/><rect x="56" y="458" width="2" height="16" fill="#ffff00"/><rect x="58" y="465" width="2" height="14" fill="#ffff00"/><rect x="60" y="471" width="2" height="12" fill="#ffff00"/><rect x="62" y="476" width="2" height="8" fill="#ffff00"/><rect x="64" y="480" width="2" height="3" fill="#00ffff"/><rect x="66" y="478" width="2" height="6" fill="#00ffff"/><rect x="68" y="477" width="2" height="5" fill="#00ffff"/><rect x="70" y="471" width="2" height="10" fill="#00ffff"/><rect x="72" y="466" width="2" height="13" fill="#00ffff"/><rect x="74" y="460" width="2" height="14" fill="#00ffff"/><rect x="76" y="455" width="2" height="13" fill="#00ffff"/><rect x="78" y="449" width="2" height="14" fill="#00ffff"/><rect x="80" y="446" width="2" height="11" fill="#00ffff"/><rect x="82" y="443" width="2" height="9" fill="#00ffff"/><rect x="84" y="440" width="2" height="8" fill="#00ffff"/><rect x="86" y="437" width="2" height="8" fill="#00ffff"/><rect x="88" y="437" width="2" height="5" fill="#00ffff"/><rect x="90" y="437" width="2" height="4" fill="#ffff00"/><rect x="92" y="437" width="2" height="4" fill="#ffff00"/><rect x="94" y="439" width="2" height="3" fill="#00ffff"/><rect x="96" y="439" width="2" height="3" fill="#ffff00"/><rect x="98" y="439" width="2" height="6" fill="#ffff00"/><rect x="100" y="440" width="2" height="7" fill="#ffff00"/><rect x="102" y="442" width="2" height="7" fill="#ffff00"/><rect x="104" y="444" width="2" height="3" fill="#00ffff"/><rect x="106" y="437" width="2" height="12" fill="#00ffff"/><rect x="108" y="430" width="2" height="17" fill="#00ffff"/><rect x="110" y="424" width="2" height="16" fill="#00ffff"/><rect x="112" y="418" width="2" height="15" fill="#00ffff"/><rect x="114" y="412" width="2" height="14" fill="#00ffff"/><rect x="116" y="411" width="2" height="9" fill="#00ffff"/><rect x="118" y="412" width="2" height="6" fill="#ffff00"/><rect x="120" y="411" width="2" height="13" fill="#ffff00"/><rect x="122" y="416" width="2" height="13" fill="#ffff00"/><rect x="124" y="421" width="2" height="17" fill="#ffff00"/><rect x="126" y="427" width="2" height="20" fill="#ffff00"/><rect x="128" y="435" width="2" height="20" fill="#ffff00"/><rect x="130" y="444" width="2" height="7" fill="#ffff00"/><rect x="132" y="440" width="2" height="15" fill="#00ffff"/><rect x="134" y="427" width="2" height="24" fill="#00ffff"/><rect x="136" y="415" width="2" height="27" fill="#00ffff"/><rect x="138" y="403" width="2" height="27" fill="#00ffff"/><rect x="140" y="389" width="2" height="28" fill="#00ffff"/><rect x="142" y="380" width="2" height="25" fill="#00ffff"/><rect x="144" y="375" width="2" height="17" fill="#00ffff"/><rect x="146" y="373" width="2" height="10" fill="#00ffff"/><rect x="148" y="372" width="2" height="5" fill="#00ffff"/><rect x="150" y="371" width="2" height="5" fill="#00ffff"/><rect x="152" y="372" width="2" height="3" fill="#ffff00"/><rect x="154" y="371" width="2" height="7" fill="#ffff00"/><rect x="156" y="372" width="2" height="8" fill="#ffff00"/><rect x="158" y="375" width="2" height="8" fill="#ffff00"/><rect x="160" y="378" width="2" height="7" fill="#ffff00"/><rect x="162" y="381" width="2" height="6" fill="#ffff00"/><rect x="164" y="383" width="2" height="5" fill="#ffff00"/><rect x="166" y="384" width="2" height="5" fill="#ffff00"/><rect x="168" y="385" width="2" height="5" fill="#ffff00"/><rect x="170" y="387" width="2" height="5" fill="#ffff00"/><rect x="172" y="388" width="2" height="5" fill="#ffff00"/><rect x="174" y="389" width="2" height="6" fill="#ffff00"/><rect x="176" y="391" width="2" height="6" fill="#ffff00"/><rect x="178" y="392" width="2" height="7" fill="#ffff00"/><rect x="180" y="395" width="2" height="7" fill="#ffff00"/><rect x="182" y="397" width="2" height="6" fill="#ffff00"/><rect x="184" y="399" width="2" height="4" fill="#ffff00"/><rect x="186" y="400" width="2" height="4" fill="#ffff00"/><rect x="188" y="401" width="2" height="3" fill="#ffff00"/><rect x="190" y="401" width="2" height="7" fill="#ffff00"/><rect x="192" y="402" width="2" height="11" fill="#ffff00"/><rect x="194" y="406" width="2" height="13" fill="#ffff00"/><rect x="196" y="410" width="2" height="10" fill="#ffff00"/><rect x="198" y="414" width="2" height="5" fill="#00ffff"/><rect x="200" y="409" width="2" height="11" fill="#00ffff"/><rect x="202" y="404" width="2" height="12" fill="#00ffff"/><rect x="204" y="401" width="2" height="10" fill="#00ffff"/><rect x="206" y="401" width="2" height="5" fill="#00ffff"/><rect x="208" y="400" width="2" height="4" fill="#00ffff"/><rect x="210" y="399" width="2" height="4" fill="#00ffff"/><rect x="212" y="397" width="2" height="5" fill="#00ffff"/><rect x="214" y="394" width="2" height="7" fill="#00ffff"/><rect x="216" y="388" width="2" height="12" fill="#00ffff"/><rect x="218" y="383" width="2" height="13" fill="#00ffff"/><rect x="220" y="378" width="2" height="13" fill="#00ffff"/><rect x="222" y="374" width="2" height="11" fill="#00ffff"/><rect x="224" y="370" width="2" height="10" fill="#00ffff"/><rect x="226" y="365" width="2" height="11" fill="#00ffff"/><rect x="228" y="362" width="2" height="10" fill="#00ffff"/><rect x="230" y="359" width="2" height="9" fill="#00ffff"/><rect x="232" y="357" width="2" height="8" fill="#00ffff"/><rect x="234" y="357" width="2" height="5" fill="#00ffff"/><rect x="236" y="357" width="2" height="3" fill="#00ffff"/><rect x="238" y="357" width="2" height="8" fill="#ffff00"/><rect x="240" y="357" width="2" height="14" fill="#ffff00"/><rect x="242" y="362" width="2" height="27" fill="#ffff00"/><rect x="244" y="369" width="2" height="31" fill="#ffff00"/><rect x="246" y="387" width="2" height="19" fill="#ffff00"/><rect x="248" y="398" width="2" height="12" fill="#ffff00"/><rect x="250" y="403" width="2" height="9" fill="#ffff00"/><rect x="252" y="407" width="2" height="8" fill="#ffff00"/><rect x="254" y="410" width="2" height="10" fill="#ffff00"/><rect x="256" y="412" width="2" height="9" fill="#ffff00"/><rect x="258" y="412" width="2" height="8" fill="#00ffff"/><rect x="260" y="406" width="2" height="15" fill="#00ffff"/><rect x="262" y="402" width="2" height="13" fill="#00ffff"/><rect x="264" y="401" width="2" height="8" fill="#00ffff"/><rect x="266" y="400" width="2" height="4" fill="#00ffff"/><rect x="268" y="399" width="2" height="4" fill="#00ffff"/><rect x="270" y="398" width="2" height="4" fill="#00ffff"/><rect x="272" y="397" width="2" height="4" fill="#00ffff"/><rect x="274" y="396" width="2" height="4" fill="#00ffff"/><rect x="276" y="396" width="2" height="4" fill="#00ffff"/><rect x="278" y="395" width="2" height="4" fill="#00ffff"/><rect x="280" y="394" width="2" height="4" fill="#00ffff"/><rect x="282" y="393" width="2" height="4" fill="#00ffff"/><rect x="284" y="392" width="2" height="4" fill="#00ffff"/><rect x="286" y="392" width="2" height="3" fill="#00ffff"/><rect x="288" y="392" width="2" height="3" fill="#00ffff"/><rect x="290" y="391" width="2" height="3" fill="#00ffff"/><rect x="292" y="392" width="2" height="4" fill="#ffff00"/><rect x="294" y="391" width="2" height="8" fill="#ffff00"/><rect x="296" y="393" width="2" height="10" fill="#ffff00"/><rect x="298" y="397" width="2" height="10" fill="#ffff00"/><rect x="300" y="400" width="2" height="3" fill="#00ffff"/><rect x="302" y="395" width="2" height="12" fill="#00ffff"/><rect x="304" y="394" width="2" height="9" fill="#00ffff"/><rect x="306" y="394" width="2" height="4" fill="#00ffff"/><rect x="308" y="393" width="2" height="4" fill="#00ffff"/><rect x="310" y="391" width="2" height="5" fill="#00ffff"/><rect x="312" y="389" width="2" height="6" fill="#00ffff"/><rect x="314" y="384" width="2" height="10" fill="#00ffff"/><rect x="316" y="378" width="2" height="14" fill="#00ffff"/><rect x="318" y="372" width="2" height="15" fill="#00ffff"/><rect x="320" y="375" width="2" height="6" fill="#00ffff"/><rect x="322" y="372" width="2" height="8" fill="#ffff00"/><rect x="324" y="375" width="2" height="18" fill="#ffff00"/><rect x="326" y="378" width="2" height="25" fill="#ffff00"/><rect x="328" y="390" width="2" height="17" fill="#ffff00"/><rect x="330" y="401" width="2" height="5" fill="#ffff00"/><rect x="332" y="400" width="2" height="7" fill="#00ffff"/><rect x="334" y="392" width="2" height="14" fill="#00ffff"/><rect x="336" y="382" width="2" height="21" fill="#00ffff"/><rect x="338" y="381" width="2" height="14" fill="#00ffff"/><rect x="340" y="380" width="2" height="5" fill="#00ffff"/><rect x="342" y="381" width="2" height="3" fill="#00ffff"/><rect x="344" y="380" width="2" height="4" fill="#ffff00"/><rect x="346" y="381" width="2" height="3" fill="#ffff00"/><rect x="348" y="381" width="2" height="3" fill="#00ffff"/><rect x="350" y="377" width="2" height="7" fill="#00ffff"/><rect x="352" y="373" width="2" height="11" fill="#00ffff"/><rect x="354" y="373" width="2" height="7" fill="#00ffff"/><rect x="356" y="373" width="2" height="5" fill="#ffff00"/><rect x="358" y="373" width="2" height="7" fill="#ffff00"/><rect x="360" y="363" width="2" height="15" fill="#00ffff"/><rect x="362" y="348" width="2" height="32" fill="#00ffff"/><rect x="364" y="341" width="2" height="24" fill="#00ffff"/><rect x="366" y="344" width="2" height="7" fill="#00ffff"/><rect x="368" y="341" width="2" height="8" fill="#ffff00"/><rect x="370" y="344" width="2" height="8" fill="#ffff00"/><rect x="372" y="346" width="2" height="11" fill="#ffff00"/><rect x="374" y="350" width="2" height="14" fill="#ffff00"/><rect x="376" y="354" width="2" height="16" fill="#ffff00"/><rect x="378" y="361" width="2" height="11" fill="#ffff00"/><rect x="380" y="368" width="2" height="6" fill="#ffff00"/><rect x="382" y="370" width="2" height="8" fill="#ffff00"/><rect x="384" y="372" width="2" height="10" fill="#ffff00"/><rect x="386" y="376" width="2" height="6" fill="#ffff00"/><rect x="388" y="379" width="2" height="3" fill="#00ffff"/><rect x="390" y="376" width="2" height="6" fill="#00ffff"/><rect x="392" y="373" width="2" height="9" fill="#00ffff"/><rect x="394" y="369" width="2" height="10" fill="#00ffff"/><rect x="396" y="363" width="2" height="12" fill="#00ffff"/><rect x="398" y="355" width="2" height="16" fill="#00ffff"/><rect x="400" y="347" width="2" height="18" fill="#00ffff"/><rect x="402" y="338" width="2" height="19" fill="#00ffff"/><rect x="404" y="339" width="2" height="10" fill="#00ffff"/><rect x="406" y="338" width="2" height="3" fill="#ffff00"/><rect x="408" y="338" width="2" height="3" fill="#00ffff"/><rect x="410" y="336" width="2" height="5" fill="#00ffff"/><rect x="412" y="334" width="2" height="7" fill="#00ffff"/><rect x="414" y="332" width="2" height="7" fill="#00ffff"/><rect x="416" y="328" width="2" height="9" fill="#00ffff"/><rect x="418" y="325" width="2" height="9" fill="#00ffff"/><rect x="420" y="320" width="2" height="11" fill="#00ffff"/><rect x="422" y="315" width="2" height="13" fill="#00ffff"/><rect x="424" y="312" width="2" height="11" fill="#00ffff"/><rect x="426" y="311" width="2" height="7" fill="#00ffff"/><rect x="428" y="309" width="2" height="5" fill="#00ffff"/><rect x="430" y="308" width="2" height="5" fill="#00ffff"/><rect x="432" y="308" width="2" height="3" fill="#00ffff"/><rect x="434" y="308" width="2" height="5" fill="#ffff00"/><rect x="436" y="308" width="2" height="9" fill="#ffff00"/><rect x="438" y="310" width="2" height="10" fill="#ffff00"/><rect x="440" y="314" width="2" height="8" fill="#ffff00"/><rect x="442" y="318" width="2" height="7" fill="#ffff00"/><rect x="444" y="320" width="2" height="5" fill="#ffff00"/><rect x="446" y="321" width="2" height="4" fill="#00ffff"/><rect x="448" y="319" width="2" height="6" fill="#00ffff"/><rect x="450" y="317" width="2" height="6" fill="#00ffff"/><rect x="452" y="315" width="2" height="6" fill="#00ffff"/><rect x="454" y="313" width="2" height="6" fill="#00ffff"/><rect x="456" y="310" width="2" height="8" fill="#00ffff"/><rect x="458" y="311" width="2" height="5" fill="#00ffff"/><rect x="460" y="310" width="2" height="7" fill="#ffff00"/><rect x="462" y="311" width="2" height="9" fill="#ffff00"/><rect x="464" y="315" width="2" height="9" fill="#ffff00"/><rect x="466" y="318" width="2" height="12" fill="#ffff00"/><rect x="468" y="321" width="2" height="19" fill="#ffff00"/><rect x="470" y="328" width="2" height="24" fill="#ffff00"/><rect x="472" y="337" width="2" height="22" fill="#ffff00"/><rect x="474" y="350" width="2" height="11" fill="#ffff00"/><rect x="476" y="357" width="2" height="7" fill="#ffff00"/><rect x="478" y="358" width="2" height="12" fill="#ffff00"/><rect x="480" y="361" width="2" height="16" fill="#ffff00"/><rect x="482" y="368" width="2" height="15" fill="#ffff00"/><rect x="484" y="374" width="2" height="14" fill="#ffff00"/><rect x="486" y="380" width="2" height="6" fill="#ffff00"/><rect x="488" y="382" width="2" height="6" fill="#00ffff"/><rect x="490" y="375" width="2" height="11" fill="#00ffff"/><rect x="492" y="367" width="2" height="18" fill="#00ffff"/><rect x="494" y="362" width="2" height="15" fill="#00ffff"/><rect x="496" y="357" width="2" height="13" fill="#00ffff"/><rect x="498" y="357" width="2" height="7" fill="#00ffff"/><rect x="500" y="357" width="2" height="3" fill="#ffff00"/><rect x="502" y="357" width="2" height="7" fill="#ffff00"/><rect x="504" y="358" width="2" height="11" fill="#ffff00"/><rect x="506" y="362" width="2" height="11" fill="#ffff00"/><rect x="508" y="366" width="2" height="9" fill="#ffff00"/><rect x="510" y="371" width="2" height="6" fill="#ffff00"/><rect x="512" y="373" width="2" height="7" fill="#ffff00"/><rect x="514" y="374" width="2" height="11" fill="#ffff00"/><rect x="516" y="377" width="2" height="9" fill="#ffff00"/><rect x="518" y="377" width="2" height="8" fill="#00ffff"/><rect x="520" y="373" width="2" height="13" fill="#00ffff"/><rect x="522" y="375" width="2" height="5" fill="#00ffff"/><rect x="524" y="373" width="2" height="8" fill="#ffff00"/><rect x="526" y="375" width="2" height="13" fill="#ffff00"/><rect x="528" y="378" width="2" height="18" fill="#ffff00"/><rect x="530" y="386" width="2" height="15" fill="#ffff00"/><rect x="532" y="394" width="2" height="11" fill="#ffff00"/><rect x="534" y="398" width="2" height="9" fill="#ffff00"/><rect x="536" y="403" width="2" height="3" fill="#00ffff"/><rect x="538" y="401" width="2" height="6" fill="#00ffff"/><rect x="540" y="395" width="2" height="10" fill="#00ffff"/><rect x="542" y="388" width="2" height="15" fill="#00ffff"/><rect x="544" y="386" width="2" height="11" fill="#00ffff"/><rect x="546" y="386" width="2" height="4" fill="#00ffff"/><rect x="548" y="386" width="2" height="3" fill="#ffff00"/><rect x="550" y="386" width="2" height="4" fill="#ffff00"/><rect x="552" y="386" width="2" height="6" fill="#ffff00"/><rect x="554" y="388" width="2" height="6" fill="#ffff00"/><rect x="556" y="390" width="2" height="5" fill="#ffff00"/><rect x="558" y="392" width="2" height="6" fill="#ffff00"/><rect x="560" y="393" width="2" height="10" fill="#ffff00"/><rect x="562" y="395" width="2" height="12" fill="#ffff00"/><rect x="564" y="400" width="2" height="11" fill="#ffff00"/><rect x="566" y="405" width="2" height="3" fill="#ffff00"/><rect x="568" y="403" width="2" height="8" fill="#00ffff"/><rect x="570" y="401" width="2" height="7" fill="#00ffff"/><rect x="572" y="398" width="2" height="8" fill="#00ffff"/><rect x="574" y="400" width="2" height="3" fill="#00ffff"/><rect x="576" y="398" width="2" height="12" fill="#ffff00"/><rect x="578" y="400" width="2" height="17" fill="#ffff00"/><rect x="580" y="408" width="2" height="14" fill="#ffff00"/><rect x="582" y="414" width="2" height="12" fill="#ffff00"/><rect x="584" y="419" width="2" height="11" fill="#ffff00"/><rect x="586" y="424" width="2" height="10" fill="#ffff00"/><rect x="588" y="428" width="2" height="9" fill="#ffff00"/><rect x="590" y="431" width="2" height="10" fill="#ffff00"/><rect x="592" y="435" width="2" height="7" fill="#ffff00"/><rect x="594" y="437" width="2" height="4" fill="#00ffff"/><rect x="596" y="433" width="2" height="9" fill="#00ffff"/><rect x="598" y="427" width="2" height="13" fill="#00ffff"/><rect x="600" y="427" width="2" height="9" fill="#00ffff"/><rect x="602" y="427" width="2" height="3" fill="#ffff00"/><rect x="604" y="427" width="2" height="4" fill="#ffff00"/><rect x="606" y="428" width="2" height="4" fill="#ffff00"/><rect x="608" y="429" width="2" height="3" fill="#ffff00"/><rect x="610" y="429" width="2" height="3" fill="#00ffff"/><rect x="612" y="429" width="2" height="3" fill="#00ffff"/><rect x="614" y="428" width="2" height="4" fill="#00ffff"/><rect x="616" y="427" width="2" height="4" fill="#00ffff"/><rect x="618" y="426" width="2" height="4" fill="#00ffff"/><rect x="620" y="422" width="2" height="8" fill="#00ffff"/><rect x="622" y="415" width="2" height="14" fill="#00ffff"/><rect x="624" y="408" width="2" height="17" fill="#00ffff"/><rect x="626" y="406" width="2" height="12" fill="#00ffff"/><rect x="628" y="405" width="2" height="6" fill="#00ffff"/><rect x="630" y="406" width="2" height="4" fill="#ffff00"/><rect x="632" y="405" width="2" height="8" fill="#ffff00"/><rect x="634" y="407" width="2" height="14" fill="#ffff00"/><rect x="636" y="410" width="2" height="13" fill="#ffff00"/><rect x="638" y="416" width="2" height="5" fill="#00ffff"/><rect x="640" y="403" width="2" height="20" fill="#00ffff"/><rect x="642" y="396" width="2" height="22" fill="#00ffff"/><rect x="644" y="395" width="2" height="11" fill="#00ffff"/><rect x="646" y="383" width="2" height="15" fill="#00ffff"/><rect x="648" y="370" width="2" height="27" fill="#00ffff"/><rect x="650" y="363" width="2" height="23" fill="#00ffff"/><rect x="652" y="358" width="2" height="15" fill="#00ffff"/><rect x="654" y="356" width="2" height="10" fill="#00ffff"/><rect x="656" y="356" width="2" height="5" fill="#00ffff"/><rect x="658" y="356" width="2" height="3" fill="#00ffff"/><rect x="660" y="356" width="2" height="10" fill="#ffff00"/><rect x="662" y="356" width="2" height="19" fill="#ffff00"/><rect x="664" y="363" width="2" height="23" fill="#ffff00"/><rect x="666" y="373" width="2" height="20" fill="#ffff00"/><rect x="668" y="384" width="2" height="16" fill="#ffff00"/><rect x="670" y="391" width="2" height="17" fill="#ffff00"/><rect x="672" y="398" width="2" height="10" fill="#ffff00"/><rect x="674" y="399" width="2" height="9" fill="#00ffff"/><rect x="676" y="397" width="2" height="11" fill="#00ffff"/><rect x="678" y="394" width="2" height="7" fill="#00ffff"/><rect x="680" y="397" width="2" height="3" fill="#ffff00"/><rect x="682" y="394" width="2" height="8" fill="#ffff00"/><rect x="684" y="397" width="2" height="6" fill="#ffff00"/><rect x="686" y="400" width="2" height="3" fill="#ffff00"/><rect x="688" y="400" width="2" height="3" fill="#ffff00"/><rect x="690" y="400" width="2" height="3" fill="#00ffff"/><rect x="692" y="399" width="2" height="4" fill="#00ffff"/><rect x="694" y="398" width="2" height="4" fill="#00ffff"/><rect x="696" y="391" width="2" height="11" fill="#00ffff"/><rect x="698" y="389" width="2" height="11" fill="#00ffff"/><rect x="700" y="391" width="2" height="3" fill="#ffff00"/><rect x="702" y="389" width="2" height="5" fill="#ffff00"/><rect x="704" y="389" width="2" height="5" fill="#00ffff"/><rect x="706" y="385" width="2" height="9" fill="#00ffff"/><rect x="708" y="372" width="2" height="20" fill="#00ffff"/><rect x="710" y="351" width="2" height="36" fill="#00ffff"/><rect x="712" y="346" width="2" height="29" fill="#00ffff"/><rect x="714" y="346" width="2" height="8" fill="#00ffff"/><rect x="716" y="346" width="2" height="3" fill="#00ffff"/><rect x="718" y="342" width="2" height="6" fill="#00ffff"/><rect x="720" y="339" width="2" height="9" fill="#00ffff"/><rect x="722" y="337" width="2" height="8" fill="#00ffff"/><rect x="724" y="337" width="2" height="5" fill="#00ffff"/><rect x="726" y="336" width="2" height="4" fill="#00ffff"/><rect x="728" y="337" width="2" height="3" fill="#ffff00"/><rect x="730" y="336" width="2" height="7" fill="#ffff00"/><rect x="732" y="337" width="2" height="10" fill="#ffff00"/><rect x="734" y="341" width="2" height="16" fill="#ffff00"/><rect x="736" y="345" width="2" height="16" fill="#ffff00"/><rect x="738" y="355" width="2" height="4" fill="#ffff00"/><rect x="740" y="351" width="2" height="10" fill="#00ffff"/><rect x="742" y="341" width="2" height="18" fill="#00ffff"/><rect x="744" y="333" width="2" height="20" fill="#00ffff"/><rect x="746" y="327" width="2" height="16" fill="#00ffff"/><rect x="748" y="322" width="2" height="13" fill="#00ffff"/><rect x="750" y="321" width="2" height="8" fill="#00ffff"/><rect x="752" y="320" width="2" height="5" fill="#00ffff"/><rect x="754" y="313" width="2" height="11" fill="#00ffff"/><rect x="756" y="303" width="2" height="19" fill="#00ffff"/><rect x="758" y="295" width="2" height="21" fill="#00ffff"/><rect x="760" y="299" width="2" height="7" fill="#00ffff"/><rect x="762" y="295" width="2" height="9" fill="#ffff00"/><rect x="764" y="299" width="2" height="7" fill="#ffff00"/><rect x="766" y="302" width="2" height="4" fill="#ffff00"/><rect x="768" y="294" width="2" height="12" fill="#00ffff"/><rect x="770" y="270" width="2" height="36" fill="#00ffff"/><rect x="772" y="255" width="2" height="42" fill="#00ffff"/><rect x="774" y="251" width="2" height="21" fill="#00ffff"/><rect x="776" y="250" width="2" height="7" fill="#00ffff"/><rect x="778" y="245" width="2" height="9" fill="#00ffff"/><rect x="780" y="239" width="2" height="14" fill="#00ffff"/><rect x="782" y="236" width="2" height="11" fill="#00ffff"/><rect x="784" y="235" width="2" height="6" fill="#00ffff"/><rect x="786" y="235" width="2" height="3" fill="#00ffff"/><rect x="788" y="235" width="2" height="4" fill="#ffff00"/><rect x="790" y="235" width="2" height="5" fill="#ffff00"/><rect x="792" y="236" width="2" height="7" fill="#ffff00"/><rect x="794" y="237" width="2" height="11" fill="#ffff00"/><rect x="796" y="240" width="2" height="10" fill="#ffff00"/><rect x="798" y="246" width="2" height="3" fill="#ffff00"/><rect x="800" y="248" width="2" height="3" fill="#00ffff"/><rect x="802" y="246" width="2" height="7" fill="#ffff00"/><rect x="804" y="248" width="2" height="12" fill="#ffff00"/><rect x="806" y="251" width="2" height="12" fill="#ffff00"/><rect x="808" y="257" width="2" height="6" fill="#ffff00"/><rect x="810" y="260" width="2" height="4" fill="#ffff00"/><rect x="812" y="261" width="2" height="3" fill="#ffff00"/><rect x="814" y="261" width="2" height="11" fill="#ffff00"/><rect x="816" y="262" width="2" height="13" fill="#ffff00"/><rect x="818" y="268" width="2" height="4" fill="#00ffff"/><rect x="820" y="264" width="2" height="11" fill="#00ffff"/><rect x="822" y="261" width="2" height="9" fill="#00ffff"/><rect x="824" y="259" width="2" height="8" fill="#00ffff"/><rect x="826" y="256" width="2" height="8" fill="#00ffff"/><rect x="828" y="256" width="2" height="5" fill="#00ffff"/><rect x="830" y="256" width="2" height="6" fill="#ffff00"/><rect x="832" y="256" width="2" height="9" fill="#ffff00"/><rect x="834" y="260" width="2" height="11" fill="#ffff00"/><rect x="836" y="263" width="2" height="13" fill="#ffff00"/><rect x="838" y="268" width="2" height="12" fill="#ffff00"/><rect x="840" y="274" width="2" height="8" fill="#ffff00"/><rect x="842" y="277" width="2" height="5" fill="#ffff00"/><rect x="844" y="279" width="2" height="3" fill="#00ffff"/><rect x="846" y="276" width="2" height="6" fill="#00ffff"/><rect x="848" y="273" width="2" height="9" fill="#00ffff"/><rect x="850" y="273" width="2" height="6" fill="#00ffff"/><rect x="852" y="273" width="2" height="5" fill="#ffff00"/><rect x="854" y="273" width="2" height="7" fill="#ffff00"/><rect x="856" y="275" width="2" height="7" fill="#ffff00"/><rect x="858" y="278" width="2" height="4" fill="#ffff00"/><rect x="860" y="276" width="2" height="6" fill="#00ffff"/><rect x="862" y="273" width="2" height="9" fill="#00ffff"/><rect x="864" y="270" width="2" height="9" fill="#00ffff"/><rect x="866" y="268" width="2" height="7" fill="#00ffff"/><rect x="868" y="266" width="2" height="7" fill="#00ffff"/><rect x="870" y="266" width="2" height="4" fill="#00ffff"/><rect x="872" y="266" width="2" height="6" fill="#ffff00"/><rect x="874" y="266" width="2" height="14" fill="#ffff00"/><rect x="876" y="269" width="2" height="26" fill="#ffff00"/><rect x="878" y="277" width="2" height="29" fill="#ffff00"/><rect x="880" y="292" width="2" height="16" fill="#ffff00"/><rect x="882" y="304" width="2" height="7" fill="#ffff00"/><rect x="884" y="306" width="2" height="7" fill="#ffff00"/><rect x="886" y="308" width="2" height="8" fill="#ffff00"/><rect x="888" y="311" width="2" height="7" fill="#ffff00"/><rect x="890" y="313" width="2" height="7" fill="#ffff00"/><rect x="892" y="316" width="2" height="5" fill="#ffff00"/><rect x="894" y="317" width="2" height="5" fill="#ffff00"/><rect x="896" y="318" width="2" height="3" fill="#00ffff"/><rect x="898" y="314" width="2" height="8" fill="#00ffff"/><rect x="900" y="301" width="2" height="20" fill="#00ffff"/><rect x="902" y="285" width="2" height="31" fill="#00ffff"/><rect x="904" y="283" width="2" height="20" fill="#00ffff"/><rect x="906" y="284" width="2" height="4" fill="#00ffff"/><rect x="908" y="283" width="2" height="7" fill="#ffff00"/><rect x="910" y="284" width="2" height="9" fill="#ffff00"/><rect x="912" y="288" width="2" height="4" fill="#ffff00"/><rect x="914" y="289" width="2" height="4" fill="#00ffff"/><rect x="916" y="288" width="2" height="4" fill="#00ffff"/><rect x="918" y="288" width="2" height="4" fill="#00ffff"/><rect x="920" y="287" width="2" height="4" fill="#00ffff"/><rect x="922" y="284" width="2" height="6" fill="#00ffff"/><rect x="924" y="280" width="2" height="9" fill="#00ffff"/><rect x="926" y="277" width="2" height="10" fill="#00ffff"/><rect x="928" y="278" width="2" height="4" fill="#00ffff"/><rect x="930" y="277" width="2" height="5" fill="#ffff00"/><rect x="932" y="278" width="2" height="4" fill="#ffff00"/><rect x="934" y="279" width="2" height="3" fill="#ffff00"/><rect x="936" y="280" width="2" height="3" fill="#ffff00"/><rect x="938" y="280" width="2" height="3" fill="#ffff00"/><rect x="940" y="281" width="2" height="3" fill="#ffff00"/><rect x="942" y="281" width="2" height="5" fill="#ffff00"/><rect x="944" y="280" width="2" height="4" fill="#00ffff"/><rect x="946" y="277" width="2" height="9" fill="#00ffff"/><rect x="948" y="274" width="2" height="9" fill="#00ffff"/><rect x="950" y="272" width="2" height="7" fill="#00ffff"/><rect x="952" y="271" width="2" height="6" fill="#00ffff"/><rect x="954" y="271" width="2" height="4" fill="#00ffff"/><rect x="956" y="270" width="2" height="4" fill="#00ffff"/><rect x="958" y="267" width="2" height="6" fill="#00ffff"/><rect x="960" y="261" width="2" height="11" fill="#00ffff"/><rect x="962" y="233" width="2" height="36" fill="#00ffff"/><rect x="964" y="231" width="2" height="33" fill="#00ffff"/><rect x="966" y="233" width="2" height="3" fill="#ffff00"/><rect x="968" y="231" width="2" height="9" fill="#ffff00"/><rect x="970" y="234" width="2" height="10" fill="#ffff00"/><rect x="972" y="237" width="2" height="3" fill="#ffff00"/><rect x="974" y="231" width="2" height="13" fill="#00ffff"/><rect x="976" y="224" width="2" height="16" fill="#00ffff"/><rect x="978" y="217" width="2" height="16" fill="#00ffff"/><rect x="980" y="213" width="2" height="13" fill="#00ffff"/><rect x="982" y="209" width="2" height="10" fill="#00ffff"/><rect x="984" y="204" width="2" height="11" fill="#00ffff"/><rect x="986" y="199" width="2" height="12" fill="#00ffff"/><rect x="988" y="192" width="2" height="14" fill="#00ffff"/><rect x="990" y="185" width="2" height="16" fill="#00ffff"/><rect x="992" y="182" width="2" height="13" fill="#00ffff"/><rect x="994" y="183" width="2" height="5" fill="#00ffff"/><rect x="996" y="182" width="2" height="3" fill="#ffff00"/><rect x="998" y="175" width="2" height="11" fill="#00ffff"/><rect x="1000" y="168" width="2" height="17" fill="#00ffff"/><rect x="1002" y="162" width="2" height="15" fill="#00ffff"/><rect x="1004" y="155" width="2" height="16" fill="#00ffff"/><rect x="1006" y="147" width="2" height="18" fill="#00ffff"/><rect x="1008" y="131" width="2" height="27" fill="#00ffff"/><rect x="1010" y="116" width="2" height="33" fill="#00ffff"/><rect x="1012" y="109" width="2" height="24" fill="#00ffff"/><rect x="1014" y="108" width="2" height="10" fill="#00ffff"/><rect x="1016" y="108" width="2" height="4" fill="#00ffff"/><rect x="1018" y="108" width="2" height="5" fill="#ffff00"/><rect x="1020" y="108" width="2" height="7" fill="#ffff00"/><rect x="1022" y="110" width="2" height="8" fill="#ffff00"/><rect x="1024" y="113" width="2" height="7" fill="#ffff00"/><rect x="1026" y="115" width="2" height="8" fill="#ffff00"/><rect x="1028" y="118" width="2" height="7" fill="#ffff00"/><rect x="1030" y="121" width="2" height="5" fill="#ffff00"/><rect x="1032" y="123" width="2" height="4" fill="#ffff00"/><rect x="1034" y="124" width="2" height="5" fill="#ffff00"/><rect x="1036" y="125" width="2" height="5" fill="#ffff00"/><rect x="1038" y="126" width="2" height="3" fill="#00ffff"/><rect x="1040" y="123" width="2" height="7" fill="#00ffff"/><rect x="1042" y="123" width="2" height="5" fill="#00ffff"/><rect x="1044" y="123" width="2" height="5" fill="#ffff00"/><rect x="1046" y="123" width="2" height="11" fill="#ffff00"/><rect x="1048" y="126" width="2" height="16" fill="#ffff00"/><rect x="1050" y="132" width="2" height="15" fill="#ffff00"/><rect x="1052" y="140" width="2" height="8" fill="#ffff00"/><rect x="1054" y="144" width="2" height="19" fill="#ffff00"/><rect x="1056" y="146" width="2" height="43" fill="#ffff00"/><rect x="1058" y="161" width="2" height="31" fill="#ffff00"/><rect x="1060" y="186" width="2" height="3" fill="#ffff00"/><rect x="1062" y="184" width="2" height="8" fill="#00ffff"/><rect x="1064" y="185" width="2" height="4" fill="#00ffff"/><rect x="1066" y="184" width="2" height="11" fill="#ffff00"/><rect x="1068" y="185" width="2" height="20" fill="#ffff00"/><rect x="1070" y="192" width="2" height="21" fill="#ffff00"/><rect x="1072" y="202" width="2" height="15" fill="#ffff00"/><rect x="1074" y="211" width="2" height="5" fill="#ffff00"/><rect x="1076" y="214" width="2" height="3" fill="#00ffff"/><rect x="1078" y="213" width="2" height="8" fill="#ffff00"/><rect x="1080" y="214" width="2" height="10" fill="#ffff00"/><rect x="1082" y="218" width="2" height="6" fill="#ffff00"/><rect x="1084" y="221" width="2" height="3" fill="#00ffff"/><rect x="1086" y="220" width="2" height="4" fill="#00ffff"/><rect x="1088" y="221" width="2" height="3" fill="#00ffff"/><rect x="1090" y="220" width="2" height="6" fill="#ffff00"/><rect x="1092" y="221" width="2" height="8" fill="#ffff00"/><rect x="1094" y="224" width="2" height="8" fill="#ffff00"/><rect x="1096" y="227" width="2" height="7" fill="#ffff00"/><rect x="1098" y="229" width="2" height="6" fill="#ffff00"/><rect x="1100" y="230" width="2" height="4" fill="#00ffff"/><rect x="1102" y="226" width="2" height="9" fill="#00ffff"/><rect x="1104" y="220" width="2" height="12" fill="#00ffff"/><rect x="1106" y="213" width="2" height="15" fill="#00ffff"/><rect x="1108" y="209" width="2" height="13" fill="#00ffff"/><rect x="1110" y="206" width="2" height="10" fill="#00ffff"/><rect x="1112" y="203" width="2" height="8" fill="#00ffff"/><rect x="1114" y="200" width="2" height="8" fill="#00ffff"/><rect x="1116" y="196" width="2" height="9" fill="#00ffff"/><rect x="1118" y="193" width="2" height="9" fill="#00ffff"/><rect x="1120" y="190" width="2" height="9" fill="#00ffff"/><rect x="1122" y="186" width="2" height="10" fill="#00ffff"/><rect x="1124" y="181" width="2" height="11" fill="#00ffff"/><rect x="1126" y="178" width="2" height="11" fill="#00ffff"/><rect x="1128" y="181" width="2" height="7" fill="#ffff00"/><rect x="1130" y="178" width="2" height="31" fill="#ffff00"/><rect x="1132" y="186" width="2" height="42" fill="#ffff00"/><rect x="1134" y="206" width="2" height="40" fill="#ffff00"/><rect x="1136" y="226" width="2" height="21" fill="#ffff00"/><rect x="1138" y="238" width="2" height="8" fill="#00ffff"/><rect x="1140" y="226" width="2" height="21" fill="#00ffff"/><rect x="1142" y="221" width="2" height="20" fill="#00ffff"/><rect x="1144" y="221" width="2" height="7" fill="#00ffff"/><rect x="1146" y="221" width="2" height="3" fill="#ffff00"/><rect x="1148" y="221" width="2" height="3" fill="#ffff00"/><rect x="1150" y="221" width="2" height="3" fill="#ffff00"/><rect x="1152" y="221" width="2" height="3" fill="#ffff00"/><rect x="1154" y="221" width="2" height="5" fill="#ffff00"/><rect x="1156" y="222" width="2" height="6" fill="#ffff00"/><rect x="1158" y="224" width="2" height="6" fill="#ffff00"/><rect x="1160" y="226" width="2" height="5" fill="#ffff00"/><rect x="1162" y="227" width="2" height="6" fill="#ffff00"/><rect x="1164" y="229" width="2" height="12" fill="#ffff00"/><rect x="1166" y="231" width="2" height="22" fill="#ffff00"/><rect x="1168" y="238" width="2" height="16" fill="#ffff00"/><rect x="1170" y="250" width="2" height="3" fill="#ffff00"/><rect x="1172" y="251" width="2" height="3" fill="#00ffff"/><rect x="1174" y="251" width="2" height="5" fill="#ffff00"/><rect x="1176" y="251" width="2" height="11" fill="#ffff00"/><rect x="1178" y="254" width="2" height="19" fill="#ffff00"/><rect x="1180" y="259" width="2" height="17" fill="#ffff00"/><rect x="1182" y="271" width="2" height="8" fill="#ffff00"/><rect x="1184" y="274" width="2" height="11" fill="#ffff00"/><rect x="1186" y="277" width="2" height="14" fill="#ffff00"/><rect x="1188" y="283" width="2" height="7" fill="#ffff00"/><rect x="1190" y="286" width="2" height="5" fill="#00ffff"/><rect x="1192" y="283" width="2" height="7" fill="#00ffff"/><rect x="1194" y="280" width="2" height="8" fill="#00ffff"/><rect x="1196" y="277" width="2" height="9" fill="#00ffff"/><rect x="1198" y="272" width="2" height="10" fill="#00ffff"/><rect x="1200" y="267" width="2" height="12" fill="#00ffff"/><rect x="1202" y="262" width="2" height="12" fill="#00ffff"/><rect x="1204" y="259" width="2" height="10" fill="#00ffff"/><rect x="1206" y="262" width="2" height="3" fill="#ffff00"/><rect x="1208" y="259" width="2" height="9" fill="#ffff00"/><rect x="1210" y="262" width="2" height="8" fill="#ffff00"/><rect x="1212" y="263" width="2" height="5" fill="#00ffff"/><rect x="1214" y="256" width="2" height="14" fill="#00ffff"/><rect x="1216" y="254" width="2" height="12" fill="#00ffff"/><rect x="1218" y="253" width="2" height="6" fill="#00ffff"/><rect x="1220" y="254" width="2" height="5" fill="#ffff00"/><rect x="1222" y="253" width="2" height="10" fill="#ffff00"/><rect x="1224" y="257" width="2" height="14" fill="#ffff00"/></g>
<path d="M225 502.5 H249.5 L253 508.5 L249.5 514.5 H225" fill="#ff0000" stroke="#fff" stroke-width="1"/><rect x="225" y="502" width="1" height="16" fill="#ff0000" shape-rendering="crispEdges"/><text x="227" y="512" font-size="9" fill="#fff">04:00</text>
<path d="M535 502.5 H559.5 L563 508.5 L559.5 514.5 H535" fill="#00ff00" stroke="#fff" stroke-width="1"/><rect x="535" y="502" width="1" height="16" fill="#00ff00" shape-rendering="crispEdges"/><text x="537" y="512" font-size="9" fill="#fff">00:00</text>
<path d="M779 502.5 H803.5 L807 508.5 L803.5 514.5 H779" fill="#ff0000" stroke="#fff" stroke-width="1"/><rect x="779" y="502" width="1" height="16" fill="#ff0000" shape-rendering="crispEdges"/><text x="781" y="512" font-size="9" fill="#fff">08:00</text>
<path d="M985 502.5 H1009.5 L1013 508.5 L1009.5 514.5 H985" fill="#ff0000" stroke="#fff" stroke-width="1"/><rect x="985" y="502" width="1" height="16" fill="#ff0000" shape-rendering="crispEdges"/><text x="987" y="512" font-size="9" fill="#fff">12:00</text>
<path d="M1189 502.5 H1213.5 L1217 508.5 L1213.5 514.5 H1189" fill="#00ff00" stroke="#fff" stroke-width="1"/><rect x="1189" y="502" width="1" height="16" fill="#00ff00" shape-rendering="crispEdges"/><text x="1191" y="512" font-size="9" fill="#fff">12:00</text>
<rect x="1537" y="271" width="41" height="11" fill="#ffff00" shape-rendering="crispEdges"/><rect x="1537" y="282" width="41" height="1" fill="#fff" shape-rendering="crispEdges"/>
<text x="1541.3" y="279.8" font-size="9.6" letter-spacing="-0.4" fill="#000">1.27209</text>
<path d="M8 87 h7 l-3.5 4 z" fill="#fff"/>
<text x="20" y="92" font-size="9.5" fill="#fff">GBPUSD,H4</text>
<text x="55.5" y="151" font-size="20" fill="#fff">Elite Scalping and Binary options</text>
<text x="1397" y="514" font-size="13.2" font-family="Liberation Mono, monospace" fill="#00ff00" xml:space="preserve">S: 9.. T: 123:46</text>
<path d="M1223 81 h9.5 l-4.75 5 z" fill="#8a98a6"/>
</svg>
</body></html>
